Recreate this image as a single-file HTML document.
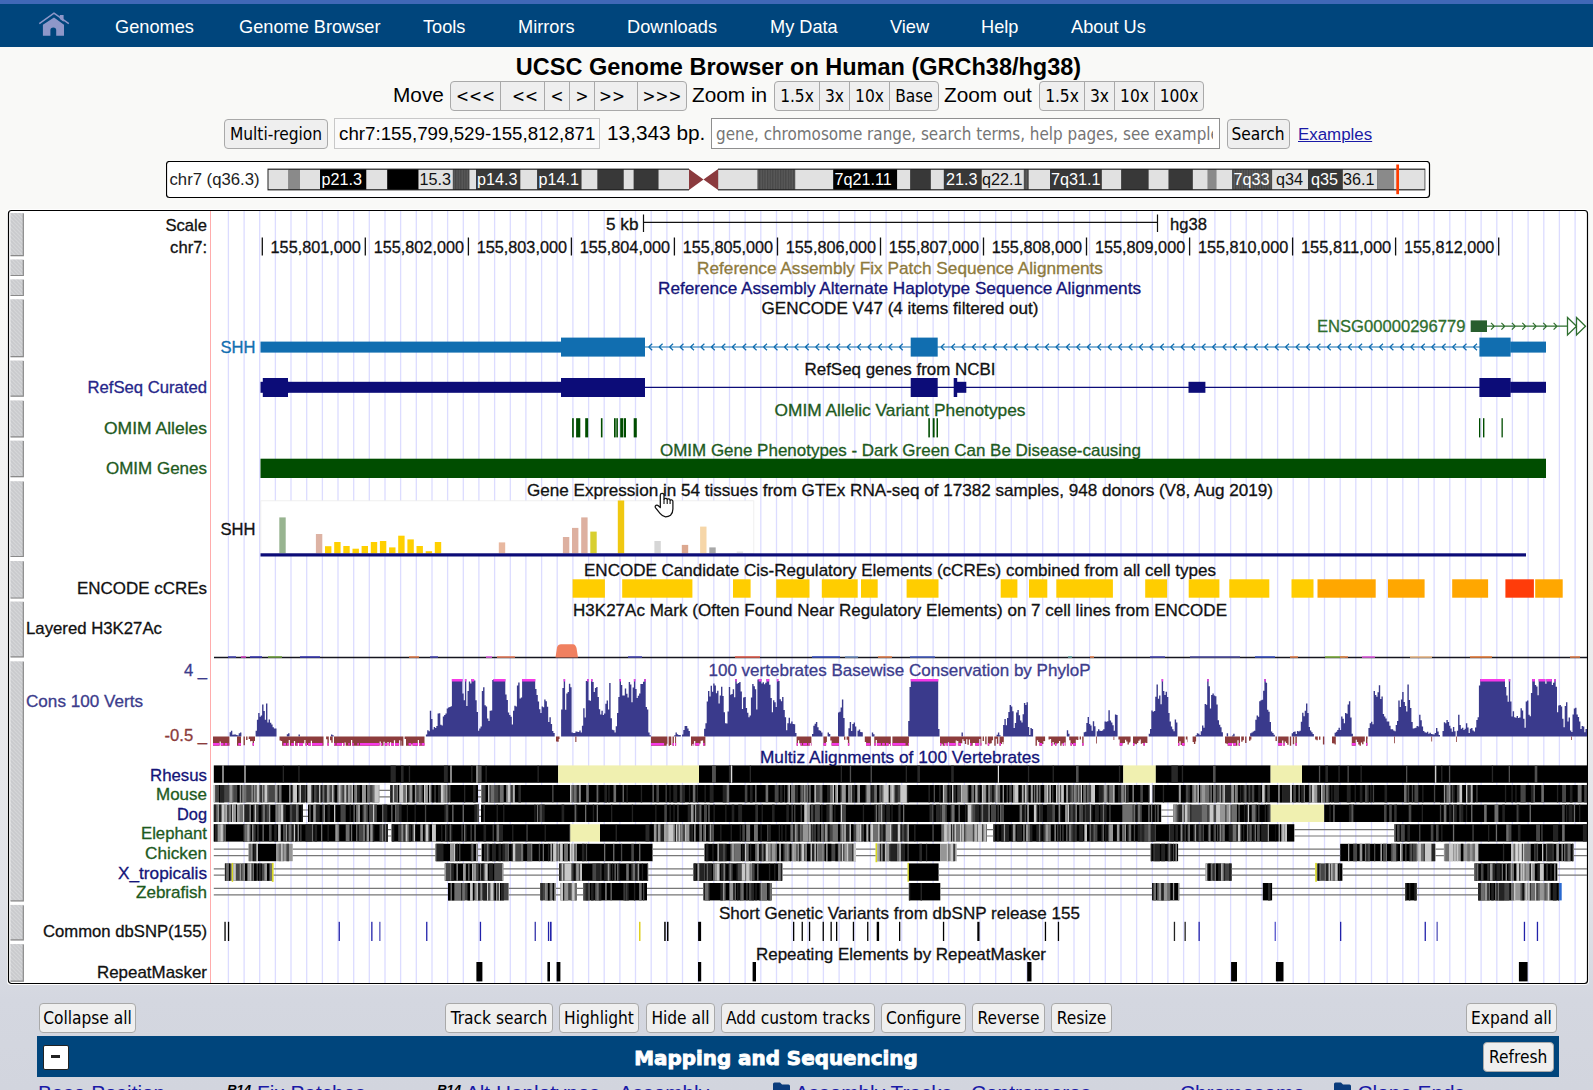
<!DOCTYPE html>
<html lang="en"><head><meta charset="utf-8"><title>Human hg38 chr7:155,799,529-155,812,871 UCSC Genome Browser</title>
<style>
html,body{margin:0;padding:0}
body{width:1593px;height:1090px;overflow:hidden;position:relative;font-family:"Liberation Sans",Arial,sans-serif;color:#000;
background:linear-gradient(to bottom,#f9f9f7 0px,#f9f9f7 300px,#eeeeee 600px,#e0e2e7 900px,#d4d7e0 1000px,#d2d5de 1090px)}
.abs{position:absolute}
#strip{left:0;top:0;width:1593px;height:4px;background:#4068b7}
#nav{left:0;top:4px;width:1593px;height:43px;background:#00457c}
#nav span{position:absolute;top:13px;color:#fff;font-size:18.2px;line-height:20px;white-space:nowrap}
#title{left:2px;width:1593px;top:53px;text-align:center;font-weight:bold;font-size:23.5px;line-height:28px;white-space:nowrap}
.lbl{font-size:20.8px;line-height:24px;white-space:nowrap}
.btn{position:absolute;box-sizing:border-box;border:1px solid #a9a9a9;border-radius:4px;background:#efefef;font-family:"DejaVu Sans Condensed","DejaVu Sans",sans-serif;font-size:17.2px;line-height:28.6px;text-align:center;white-space:nowrap;color:#000;height:30px}
.inp{position:absolute;box-sizing:border-box;border:1px solid #c8c8c8;background:#fafafa;font-size:18.75px;line-height:27px;white-space:nowrap;height:30px;padding-left:4px;overflow:hidden}
</style></head><body>
<div id="strip" class="abs"></div>
<div id="nav" class="abs">
<svg class="abs" style="left:36px;top:-4px" width="36" height="44" viewBox="36 0 36 44"><path d="M39.3 23.7L54 13.1L68.8 23.7" fill="none" stroke="#8e97c9" stroke-width="1.5" stroke-linejoin="miter"/><path d="M59.8 15H63.6V21.8L59.8 19Z" fill="#8e97c9"/><path d="M54 17.4L64 24.8V35.8H56.2V30Q56.2 27.4 53.3 27.4Q50.400000 27.4 50.4 30V35.8H42.9V24.8Z" fill="#8e97c9"/></svg>
<span style="left:115px">Genomes</span>
<span style="left:239px">Genome Browser</span>
<span style="left:423px">Tools</span>
<span style="left:518px">Mirrors</span>
<span style="left:627px">Downloads</span>
<span style="left:770px">My Data</span>
<span style="left:890px">View</span>
<span style="left:981px">Help</span>
<span style="left:1071px">About Us</span>
</div>
<div id="title" class="abs">UCSC Genome Browser on Human (GRCh38/hg38)</div>

<div class="abs lbl" style="left:393px;top:83px">Move</div>
<div class="btn" style="left:450px;top:80.5px;width:51px;border-radius:4px 0 0 4px">&lt;&lt;&lt;</div>
<div class="btn" style="left:500px;top:80.5px;width:45px;border-radius:0;padding-left:5px">&lt;&lt;</div>
<div class="btn" style="left:544px;top:80.5px;width:26px;border-radius:0">&lt;</div>
<div class="btn" style="left:569px;top:80.5px;width:26px;border-radius:0">&gt;</div>
<div class="btn" style="left:594px;top:80.5px;width:44px;border-radius:0;padding-right:8px">&gt;&gt;</div>
<div class="btn" style="left:637px;top:80.5px;width:50px;border-radius:0 4px 4px 0">&gt;&gt;&gt;</div>
<div class="abs lbl" style="left:692px;top:83px">Zoom in</div>
<div class="btn" style="left:774px;top:80.5px;width:46px;border-radius:4px 0 0 4px">1.5x</div>
<div class="btn" style="left:819px;top:80.5px;width:31px;border-radius:0">3x</div>
<div class="btn" style="left:849px;top:80.5px;width:41px;border-radius:0">10x</div>
<div class="btn" style="left:889px;top:80.5px;width:50px;border-radius:0 4px 4px 0">Base</div>
<div class="abs lbl" style="left:944px;top:83px">Zoom out</div>
<div class="btn" style="left:1039px;top:80.5px;width:46px;border-radius:4px 0 0 4px">1.5x</div>
<div class="btn" style="left:1084px;top:80.5px;width:31px;border-radius:0">3x</div>
<div class="btn" style="left:1114px;top:80.5px;width:41px;border-radius:0">10x</div>
<div class="btn" style="left:1154px;top:80.5px;width:50px;border-radius:0 4px 4px 0">100x</div>

<div class="btn" style="left:224px;top:118.5px;width:104px;height:30.5px;line-height:29.6px">Multi-region</div>
<div class="inp" style="left:334px;top:117.5px;width:266px;height:31px;line-height:29px">chr7:155,799,529-155,812,871</div>
<div class="abs lbl" style="left:607px;top:121px">13,343 bp.</div>
<div class="inp" style="left:711px;top:118px;width:509px;height:30.5px;line-height:30.5px;border-color:#8f8f8f;background:#fff;color:#757575;font-family:'DejaVu Sans Condensed',sans-serif;font-size:16.9px"><div style="overflow:hidden;width:497px">gene, chromosome range, search terms, help pages, see examples</div></div>
<div class="btn" style="left:1226.5px;top:118.5px;width:63px;height:30.5px;line-height:29.6px">Search</div>
<div class="abs" style="left:1298px;top:125px;font-size:16.9px;line-height:20px;color:#1a1aa6;text-decoration:underline">Examples</div>

<svg class="abs" style="left:166px;top:161px" width="1265" height="38" viewBox="166 161 1265 38" font-family="Liberation Sans, Arial, sans-serif" font-size="16.2">
<defs><pattern id="gv" width="2.6" height="4" patternUnits="userSpaceOnUse"><rect width="2.6" height="4" fill="#5a5a5a"/><rect width="1.3" height="4" fill="#474747"/></pattern></defs>
<rect x="166.5" y="161.5" width="1263" height="36" rx="3" fill="#fff" stroke="#000" stroke-width="1.2"/>
<text x="169.5" y="185" fill="#222" textLength="90" lengthAdjust="spacingAndGlyphs">chr7 (q36.3)</text>
<rect x="267.5" y="168.6" width="421.5" height="21.8" fill="#222"/>
<rect x="718" y="168.6" width="707.3" height="21.8" fill="#222"/>
<rect x="268.5" y="169.8" width="20.1" height="19.4" fill="#e1e1e1"/>
<rect x="288.6" y="169.8" width="11.4" height="19.4" fill="#8a8a8a"/>
<rect x="300.0" y="169.8" width="20.1" height="19.4" fill="#e1e1e1"/>
<rect x="320.1" y="169.8" width="46.2" height="19.4" fill="#000"/>
<rect x="366.3" y="169.8" width="21.1" height="19.4" fill="#e1e1e1"/>
<rect x="387.4" y="169.8" width="31.1" height="19.4" fill="#000"/>
<rect x="418.5" y="169.8" width="34.4" height="19.4" fill="#e1e1e1"/>
<rect x="452.9" y="169.8" width="16.5" height="19.4" fill="url(#gv)"/>
<rect x="469.4" y="169.8" width="6.6" height="19.4" fill="#e1e1e1"/>
<rect x="476.0" y="169.8" width="44.3" height="19.4" fill="#383838"/>
<rect x="520.3" y="169.8" width="17.0" height="19.4" fill="#e1e1e1"/>
<rect x="537.3" y="169.8" width="44.2" height="19.4" fill="#383838"/>
<rect x="581.5" y="169.8" width="16.1" height="19.4" fill="#e1e1e1"/>
<rect x="597.6" y="169.8" width="26.1" height="19.4" fill="#383838"/>
<rect x="623.7" y="169.8" width="10.1" height="19.4" fill="#e1e1e1"/>
<rect x="633.8" y="169.8" width="24.7" height="19.4" fill="#383838"/>
<rect x="658.5" y="169.8" width="30.5" height="19.4" fill="#e1e1e1"/>
<rect x="718.1" y="169.8" width="39.6" height="19.4" fill="#e1e1e1"/>
<rect x="757.7" y="169.8" width="37.5" height="19.4" fill="url(#gv)"/>
<rect x="795.2" y="169.8" width="38.2" height="19.4" fill="#e1e1e1"/>
<rect x="833.4" y="169.8" width="63.7" height="19.4" fill="#000"/>
<rect x="897.1" y="169.8" width="13.3" height="19.4" fill="#e1e1e1"/>
<rect x="910.4" y="169.8" width="20.4" height="19.4" fill="#383838"/>
<rect x="930.8" y="169.8" width="13.1" height="19.4" fill="#e1e1e1"/>
<rect x="943.9" y="169.8" width="37.8" height="19.4" fill="#383838"/>
<rect x="981.7" y="169.8" width="42.2" height="19.4" fill="#e1e1e1"/>
<rect x="1023.9" y="169.8" width="4.8" height="19.4" fill="url(#gv)"/>
<rect x="1028.7" y="169.8" width="21.4" height="19.4" fill="#e1e1e1"/>
<rect x="1050.1" y="169.8" width="51.7" height="19.4" fill="#383838"/>
<rect x="1101.8" y="169.8" width="19.6" height="19.4" fill="#e1e1e1"/>
<rect x="1121.4" y="169.8" width="27.2" height="19.4" fill="#383838"/>
<rect x="1148.6" y="169.8" width="20.1" height="19.4" fill="#e1e1e1"/>
<rect x="1168.7" y="169.8" width="24.1" height="19.4" fill="#383838"/>
<rect x="1192.8" y="169.8" width="15.0" height="19.4" fill="#e1e1e1"/>
<rect x="1207.8" y="169.8" width="8.5" height="19.4" fill="#8a8a8a"/>
<rect x="1216.3" y="169.8" width="16.0" height="19.4" fill="#e1e1e1"/>
<rect x="1232.3" y="169.8" width="39.8" height="19.4" fill="url(#gv)"/>
<rect x="1272.1" y="169.8" width="36.0" height="19.4" fill="#e1e1e1"/>
<rect x="1308.1" y="169.8" width="34.7" height="19.4" fill="#383838"/>
<rect x="1342.8" y="169.8" width="34.3" height="19.4" fill="#e1e1e1"/>
<rect x="1377.1" y="169.8" width="16.9" height="19.4" fill="#8a8a8a"/>
<rect x="1394.0" y="169.8" width="30.6" height="19.4" fill="#e1e1e1"/>
<path d="M689 169 L703.5 179.5 L689 190 Z M718.1 169 L703.5 179.5 L718.1 190 Z" fill="#8b3a3e"/>
<text x="321.5" y="185.3" fill="#fff">p21.3</text>
<text x="419.5" y="185.3" fill="#111">15.3</text>
<text x="477.0" y="185.3" fill="#fff">p14.3</text>
<text x="538.5" y="185.3" fill="#fff">p14.1</text>
<text x="834.5" y="185.3" fill="#fff">7q21.11</text>
<text x="946.0" y="185.3" fill="#fff">21.3</text>
<text x="982.0" y="185.3" fill="#111">q22.1</text>
<text x="1051.0" y="185.3" fill="#fff">7q31.1</text>
<text x="1233.5" y="185.3" fill="#fff">7q33</text>
<text x="1276.0" y="185.3" fill="#111">q34</text>
<text x="1311.0" y="185.3" fill="#fff">q35</text>
<text x="1343.0" y="185.3" fill="#111">36.1</text>
<rect x="1396.3" y="164.5" width="2.7" height="29.7" fill="#ff3c00"/>
</svg>
<div class="abs" style="left:7px;top:209px;width:1582px;height:776px;background:#fff;border-radius:4px"></div>
<svg class="abs" style="left:7px;top:209px" width="1583" height="777" viewBox="7 209 1583 777" font-family="Liberation Sans, Arial, sans-serif" font-size="16.6">
<defs><clipPath id="cp"><rect x="9" y="211" width="1578" height="772"/></clipPath><pattern id="hatch" width="4" height="4" patternUnits="userSpaceOnUse"><rect width="4" height="4" fill="#c9cacd"/><path d="M0 0L4 4M-1 3L1 5M3 -1L5 1" stroke="#d6d7d9" stroke-width="1.2"/></pattern></defs>
<rect x="8.5" y="210.5" width="1579.0" height="773.0" fill="#fff" stroke="#000" stroke-width="1.2" rx="3"/>
<g clip-path="url(#cp)">
<path d="M228.4 211V983M244.1 211V983M259.7 211V983M275.4 211V983M291.0 211V983M306.7 211V983M322.4 211V983M338.0 211V983M353.7 211V983M369.3 211V983M385.0 211V983M400.6 211V983M416.3 211V983M432.0 211V983M447.6 211V983M463.3 211V983M478.9 211V983M494.6 211V983M510.3 211V983M525.9 211V983M541.6 211V983M557.2 211V983M572.9 211V983M588.6 211V983M604.2 211V983M619.9 211V983M635.5 211V983M651.2 211V983M666.9 211V983M682.5 211V983M698.2 211V983M713.8 211V983M729.5 211V983M745.1 211V983M760.8 211V983M776.5 211V983M792.1 211V983M807.8 211V983M823.4 211V983M839.1 211V983M854.8 211V983M870.4 211V983M886.1 211V983M901.7 211V983M917.4 211V983M933.1 211V983M948.7 211V983M964.4 211V983M980.0 211V983M995.7 211V983M1011.3 211V983M1027.0 211V983M1042.7 211V983M1058.3 211V983M1074.0 211V983M1089.6 211V983M1105.3 211V983M1121.0 211V983M1136.6 211V983M1152.3 211V983M1167.9 211V983M1183.6 211V983M1199.3 211V983M1214.9 211V983M1230.6 211V983M1246.2 211V983M1261.9 211V983M1277.6 211V983M1293.2 211V983M1308.9 211V983M1324.5 211V983M1340.2 211V983M1355.8 211V983M1371.5 211V983M1387.2 211V983M1402.8 211V983M1418.5 211V983M1434.1 211V983M1449.8 211V983M1465.5 211V983M1481.1 211V983M1496.8 211V983M1512.4 211V983M1528.1 211V983M1543.8 211V983M1559.4 211V983M1575.1 211V983" stroke="#dcdcff" stroke-width="1.3" fill="none"/>
<path d="M210.5 211V983" stroke="#ffacac" stroke-width="1" fill="none"/>
<rect x="10.3" y="213.0" width="13.5" height="43.1" fill="url(#hatch)"/>
<path d="M23.3 213.5V255.6H10.6" stroke="#8a8a8a" stroke-width="1.2" fill="none"/>
<rect x="10.3" y="259.4" width="13.5" height="16.6" fill="url(#hatch)"/>
<path d="M23.3 259.9V275.5H10.6" stroke="#8a8a8a" stroke-width="1.2" fill="none"/>
<rect x="10.3" y="279.3" width="13.5" height="16.7" fill="url(#hatch)"/>
<path d="M23.3 279.8V295.5H10.6" stroke="#8a8a8a" stroke-width="1.2" fill="none"/>
<rect x="10.3" y="299.2" width="13.5" height="58.0" fill="url(#hatch)"/>
<path d="M23.3 299.7V356.7H10.6" stroke="#8a8a8a" stroke-width="1.2" fill="none"/>
<rect x="10.3" y="360.5" width="13.5" height="36.2" fill="url(#hatch)"/>
<path d="M23.3 361.0V396.2H10.6" stroke="#8a8a8a" stroke-width="1.2" fill="none"/>
<rect x="10.3" y="400.4" width="13.5" height="36.9" fill="url(#hatch)"/>
<path d="M23.3 400.9V436.8H10.6" stroke="#8a8a8a" stroke-width="1.2" fill="none"/>
<rect x="10.3" y="440.6" width="13.5" height="36.6" fill="url(#hatch)"/>
<path d="M23.3 441.1V476.7H10.6" stroke="#8a8a8a" stroke-width="1.2" fill="none"/>
<rect x="10.3" y="481.2" width="13.5" height="75.8" fill="url(#hatch)"/>
<path d="M23.3 481.7V556.5H10.6" stroke="#8a8a8a" stroke-width="1.2" fill="none"/>
<rect x="10.3" y="561.0" width="13.5" height="37.5" fill="url(#hatch)"/>
<path d="M23.3 561.5V598.0H10.6" stroke="#8a8a8a" stroke-width="1.2" fill="none"/>
<rect x="10.3" y="601.5" width="13.5" height="55.8" fill="url(#hatch)"/>
<path d="M23.3 602.0V656.8H10.6" stroke="#8a8a8a" stroke-width="1.2" fill="none"/>
<rect x="10.3" y="661.3" width="13.5" height="240.0" fill="url(#hatch)"/>
<path d="M23.3 661.8V900.8H10.6" stroke="#8a8a8a" stroke-width="1.2" fill="none"/>
<rect x="10.3" y="904.9" width="13.5" height="35.5" fill="url(#hatch)"/>
<path d="M23.3 905.4V939.9H10.6" stroke="#8a8a8a" stroke-width="1.2" fill="none"/>
<rect x="10.3" y="944.0" width="13.5" height="37.7" fill="url(#hatch)"/>
<path d="M23.3 944.5V981.2H10.6" stroke="#8a8a8a" stroke-width="1.2" fill="none"/>
<text x="207.0" y="231.0" text-anchor="end" fill="#111" stroke="#111" stroke-width="0.3">Scale</text>
<text x="207.0" y="253.0" text-anchor="end" fill="#111" stroke="#111" stroke-width="0.3">chr7:</text>
<text x="638.5" y="229.5" text-anchor="end" fill="#111" stroke="#111" stroke-width="0.3" textLength="32.5" lengthAdjust="spacingAndGlyphs">5 kb</text>
<path d="M643.5 214.5V232M643.5 222.3H1157.5M1157.5 214.5V232" stroke="#111" stroke-width="1.2" fill="none"/>
<text x="1170.0" y="229.5" text-anchor="start" fill="#111" stroke="#111" stroke-width="0.3">hg38</text>
<text x="360.9" y="252.5" text-anchor="end" fill="#111" stroke="#111" stroke-width="0.3" textLength="90.3" lengthAdjust="spacingAndGlyphs">155,801,000</text>
<text x="464.0" y="252.5" text-anchor="end" fill="#111" stroke="#111" stroke-width="0.3" textLength="90.3" lengthAdjust="spacingAndGlyphs">155,802,000</text>
<text x="567.0" y="252.5" text-anchor="end" fill="#111" stroke="#111" stroke-width="0.3" textLength="90.3" lengthAdjust="spacingAndGlyphs">155,803,000</text>
<text x="670.0" y="252.5" text-anchor="end" fill="#111" stroke="#111" stroke-width="0.3" textLength="90.3" lengthAdjust="spacingAndGlyphs">155,804,000</text>
<text x="773.1" y="252.5" text-anchor="end" fill="#111" stroke="#111" stroke-width="0.3" textLength="90.3" lengthAdjust="spacingAndGlyphs">155,805,000</text>
<text x="876.1" y="252.5" text-anchor="end" fill="#111" stroke="#111" stroke-width="0.3" textLength="90.3" lengthAdjust="spacingAndGlyphs">155,806,000</text>
<text x="979.1" y="252.5" text-anchor="end" fill="#111" stroke="#111" stroke-width="0.3" textLength="90.3" lengthAdjust="spacingAndGlyphs">155,807,000</text>
<text x="1082.1" y="252.5" text-anchor="end" fill="#111" stroke="#111" stroke-width="0.3" textLength="90.3" lengthAdjust="spacingAndGlyphs">155,808,000</text>
<text x="1185.2" y="252.5" text-anchor="end" fill="#111" stroke="#111" stroke-width="0.3" textLength="90.3" lengthAdjust="spacingAndGlyphs">155,809,000</text>
<text x="1288.2" y="252.5" text-anchor="end" fill="#111" stroke="#111" stroke-width="0.3" textLength="90.3" lengthAdjust="spacingAndGlyphs">155,810,000</text>
<text x="1391.2" y="252.5" text-anchor="end" fill="#111" stroke="#111" stroke-width="0.3" textLength="90.3" lengthAdjust="spacingAndGlyphs">155,811,000</text>
<text x="1494.3" y="252.5" text-anchor="end" fill="#111" stroke="#111" stroke-width="0.3" textLength="90.3" lengthAdjust="spacingAndGlyphs">155,812,000</text>
<path d="M262.3 237.5V255.5M365.3 237.5V255.5M468.4 237.5V255.5M571.4 237.5V255.5M674.4 237.5V255.5M777.5 237.5V255.5M880.5 237.5V255.5M983.5 237.5V255.5M1086.5 237.5V255.5M1189.6 237.5V255.5M1292.6 237.5V255.5M1395.6 237.5V255.5M1498.7 237.5V255.5" stroke="#111" stroke-width="1.3" fill="none"/>
<text x="900.0" y="274.0" text-anchor="middle" fill="#8e7a3c" stroke="#8e7a3c" stroke-width="0.3" textLength="406.0" lengthAdjust="spacingAndGlyphs">Reference Assembly Fix Patch Sequence Alignments</text>
<text x="899.5" y="294.0" text-anchor="middle" fill="#141478" stroke="#141478" stroke-width="0.3" textLength="483.0" lengthAdjust="spacingAndGlyphs">Reference Assembly Alternate Haplotype Sequence Alignments</text>
<text x="900.0" y="313.5" text-anchor="middle" fill="#111" stroke="#111" stroke-width="0.3" textLength="277.0" lengthAdjust="spacingAndGlyphs">GENCODE V47 (4 items filtered out)</text>
<text x="1465.5" y="332.0" text-anchor="end" fill="#2e6e2e" stroke="#2e6e2e" stroke-width="0.3" textLength="148.5" lengthAdjust="spacingAndGlyphs">ENSG00000296779</text>
<rect x="1470.7" y="320.4" width="16.3" height="11.6" fill="#285e2e"/>
<path d="M1487 326.2H1568M1491.0 322.8L1494.4 326.2L1491.0 329.6M1501.4 322.8L1504.8 326.2L1501.4 329.6M1511.9 322.8L1515.3 326.2L1511.9 329.6M1522.3 322.8L1525.7 326.2L1522.3 329.6M1532.8 322.8L1536.2 326.2L1532.8 329.6M1543.2 322.8L1546.6 326.2L1543.2 329.6M1553.6 322.8L1557.0 326.2L1553.6 329.6" stroke="#2e6e2e" stroke-width="1.2" fill="none"/>
<path d="M1567.5 317.5L1576.5 326.2L1567.5 335ZM1576.5 317.5L1585.5 326.2L1576.5 335Z" stroke="#2e6e2e" stroke-width="1.3" fill="#fff"/>
<text x="255.5" y="353.0" text-anchor="end" fill="#116eb0" stroke="#116eb0" stroke-width="0.3">SHH</text>
<path d="M645 347H1480M652.2 343.8L648.6 347L652.2 350.2M662.6 343.8L659.0 347L662.6 350.2M673.1 343.8L669.5 347L673.1 350.2M683.5 343.8L679.9 347L683.5 350.2M694.0 343.8L690.4 347L694.0 350.2M704.4 343.8L700.8 347L704.4 350.2M714.8 343.8L711.2 347L714.8 350.2M725.3 343.8L721.7 347L725.3 350.2M735.7 343.8L732.1 347L735.7 350.2M746.2 343.8L742.6 347L746.2 350.2M756.6 343.8L753.0 347L756.6 350.2M767.0 343.8L763.4 347L767.0 350.2M777.5 343.8L773.9 347L777.5 350.2M787.9 343.8L784.3 347L787.9 350.2M798.4 343.8L794.8 347L798.4 350.2M808.8 343.8L805.2 347L808.8 350.2M819.2 343.8L815.6 347L819.2 350.2M829.7 343.8L826.1 347L829.7 350.2M840.1 343.8L836.5 347L840.1 350.2M850.6 343.8L847.0 347L850.6 350.2M861.0 343.8L857.4 347L861.0 350.2M871.4 343.8L867.8 347L871.4 350.2M881.9 343.8L878.3 347L881.9 350.2M892.3 343.8L888.7 347L892.3 350.2M902.8 343.8L899.2 347L902.8 350.2M944.5 343.8L940.9 347L944.5 350.2M955.0 343.8L951.4 347L955.0 350.2M965.4 343.8L961.8 347L965.4 350.2M975.8 343.8L972.2 347L975.8 350.2M986.3 343.8L982.7 347L986.3 350.2M996.7 343.8L993.1 347L996.7 350.2M1007.2 343.8L1003.6 347L1007.2 350.2M1017.6 343.8L1014.0 347L1017.6 350.2M1028.0 343.8L1024.4 347L1028.0 350.2M1038.5 343.8L1034.9 347L1038.5 350.2M1048.9 343.8L1045.3 347L1048.9 350.2M1059.4 343.8L1055.8 347L1059.4 350.2M1069.8 343.8L1066.2 347L1069.8 350.2M1080.2 343.8L1076.6 347L1080.2 350.2M1090.7 343.8L1087.1 347L1090.7 350.2M1101.1 343.8L1097.5 347L1101.1 350.2M1111.6 343.8L1108.0 347L1111.6 350.2M1122.0 343.8L1118.4 347L1122.0 350.2M1132.4 343.8L1128.8 347L1132.4 350.2M1142.9 343.8L1139.3 347L1142.9 350.2M1153.3 343.8L1149.7 347L1153.3 350.2M1163.8 343.8L1160.2 347L1163.8 350.2M1174.2 343.8L1170.6 347L1174.2 350.2M1184.6 343.8L1181.0 347L1184.6 350.2M1195.1 343.8L1191.5 347L1195.1 350.2M1205.5 343.8L1201.9 347L1205.5 350.2M1216.0 343.8L1212.4 347L1216.0 350.2M1226.4 343.8L1222.8 347L1226.4 350.2M1236.8 343.8L1233.2 347L1236.8 350.2M1247.3 343.8L1243.7 347L1247.3 350.2M1257.7 343.8L1254.1 347L1257.7 350.2M1268.2 343.8L1264.6 347L1268.2 350.2M1278.6 343.8L1275.0 347L1278.6 350.2M1289.0 343.8L1285.4 347L1289.0 350.2M1299.5 343.8L1295.9 347L1299.5 350.2M1309.9 343.8L1306.3 347L1309.9 350.2M1320.4 343.8L1316.8 347L1320.4 350.2M1330.8 343.8L1327.2 347L1330.8 350.2M1341.2 343.8L1337.6 347L1341.2 350.2M1351.7 343.8L1348.1 347L1351.7 350.2M1362.1 343.8L1358.5 347L1362.1 350.2M1372.6 343.8L1369.0 347L1372.6 350.2M1383.0 343.8L1379.4 347L1383.0 350.2M1393.4 343.8L1389.8 347L1393.4 350.2M1403.9 343.8L1400.3 347L1403.9 350.2M1414.3 343.8L1410.7 347L1414.3 350.2M1424.8 343.8L1421.2 347L1424.8 350.2M1435.2 343.8L1431.6 347L1435.2 350.2M1445.6 343.8L1442.0 347L1445.6 350.2M1456.1 343.8L1452.5 347L1456.1 350.2M1466.5 343.8L1462.9 347L1466.5 350.2M1477.0 343.8L1473.4 347L1477.0 350.2" stroke="#116eb0" stroke-width="1.2" fill="none"/>
<rect x="260.5" y="341.6" width="301.0" height="11.0" fill="#116eb0"/>
<rect x="561.0" y="337.6" width="84.0" height="19.0" fill="#116eb0"/>
<rect x="910.7" y="337.6" width="27.0" height="19.0" fill="#116eb0"/>
<rect x="1479.4" y="337.6" width="31.2" height="19.0" fill="#116eb0"/>
<rect x="1510.2" y="341.6" width="35.8" height="11.0" fill="#116eb0"/>
<text x="900.0" y="375.0" text-anchor="middle" fill="#111" stroke="#111" stroke-width="0.3" textLength="191.0" lengthAdjust="spacingAndGlyphs">RefSeq genes from NCBI</text>
<text x="207.0" y="393.0" text-anchor="end" fill="#26268a" stroke="#26268a" stroke-width="0.3" textLength="119.5" lengthAdjust="spacingAndGlyphs">RefSeq Curated</text>
<path d="M645 387.3H1480" stroke="#0c0c78" stroke-width="1.2" fill="none"/>
<rect x="260.5" y="381.8" width="28.0" height="11.0" fill="#0c0c78"/>
<rect x="262.8" y="378.0" width="25.2" height="19.0" fill="#0c0c78"/>
<rect x="287.5" y="381.8" width="274.0" height="11.0" fill="#0c0c78"/>
<rect x="561.0" y="378.0" width="84.0" height="19.0" fill="#0c0c78"/>
<rect x="910.7" y="378.0" width="27.0" height="19.0" fill="#0c0c78"/>
<rect x="953.7" y="378.0" width="3.5" height="19.0" fill="#0c0c78"/>
<rect x="957.0" y="381.8" width="9.3" height="11.0" fill="#0c0c78"/>
<rect x="1188.5" y="381.8" width="16.9" height="11.0" fill="#0c0c78"/>
<rect x="1479.4" y="378.0" width="31.2" height="19.0" fill="#0c0c78"/>
<rect x="1510.2" y="381.8" width="35.8" height="11.0" fill="#0c0c78"/>
<text x="900.0" y="415.5" text-anchor="middle" fill="#1e5a1e" stroke="#1e5a1e" stroke-width="0.3" textLength="251.0" lengthAdjust="spacingAndGlyphs">OMIM Allelic Variant Phenotypes</text>
<text x="207.0" y="433.5" text-anchor="end" fill="#1e5a1e" stroke="#1e5a1e" stroke-width="0.3" textLength="103.0" lengthAdjust="spacingAndGlyphs">OMIM Alleles</text>
<rect x="572.1" y="418.2" width="1.7" height="19.2" fill="#004d00"/>
<rect x="576.1" y="418.2" width="4.2" height="19.2" fill="#004d00"/>
<rect x="585.2" y="418.2" width="3.0" height="19.2" fill="#004d00"/>
<rect x="600.9" y="418.2" width="1.6" height="19.2" fill="#004d00"/>
<rect x="614.0" y="418.2" width="1.7" height="19.2" fill="#004d00"/>
<rect x="616.3" y="418.2" width="1.6" height="19.2" fill="#004d00"/>
<rect x="620.2" y="418.2" width="3.0" height="19.2" fill="#004d00"/>
<rect x="623.8" y="418.2" width="2.2" height="19.2" fill="#004d00"/>
<rect x="633.7" y="418.2" width="3.1" height="19.2" fill="#004d00"/>
<rect x="928.3" y="418.2" width="1.6" height="19.2" fill="#004d00"/>
<rect x="932.7" y="418.2" width="1.9" height="19.2" fill="#004d00"/>
<rect x="936.5" y="418.2" width="1.5" height="19.2" fill="#004d00"/>
<rect x="1479.0" y="418.2" width="1.3" height="19.2" fill="#004d00"/>
<rect x="1483.0" y="418.2" width="1.4" height="19.2" fill="#004d00"/>
<rect x="1501.5" y="418.2" width="1.3" height="19.2" fill="#004d00"/>
<text x="900.5" y="456.0" text-anchor="middle" fill="#1e5a1e" stroke="#1e5a1e" stroke-width="0.3" textLength="481.0" lengthAdjust="spacingAndGlyphs">OMIM Gene Phenotypes - Dark Green Can Be Disease-causing</text>
<text x="207.0" y="474.0" text-anchor="end" fill="#1e5a1e" stroke="#1e5a1e" stroke-width="0.3" textLength="101.0" lengthAdjust="spacingAndGlyphs">OMIM Genes</text>
<rect x="260.5" y="458.7" width="1285.5" height="19.3" fill="#004d00"/>
<text x="900.0" y="496.0" text-anchor="middle" fill="#111" stroke="#111" stroke-width="0.3" textLength="746.0" lengthAdjust="spacingAndGlyphs">Gene Expression in 54 tissues from GTEx RNA-seq of 17382 samples, 948 donors (V8, Aug 2019)</text>
<rect x="260.8" y="500.8" width="493.0" height="52.6" fill="#fff" stroke="#ececec" stroke-width="0.8"/>
<text x="255.5" y="535.0" text-anchor="end" fill="#111" stroke="#111" stroke-width="0.3">SHH</text>
<rect x="279.3" y="517.4" width="6.4" height="36.0" fill="#98b490"/>
<rect x="315.9" y="534.0" width="6.4" height="19.4" fill="#ddb3a4"/>
<rect x="325.0" y="546.2" width="6.4" height="7.2" fill="#ffd000"/>
<rect x="334.2" y="542.0" width="6.4" height="11.4" fill="#ffd000"/>
<rect x="343.3" y="546.0" width="6.4" height="7.4" fill="#ffd000"/>
<rect x="352.5" y="548.7" width="6.4" height="4.7" fill="#ffd000"/>
<rect x="361.6" y="546.0" width="6.4" height="7.4" fill="#ffd000"/>
<rect x="370.8" y="542.0" width="6.4" height="11.4" fill="#ffd000"/>
<rect x="379.9" y="541.0" width="6.4" height="12.4" fill="#ffd000"/>
<rect x="389.1" y="547.4" width="6.4" height="6.0" fill="#ffd000"/>
<rect x="398.2" y="535.7" width="6.4" height="17.7" fill="#ffd000"/>
<rect x="407.4" y="539.4" width="6.4" height="14.0" fill="#ffd000"/>
<rect x="416.5" y="546.0" width="6.4" height="7.4" fill="#ffd000"/>
<rect x="425.7" y="551.2" width="6.4" height="2.2" fill="#ffd000"/>
<rect x="434.8" y="542.0" width="6.4" height="11.4" fill="#ffd000"/>
<rect x="498.8" y="542.4" width="6.4" height="11.0" fill="#e8b8a0"/>
<rect x="562.9" y="537.0" width="6.4" height="16.4" fill="#ddb0a0"/>
<rect x="572.0" y="527.9" width="6.4" height="25.5" fill="#ddb0a0"/>
<rect x="581.2" y="517.4" width="6.4" height="36.0" fill="#ddb0a0"/>
<rect x="590.3" y="531.6" width="6.4" height="21.8" fill="#d8cf30"/>
<rect x="617.8" y="500.5" width="6.4" height="52.9" fill="#f0c810"/>
<rect x="654.4" y="541.0" width="6.4" height="12.4" fill="#d6d6d6"/>
<rect x="681.8" y="544.9" width="6.4" height="8.5" fill="#dca890"/>
<rect x="700.1" y="526.6" width="6.4" height="26.8" fill="#f6d6a8"/>
<rect x="709.3" y="547.4" width="6.4" height="6.0" fill="#a8a8a8"/>
<rect x="736.7" y="551.5" width="6.4" height="1.9" fill="#e4e4e4"/>
<rect x="260.5" y="553.3" width="1265.5" height="3.2" fill="#0c0c78"/>
<text x="900.0" y="576.0" text-anchor="middle" fill="#111" stroke="#111" stroke-width="0.3" textLength="632.0" lengthAdjust="spacingAndGlyphs">ENCODE Candidate Cis-Regulatory Elements (cCREs) combined from all cell types</text>
<text x="207.0" y="594.0" text-anchor="end" fill="#111" stroke="#111" stroke-width="0.3" textLength="130.0" lengthAdjust="spacingAndGlyphs">ENCODE cCREs</text>
<rect x="572.6" y="579.3" width="32.3" height="18.4" fill="#ffcd00"/>
<rect x="622.2" y="579.3" width="70.2" height="18.4" fill="#ffcd00"/>
<rect x="733.0" y="579.3" width="17.6" height="18.4" fill="#ffcd00"/>
<rect x="776.2" y="579.3" width="33.3" height="18.4" fill="#ffcd00"/>
<rect x="821.8" y="579.3" width="35.9" height="18.4" fill="#ffcd00"/>
<rect x="861.0" y="579.3" width="16.7" height="18.4" fill="#ffcd00"/>
<rect x="906.6" y="579.3" width="31.9" height="18.4" fill="#ffcd00"/>
<rect x="1000.7" y="579.3" width="16.7" height="18.4" fill="#ffcd00"/>
<rect x="1029.0" y="579.3" width="18.3" height="18.4" fill="#ffcd00"/>
<rect x="1056.3" y="579.3" width="56.6" height="18.4" fill="#ffcd00"/>
<rect x="1145.2" y="579.3" width="21.9" height="18.4" fill="#ffcd00"/>
<rect x="1188.7" y="579.3" width="30.7" height="18.4" fill="#ffcd00"/>
<rect x="1229.3" y="579.3" width="40.0" height="18.4" fill="#ffcd00"/>
<rect x="1291.5" y="579.3" width="22.0" height="18.4" fill="#ffcd00"/>
<rect x="1317.5" y="579.3" width="58.2" height="18.4" fill="#ffa700"/>
<rect x="1388.0" y="579.3" width="36.6" height="18.4" fill="#ffa700"/>
<rect x="1452.2" y="579.3" width="35.9" height="18.4" fill="#ffa700"/>
<rect x="1505.4" y="579.3" width="28.5" height="18.4" fill="#ff3c0a"/>
<rect x="1535.2" y="579.3" width="27.5" height="18.4" fill="#ffa700"/>
<text x="900.0" y="616.0" text-anchor="middle" fill="#111" stroke="#111" stroke-width="0.3" textLength="654.0" lengthAdjust="spacingAndGlyphs">H3K27Ac Mark (Often Found Near Regulatory Elements) on 7 cell lines from ENCODE</text>
<text x="26.0" y="634.0" text-anchor="start" fill="#111" stroke="#111" stroke-width="0.3" textLength="136.0" lengthAdjust="spacingAndGlyphs">Layered H3K27Ac</text>
<path d="M214 657.4H1587" stroke="#15151f" stroke-width="1.5" fill="none"/>
<path d="M555.5 657.5L557 647.5Q558 644.2 561 644.2L573 644.2Q575.5 644.2 576.5 648L578 657.5Z" fill="#f08060"/>
<rect x="228.0" y="656.2" width="8.0" height="1.6" fill="#4a4ab0"/>
<rect x="241.0" y="656.2" width="5.0" height="1.6" fill="#d040c0"/>
<rect x="250.0" y="656.2" width="12.0" height="1.6" fill="#3a3ab0"/>
<rect x="268.0" y="656.2" width="14.0" height="1.6" fill="#70a040"/>
<rect x="300.0" y="656.2" width="20.0" height="1.6" fill="#3a3ab0"/>
<rect x="409.0" y="656.2" width="10.0" height="1.6" fill="#e08050"/>
<rect x="430.0" y="656.2" width="8.0" height="1.6" fill="#4a4ab0"/>
<rect x="486.0" y="656.2" width="6.0" height="1.6" fill="#e060e0"/>
<rect x="497.0" y="656.2" width="18.0" height="1.6" fill="#e88060"/>
<rect x="628.0" y="656.2" width="14.0" height="1.6" fill="#4a4ab0"/>
<rect x="735.0" y="656.2" width="25.0" height="1.6" fill="#e06050"/>
<rect x="812.0" y="656.2" width="28.0" height="1.6" fill="#3a50c0"/>
<rect x="845.0" y="656.2" width="13.0" height="1.6" fill="#7090c0"/>
<rect x="878.0" y="656.2" width="14.0" height="1.6" fill="#e08050"/>
<rect x="910.0" y="656.2" width="25.0" height="1.6" fill="#4a60c0"/>
<rect x="1068.0" y="656.2" width="4.0" height="1.6" fill="#60a0a0"/>
<rect x="1090.0" y="656.2" width="4.0" height="1.6" fill="#e08050"/>
<rect x="1150.0" y="656.2" width="15.0" height="1.6" fill="#4a4ab0"/>
<rect x="1190.0" y="656.2" width="50.0" height="1.6" fill="#5050a0"/>
<rect x="1255.0" y="656.2" width="20.0" height="1.6" fill="#3a50c0"/>
<rect x="1290.0" y="656.2" width="8.0" height="1.6" fill="#e08050"/>
<rect x="1325.0" y="656.2" width="20.0" height="1.6" fill="#80b040"/>
<rect x="1340.0" y="656.2" width="8.0" height="1.6" fill="#e08050"/>
<rect x="1362.0" y="656.2" width="13.0" height="1.6" fill="#e060e0"/>
<rect x="1410.0" y="656.2" width="22.0" height="1.6" fill="#f0c090"/>
<rect x="1470.0" y="656.2" width="22.0" height="1.6" fill="#e88040"/>
<rect x="1570.0" y="656.2" width="10.0" height="1.6" fill="#e08050"/>
<text x="899.5" y="676.0" text-anchor="middle" fill="#3c3c8c" stroke="#3c3c8c" stroke-width="0.3" textLength="382.0" lengthAdjust="spacingAndGlyphs">100 vertebrates Basewise Conservation by PhyloP</text>
<text x="26.0" y="707.0" text-anchor="start" fill="#3c3c8c" stroke="#3c3c8c" stroke-width="0.3" textLength="117.0" lengthAdjust="spacingAndGlyphs">Cons 100 Verts</text>
<text x="207.0" y="675.5" text-anchor="end" fill="#3c3c8c" stroke="#3c3c8c" stroke-width="0.3">4 _</text>
<text x="207.0" y="740.5" text-anchor="end" fill="#8c3c3c" stroke="#8c3c3c" stroke-width="0.3">-0.5 _</text>
<path d="M229.6 736.5V732.3h1.4V736.5zM230.9 736.5V730.7h1.4V736.5zM232.2 736.5V734.8h1.4V736.5zM233.5 736.5V734.6h1.4V736.5zM234.8 736.5V734.5h1.4V736.5zM236.1 736.5V734.9h1.4V736.5zM237.4 736.5V735.5h1.4V736.5zM238.7 736.5V733.2h1.4V736.5zM240.0 736.5V732.4h1.4V736.5zM255.6 736.5V730.8h1.4V736.5zM256.9 736.5V719.8h1.4V736.5zM258.2 736.5V713.0h1.4V736.5zM259.5 736.5V716.8h1.4V736.5zM260.8 736.5V715.4h1.4V736.5zM262.1 736.5V704.6h1.4V736.5zM263.4 736.5V711.0h1.4V736.5zM264.7 736.5V719.8h1.4V736.5zM266.0 736.5V703.6h1.4V736.5zM267.3 736.5V722.4h1.4V736.5zM268.6 736.5V719.5h1.4V736.5zM269.9 736.5V722.8h1.4V736.5zM271.2 736.5V724.6h1.4V736.5zM272.5 736.5V727.3h1.4V736.5zM273.8 736.5V728.5h1.4V736.5zM275.1 736.5V728.4h1.4V736.5zM286.8 736.5V734.2h1.4V736.5zM288.1 736.5V733.3h1.4V736.5zM298.5 736.5V734.5h1.4V736.5zM331.0 736.5V734.5h1.4V736.5zM332.3 736.5V735.3h1.4V736.5zM425.9 736.5V734.5h1.4V736.5zM427.2 736.5V730.3h1.4V736.5zM428.5 736.5V731.3h1.4V736.5zM429.8 736.5V710.8h1.4V736.5zM431.1 736.5V719.0h1.4V736.5zM432.4 736.5V729.5h1.4V736.5zM433.7 736.5V726.9h1.4V736.5zM435.0 736.5V728.1h1.4V736.5zM436.3 736.5V726.1h1.4V736.5zM437.6 736.5V713.4h1.4V736.5zM438.9 736.5V713.2h1.4V736.5zM440.2 736.5V724.8h1.4V736.5zM441.5 736.5V725.5h1.4V736.5zM442.8 736.5V716.5h1.4V736.5zM444.1 736.5V714.9h1.4V736.5zM445.4 736.5V713.6h1.4V736.5zM446.7 736.5V708.5h1.4V736.5zM448.0 736.5V707.6h1.4V736.5zM449.3 736.5V707.0h1.4V736.5zM450.6 736.5V706.3h1.4V736.5zM451.9 736.5V679.0h1.4V736.5zM453.2 736.5V679.0h1.4V736.5zM454.5 736.5V679.0h1.4V736.5zM455.8 736.5V679.0h1.4V736.5zM457.1 736.5V679.0h1.4V736.5zM458.4 736.5V679.0h1.4V736.5zM459.7 736.5V679.0h1.4V736.5zM461.0 736.5V679.0h1.4V736.5zM462.3 736.5V693.6h1.4V736.5zM463.6 736.5V700.3h1.4V736.5zM464.9 736.5V679.0h1.4V736.5zM466.2 736.5V706.1h1.4V736.5zM467.5 736.5V691.0h1.4V736.5zM468.8 736.5V681.6h1.4V736.5zM470.1 736.5V683.6h1.4V736.5zM471.4 736.5V679.0h1.4V736.5zM472.7 736.5V679.0h1.4V736.5zM474.0 736.5V680.4h1.4V736.5zM475.3 736.5V700.2h1.4V736.5zM476.6 736.5V712.1h1.4V736.5zM477.9 736.5V730.7h1.4V736.5zM479.2 736.5V728.6h1.4V736.5zM480.5 736.5V726.4h1.4V736.5zM481.8 736.5V690.9h1.4V736.5zM483.1 736.5V687.2h1.4V736.5zM484.4 736.5V705.2h1.4V736.5zM485.7 736.5V706.5h1.4V736.5zM487.0 736.5V718.4h1.4V736.5zM488.3 736.5V721.1h1.4V736.5zM489.6 736.5V710.7h1.4V736.5zM490.9 736.5V710.4h1.4V736.5zM492.2 736.5V680.1h1.4V736.5zM493.5 736.5V679.0h1.4V736.5zM494.8 736.5V679.0h1.4V736.5zM496.1 736.5V679.0h1.4V736.5zM497.4 736.5V679.0h1.4V736.5zM498.7 736.5V679.0h1.4V736.5zM500.0 736.5V679.0h1.4V736.5zM501.3 736.5V679.0h1.4V736.5zM502.6 736.5V679.0h1.4V736.5zM503.9 736.5V679.0h1.4V736.5zM505.2 736.5V694.5h1.4V736.5zM506.5 736.5V700.1h1.4V736.5zM507.8 736.5V712.6h1.4V736.5zM509.1 736.5V715.1h1.4V736.5zM510.4 736.5V716.8h1.4V736.5zM511.7 736.5V724.5h1.4V736.5zM513.0 736.5V710.7h1.4V736.5zM514.3 736.5V705.7h1.4V736.5zM515.6 736.5V706.5h1.4V736.5zM516.9 736.5V685.6h1.4V736.5zM518.2 736.5V682.5h1.4V736.5zM519.5 736.5V698.6h1.4V736.5zM520.8 736.5V697.5h1.4V736.5zM522.1 736.5V679.0h1.4V736.5zM523.4 736.5V679.0h1.4V736.5zM524.7 736.5V679.0h1.4V736.5zM526.0 736.5V679.0h1.4V736.5zM527.3 736.5V679.0h1.4V736.5zM528.6 736.5V679.0h1.4V736.5zM529.9 736.5V679.0h1.4V736.5zM531.2 736.5V679.0h1.4V736.5zM532.5 736.5V679.0h1.4V736.5zM533.8 736.5V679.0h1.4V736.5zM535.1 736.5V688.9h1.4V736.5zM536.4 736.5V695.1h1.4V736.5zM537.7 736.5V701.5h1.4V736.5zM539.0 736.5V709.3h1.4V736.5zM540.3 736.5V713.1h1.4V736.5zM541.6 736.5V706.5h1.4V736.5zM542.9 736.5V707.2h1.4V736.5zM544.2 736.5V699.4h1.4V736.5zM545.5 736.5V701.3h1.4V736.5zM546.8 736.5V706.8h1.4V736.5zM548.1 736.5V722.1h1.4V736.5zM549.4 736.5V717.2h1.4V736.5zM550.7 736.5V723.9h1.4V736.5zM552.0 736.5V731.0h1.4V736.5zM553.3 736.5V732.9h1.4V736.5zM561.1 736.5V709.5h1.4V736.5zM562.4 736.5V688.1h1.4V736.5zM563.7 736.5V679.0h1.4V736.5zM565.0 736.5V709.8h1.4V736.5zM566.3 736.5V693.4h1.4V736.5zM567.6 736.5V692.1h1.4V736.5zM568.9 736.5V683.8h1.4V736.5zM570.2 736.5V687.3h1.4V736.5zM571.5 736.5V732.4h1.4V736.5zM572.8 736.5V733.0h1.4V736.5zM574.1 736.5V733.0h1.4V736.5zM575.4 736.5V731.5h1.4V736.5zM576.7 736.5V731.7h1.4V736.5zM578.0 736.5V732.1h1.4V736.5zM579.3 736.5V730.5h1.4V736.5zM580.6 736.5V732.4h1.4V736.5zM581.9 736.5V725.7h1.4V736.5zM583.2 736.5V708.2h1.4V736.5zM584.5 736.5V717.6h1.4V736.5zM585.8 736.5V681.0h1.4V736.5zM587.1 736.5V679.0h1.4V736.5zM588.4 736.5V700.2h1.4V736.5zM589.7 736.5V700.8h1.4V736.5zM591.0 736.5V679.0h1.4V736.5zM592.3 736.5V681.9h1.4V736.5zM593.6 736.5V692.1h1.4V736.5zM594.9 736.5V688.0h1.4V736.5zM596.2 736.5V687.1h1.4V736.5zM597.5 736.5V697.0h1.4V736.5zM598.8 736.5V709.3h1.4V736.5zM600.1 736.5V714.4h1.4V736.5zM601.4 736.5V710.8h1.4V736.5zM602.7 736.5V714.9h1.4V736.5zM604.0 736.5V713.4h1.4V736.5zM605.3 736.5V703.7h1.4V736.5zM606.6 736.5V700.5h1.4V736.5zM607.9 736.5V709.4h1.4V736.5zM609.2 736.5V683.1h1.4V736.5zM610.5 736.5V718.2h1.4V736.5zM611.8 736.5V729.8h1.4V736.5zM613.1 736.5V730.3h1.4V736.5zM614.4 736.5V732.5h1.4V736.5zM615.7 736.5V726.3h1.4V736.5zM617.0 736.5V713.0h1.4V736.5zM618.3 736.5V697.1h1.4V736.5zM619.6 736.5V679.0h1.4V736.5zM620.9 736.5V685.0h1.4V736.5zM622.2 736.5V695.6h1.4V736.5zM623.5 736.5V695.4h1.4V736.5zM624.8 736.5V688.6h1.4V736.5zM626.1 736.5V693.7h1.4V736.5zM627.4 736.5V697.4h1.4V736.5zM628.7 736.5V682.0h1.4V736.5zM630.0 736.5V684.4h1.4V736.5zM631.3 736.5V702.2h1.4V736.5zM632.6 736.5V687.5h1.4V736.5zM633.9 736.5V679.0h1.4V736.5zM635.2 736.5V689.1h1.4V736.5zM636.5 736.5V697.9h1.4V736.5zM637.8 736.5V695.7h1.4V736.5zM639.1 736.5V693.4h1.4V736.5zM640.4 736.5V684.0h1.4V736.5zM641.7 736.5V684.1h1.4V736.5zM643.0 736.5V681.8h1.4V736.5zM644.3 736.5V679.0h1.4V736.5zM645.6 736.5V707.0h1.4V736.5zM646.9 736.5V709.6h1.4V736.5zM648.2 736.5V732.4h1.4V736.5zM649.5 736.5V735.3h1.4V736.5zM674.2 736.5V735.3h1.4V736.5zM675.5 736.5V732.4h1.4V736.5zM676.8 736.5V734.3h1.4V736.5zM678.1 736.5V735.0h1.4V736.5zM679.4 736.5V735.1h1.4V736.5zM682.0 736.5V734.6h1.4V736.5zM683.3 736.5V730.0h1.4V736.5zM684.6 736.5V726.0h1.4V736.5zM685.9 736.5V725.9h1.4V736.5zM687.2 736.5V728.5h1.4V736.5zM688.5 736.5V731.1h1.4V736.5zM704.1 736.5V728.8h1.4V736.5zM705.4 736.5V723.3h1.4V736.5zM706.7 736.5V701.5h1.4V736.5zM708.0 736.5V691.0h1.4V736.5zM709.3 736.5V696.4h1.4V736.5zM710.6 736.5V685.8h1.4V736.5zM711.9 736.5V691.8h1.4V736.5zM713.2 736.5V683.6h1.4V736.5zM714.5 736.5V685.4h1.4V736.5zM715.8 736.5V693.3h1.4V736.5zM717.1 736.5V690.8h1.4V736.5zM718.4 736.5V703.6h1.4V736.5zM719.7 736.5V695.4h1.4V736.5zM721.0 736.5V686.7h1.4V736.5zM722.3 736.5V696.0h1.4V736.5zM723.6 736.5V712.3h1.4V736.5zM724.9 736.5V723.3h1.4V736.5zM726.2 736.5V723.6h1.4V736.5zM727.5 736.5V711.5h1.4V736.5zM728.8 736.5V687.0h1.4V736.5zM730.1 736.5V694.7h1.4V736.5zM731.4 736.5V694.1h1.4V736.5zM732.7 736.5V689.2h1.4V736.5zM734.0 736.5V697.2h1.4V736.5zM735.3 736.5V679.0h1.4V736.5zM736.6 736.5V683.7h1.4V736.5zM737.9 736.5V683.1h1.4V736.5zM739.2 736.5V682.1h1.4V736.5zM740.5 736.5V691.6h1.4V736.5zM741.8 736.5V708.9h1.4V736.5zM743.1 736.5V697.4h1.4V736.5zM744.4 736.5V697.1h1.4V736.5zM745.7 736.5V708.0h1.4V736.5zM747.0 736.5V712.8h1.4V736.5zM748.3 736.5V717.2h1.4V736.5zM749.6 736.5V715.6h1.4V736.5zM750.9 736.5V697.5h1.4V736.5zM752.2 736.5V684.1h1.4V736.5zM753.5 736.5V686.2h1.4V736.5zM754.8 736.5V689.2h1.4V736.5zM756.1 736.5V709.4h1.4V736.5zM757.4 736.5V679.5h1.4V736.5zM758.7 736.5V679.0h1.4V736.5zM760.0 736.5V679.0h1.4V736.5zM761.3 736.5V683.6h1.4V736.5zM762.6 736.5V682.3h1.4V736.5zM763.9 736.5V684.3h1.4V736.5zM765.2 736.5V682.8h1.4V736.5zM766.5 736.5V679.0h1.4V736.5zM767.8 736.5V679.0h1.4V736.5zM769.1 736.5V684.7h1.4V736.5zM770.4 736.5V697.9h1.4V736.5zM771.7 736.5V712.2h1.4V736.5zM773.0 736.5V700.2h1.4V736.5zM774.3 736.5V702.2h1.4V736.5zM775.6 736.5V707.1h1.4V736.5zM776.9 736.5V679.0h1.4V736.5zM778.2 736.5V681.1h1.4V736.5zM779.5 736.5V699.2h1.4V736.5zM780.8 736.5V701.2h1.4V736.5zM782.1 736.5V696.9h1.4V736.5zM783.4 736.5V710.0h1.4V736.5zM784.7 736.5V717.2h1.4V736.5zM786.0 736.5V730.2h1.4V736.5zM787.3 736.5V723.2h1.4V736.5zM788.6 736.5V717.7h1.4V736.5zM789.9 736.5V723.5h1.4V736.5zM791.2 736.5V721.4h1.4V736.5zM792.5 736.5V724.1h1.4V736.5zM793.8 736.5V724.2h1.4V736.5zM795.1 736.5V733.0h1.4V736.5zM812.0 736.5V734.1h1.4V736.5zM813.3 736.5V725.7h1.4V736.5zM814.6 736.5V723.7h1.4V736.5zM815.9 736.5V722.0h1.4V736.5zM817.2 736.5V727.2h1.4V736.5zM818.5 736.5V730.3h1.4V736.5zM819.8 736.5V730.7h1.4V736.5zM821.1 736.5V732.6h1.4V736.5zM827.6 736.5V732.4h1.4V736.5zM828.9 736.5V734.0h1.4V736.5zM838.0 736.5V712.4h1.4V736.5zM839.3 736.5V711.8h1.4V736.5zM840.6 736.5V707.4h1.4V736.5zM841.9 736.5V699.4h1.4V736.5zM843.2 736.5V717.9h1.4V736.5zM848.4 736.5V728.3h1.4V736.5zM849.7 736.5V722.0h1.4V736.5zM851.0 736.5V731.1h1.4V736.5zM852.3 736.5V723.9h1.4V736.5zM853.6 736.5V722.6h1.4V736.5zM854.9 736.5V726.6h1.4V736.5zM857.5 736.5V730.7h1.4V736.5zM858.8 736.5V729.5h1.4V736.5zM860.1 736.5V732.0h1.4V736.5zM861.4 736.5V732.3h1.4V736.5zM871.8 736.5V732.4h1.4V736.5zM873.1 736.5V734.3h1.4V736.5zM908.2 736.5V721.0h1.4V736.5zM909.5 736.5V687.0h1.4V736.5zM910.8 736.5V679.0h1.4V736.5zM912.1 736.5V679.0h1.4V736.5zM913.4 736.5V679.0h1.4V736.5zM914.7 736.5V679.0h1.4V736.5zM916.0 736.5V679.0h1.4V736.5zM917.3 736.5V679.0h1.4V736.5zM918.6 736.5V679.0h1.4V736.5zM919.9 736.5V679.0h1.4V736.5zM921.2 736.5V679.0h1.4V736.5zM922.5 736.5V679.0h1.4V736.5zM923.8 736.5V679.0h1.4V736.5zM925.1 736.5V679.0h1.4V736.5zM926.4 736.5V679.0h1.4V736.5zM927.7 736.5V679.0h1.4V736.5zM929.0 736.5V679.0h1.4V736.5zM930.3 736.5V679.0h1.4V736.5zM931.6 736.5V679.0h1.4V736.5zM932.9 736.5V679.0h1.4V736.5zM934.2 736.5V679.0h1.4V736.5zM935.5 736.5V679.0h1.4V736.5zM936.8 736.5V679.0h1.4V736.5zM938.1 736.5V728.9h1.4V736.5zM961.5 736.5V732.4h1.4V736.5zM996.6 736.5V734.7h1.4V736.5zM997.9 736.5V732.4h1.4V736.5zM999.2 736.5V735.2h1.4V736.5zM1003.1 736.5V725.1h1.4V736.5zM1004.4 736.5V718.9h1.4V736.5zM1005.7 736.5V725.3h1.4V736.5zM1007.0 736.5V717.9h1.4V736.5zM1008.3 736.5V711.9h1.4V736.5zM1009.6 736.5V705.0h1.4V736.5zM1010.9 736.5V706.6h1.4V736.5zM1012.2 736.5V711.3h1.4V736.5zM1013.5 736.5V728.0h1.4V736.5zM1014.8 736.5V723.0h1.4V736.5zM1016.1 736.5V712.6h1.4V736.5zM1017.4 736.5V710.1h1.4V736.5zM1018.7 736.5V715.3h1.4V736.5zM1020.0 736.5V720.5h1.4V736.5zM1021.3 736.5V722.6h1.4V736.5zM1022.6 736.5V714.2h1.4V736.5zM1023.9 736.5V703.1h1.4V736.5zM1025.2 736.5V705.1h1.4V736.5zM1026.5 736.5V702.2h1.4V736.5zM1027.8 736.5V726.9h1.4V736.5zM1029.1 736.5V735.1h1.4V736.5zM1030.4 736.5V727.9h1.4V736.5zM1031.7 736.5V728.9h1.4V736.5zM1066.8 736.5V730.3h1.4V736.5zM1068.1 736.5V733.8h1.4V736.5zM1083.7 736.5V732.3h1.4V736.5zM1085.0 736.5V731.7h1.4V736.5zM1086.3 736.5V723.1h1.4V736.5zM1087.6 736.5V716.9h1.4V736.5zM1088.9 736.5V724.1h1.4V736.5zM1090.2 736.5V725.5h1.4V736.5zM1091.5 736.5V730.7h1.4V736.5zM1092.8 736.5V721.2h1.4V736.5zM1094.1 736.5V726.3h1.4V736.5zM1096.7 736.5V731.3h1.4V736.5zM1098.0 736.5V729.2h1.4V736.5zM1099.3 736.5V730.7h1.4V736.5zM1100.6 736.5V731.0h1.4V736.5zM1101.9 736.5V730.4h1.4V736.5zM1103.2 736.5V729.3h1.4V736.5zM1104.5 736.5V721.6h1.4V736.5zM1105.8 736.5V721.8h1.4V736.5zM1107.1 736.5V721.2h1.4V736.5zM1108.4 736.5V710.3h1.4V736.5zM1109.7 736.5V720.5h1.4V736.5zM1111.0 736.5V722.5h1.4V736.5zM1112.3 736.5V725.3h1.4V736.5zM1113.6 736.5V730.7h1.4V736.5zM1114.9 736.5V714.4h1.4V736.5zM1116.2 736.5V715.0h1.4V736.5zM1148.7 736.5V733.7h1.4V736.5zM1150.0 736.5V728.9h1.4V736.5zM1151.3 736.5V710.6h1.4V736.5zM1152.6 736.5V711.7h1.4V736.5zM1153.9 736.5V711.0h1.4V736.5zM1155.2 736.5V696.7h1.4V736.5zM1156.5 736.5V684.4h1.4V736.5zM1157.8 736.5V698.7h1.4V736.5zM1159.1 736.5V695.6h1.4V736.5zM1160.4 736.5V704.2h1.4V736.5zM1161.7 736.5V679.0h1.4V736.5zM1163.0 736.5V690.9h1.4V736.5zM1164.3 736.5V695.1h1.4V736.5zM1165.6 736.5V691.8h1.4V736.5zM1166.9 736.5V697.0h1.4V736.5zM1168.2 736.5V712.9h1.4V736.5zM1169.5 736.5V721.5h1.4V736.5zM1170.8 736.5V726.4h1.4V736.5zM1172.1 736.5V729.2h1.4V736.5zM1173.4 736.5V731.3h1.4V736.5zM1174.7 736.5V719.5h1.4V736.5zM1176.0 736.5V722.5h1.4V736.5zM1195.5 736.5V735.2h1.4V736.5zM1196.8 736.5V733.3h1.4V736.5zM1198.1 736.5V733.7h1.4V736.5zM1199.4 736.5V735.0h1.4V736.5zM1200.7 736.5V731.2h1.4V736.5zM1202.0 736.5V725.5h1.4V736.5zM1203.3 736.5V727.8h1.4V736.5zM1204.6 736.5V703.9h1.4V736.5zM1205.9 736.5V704.7h1.4V736.5zM1207.2 736.5V679.0h1.4V736.5zM1208.5 736.5V686.3h1.4V736.5zM1209.8 736.5V708.4h1.4V736.5zM1211.1 736.5V695.1h1.4V736.5zM1212.4 736.5V693.6h1.4V736.5zM1213.7 736.5V695.4h1.4V736.5zM1215.0 736.5V696.2h1.4V736.5zM1216.3 736.5V704.4h1.4V736.5zM1217.6 736.5V720.3h1.4V736.5zM1218.9 736.5V724.7h1.4V736.5zM1220.2 736.5V727.2h1.4V736.5zM1221.5 736.5V732.2h1.4V736.5zM1226.7 736.5V733.3h1.4V736.5zM1231.9 736.5V735.5h1.4V736.5zM1233.2 736.5V733.8h1.4V736.5zM1250.1 736.5V733.3h1.4V736.5zM1251.4 736.5V732.6h1.4V736.5zM1252.7 736.5V731.6h1.4V736.5zM1254.0 736.5V730.8h1.4V736.5zM1255.3 736.5V719.8h1.4V736.5zM1256.6 736.5V715.5h1.4V736.5zM1257.9 736.5V716.7h1.4V736.5zM1259.2 736.5V701.2h1.4V736.5zM1260.5 736.5V700.2h1.4V736.5zM1261.8 736.5V699.8h1.4V736.5zM1263.1 736.5V690.8h1.4V736.5zM1264.4 736.5V679.0h1.4V736.5zM1265.7 736.5V682.7h1.4V736.5zM1267.0 736.5V709.8h1.4V736.5zM1268.3 736.5V711.7h1.4V736.5zM1269.6 736.5V722.1h1.4V736.5zM1270.9 736.5V731.6h1.4V736.5zM1272.2 736.5V732.9h1.4V736.5zM1273.5 736.5V734.8h1.4V736.5zM1291.7 736.5V733.2h1.4V736.5zM1293.0 736.5V731.9h1.4V736.5zM1294.3 736.5V731.5h1.4V736.5zM1295.6 736.5V734.0h1.4V736.5zM1296.9 736.5V730.9h1.4V736.5zM1298.2 736.5V731.6h1.4V736.5zM1299.5 736.5V730.7h1.4V736.5zM1300.8 736.5V721.7h1.4V736.5zM1302.1 736.5V712.8h1.4V736.5zM1303.4 736.5V716.3h1.4V736.5zM1304.7 736.5V710.8h1.4V736.5zM1306.0 736.5V703.4h1.4V736.5zM1307.3 736.5V713.0h1.4V736.5zM1308.6 736.5V727.1h1.4V736.5zM1309.9 736.5V730.5h1.4V736.5zM1311.2 736.5V732.3h1.4V736.5zM1312.5 736.5V733.9h1.4V736.5zM1334.6 736.5V732.7h1.4V736.5zM1335.9 736.5V731.7h1.4V736.5zM1337.2 736.5V729.9h1.4V736.5zM1338.5 736.5V727.8h1.4V736.5zM1339.8 736.5V730.1h1.4V736.5zM1341.1 736.5V716.4h1.4V736.5zM1342.4 736.5V718.8h1.4V736.5zM1343.7 736.5V723.3h1.4V736.5zM1345.0 736.5V713.0h1.4V736.5zM1346.3 736.5V713.7h1.4V736.5zM1347.6 736.5V704.5h1.4V736.5zM1348.9 736.5V701.3h1.4V736.5zM1350.2 736.5V717.4h1.4V736.5zM1351.5 736.5V733.7h1.4V736.5zM1368.4 736.5V728.1h1.4V736.5zM1369.7 736.5V723.3h1.4V736.5zM1371.0 736.5V721.7h1.4V736.5zM1372.3 736.5V724.2h1.4V736.5zM1373.6 736.5V690.9h1.4V736.5zM1374.9 736.5V695.1h1.4V736.5zM1376.2 736.5V696.7h1.4V736.5zM1377.5 736.5V692.2h1.4V736.5zM1378.8 736.5V685.2h1.4V736.5zM1380.1 736.5V699.1h1.4V736.5zM1381.4 736.5V696.5h1.4V736.5zM1382.7 736.5V714.0h1.4V736.5zM1384.0 736.5V716.6h1.4V736.5zM1385.3 736.5V718.6h1.4V736.5zM1386.6 736.5V721.6h1.4V736.5zM1387.9 736.5V721.6h1.4V736.5zM1389.2 736.5V725.8h1.4V736.5zM1390.5 736.5V729.3h1.4V736.5zM1391.8 736.5V729.3h1.4V736.5zM1393.1 736.5V730.5h1.4V736.5zM1394.4 736.5V731.2h1.4V736.5zM1395.7 736.5V725.1h1.4V736.5zM1397.0 736.5V721.1h1.4V736.5zM1398.3 736.5V700.4h1.4V736.5zM1399.6 736.5V707.0h1.4V736.5zM1400.9 736.5V699.5h1.4V736.5zM1402.2 736.5V691.9h1.4V736.5zM1403.5 736.5V702.0h1.4V736.5zM1404.8 736.5V706.0h1.4V736.5zM1406.1 736.5V711.6h1.4V736.5zM1407.4 736.5V684.4h1.4V736.5zM1408.7 736.5V700.1h1.4V736.5zM1410.0 736.5V707.9h1.4V736.5zM1411.3 736.5V721.9h1.4V736.5zM1412.6 736.5V728.6h1.4V736.5zM1413.9 736.5V728.3h1.4V736.5zM1415.2 736.5V727.7h1.4V736.5zM1416.5 736.5V726.1h1.4V736.5zM1417.8 736.5V726.4h1.4V736.5zM1419.1 736.5V714.7h1.4V736.5zM1420.4 736.5V720.2h1.4V736.5zM1421.7 736.5V726.5h1.4V736.5zM1423.0 736.5V730.9h1.4V736.5zM1424.3 736.5V732.2h1.4V736.5zM1425.6 736.5V732.7h1.4V736.5zM1426.9 736.5V731.8h1.4V736.5zM1428.2 736.5V733.7h1.4V736.5zM1429.5 736.5V732.8h1.4V736.5zM1430.8 736.5V733.9h1.4V736.5zM1432.1 736.5V734.3h1.4V736.5zM1433.4 736.5V734.4h1.4V736.5zM1434.7 736.5V733.0h1.4V736.5zM1436.0 736.5V728.0h1.4V736.5zM1437.3 736.5V731.6h1.4V736.5zM1438.6 736.5V735.0h1.4V736.5zM1442.5 736.5V730.9h1.4V736.5zM1443.8 736.5V722.3h1.4V736.5zM1445.1 736.5V723.2h1.4V736.5zM1446.4 736.5V720.0h1.4V736.5zM1447.7 736.5V722.1h1.4V736.5zM1449.0 736.5V725.8h1.4V736.5zM1450.3 736.5V728.4h1.4V736.5zM1451.6 736.5V731.8h1.4V736.5zM1452.9 736.5V727.1h1.4V736.5zM1454.2 736.5V731.2h1.4V736.5zM1456.8 736.5V730.7h1.4V736.5zM1458.1 736.5V714.7h1.4V736.5zM1459.4 736.5V725.0h1.4V736.5zM1460.7 736.5V728.8h1.4V736.5zM1462.0 736.5V727.7h1.4V736.5zM1463.3 736.5V730.0h1.4V736.5zM1464.6 736.5V728.8h1.4V736.5zM1465.9 736.5V723.3h1.4V736.5zM1467.2 736.5V727.6h1.4V736.5zM1468.5 736.5V732.9h1.4V736.5zM1469.8 736.5V728.7h1.4V736.5zM1471.1 736.5V728.0h1.4V736.5zM1472.4 736.5V730.6h1.4V736.5zM1473.7 736.5V731.4h1.4V736.5zM1475.0 736.5V727.5h1.4V736.5zM1476.3 736.5V719.9h1.4V736.5zM1477.6 736.5V717.3h1.4V736.5zM1478.9 736.5V685.4h1.4V736.5zM1480.2 736.5V679.0h1.4V736.5zM1481.5 736.5V679.0h1.4V736.5zM1482.8 736.5V679.0h1.4V736.5zM1484.1 736.5V679.0h1.4V736.5zM1485.4 736.5V679.0h1.4V736.5zM1486.7 736.5V679.0h1.4V736.5zM1488.0 736.5V679.0h1.4V736.5zM1489.3 736.5V679.0h1.4V736.5zM1490.6 736.5V679.0h1.4V736.5zM1491.9 736.5V679.0h1.4V736.5zM1493.2 736.5V679.0h1.4V736.5zM1494.5 736.5V679.0h1.4V736.5zM1495.8 736.5V679.0h1.4V736.5zM1497.1 736.5V679.0h1.4V736.5zM1498.4 736.5V679.0h1.4V736.5zM1499.7 736.5V679.0h1.4V736.5zM1501.0 736.5V679.0h1.4V736.5zM1502.3 736.5V679.0h1.4V736.5zM1503.6 736.5V679.0h1.4V736.5zM1504.9 736.5V687.1h1.4V736.5zM1506.2 736.5V695.4h1.4V736.5zM1507.5 736.5V701.8h1.4V736.5zM1508.8 736.5V679.0h1.4V736.5zM1510.1 736.5V701.4h1.4V736.5zM1511.4 736.5V716.6h1.4V736.5zM1512.7 736.5V711.2h1.4V736.5zM1514.0 736.5V717.2h1.4V736.5zM1515.3 736.5V717.7h1.4V736.5zM1516.6 736.5V716.0h1.4V736.5zM1517.9 736.5V717.9h1.4V736.5zM1519.2 736.5V717.6h1.4V736.5zM1520.5 736.5V708.2h1.4V736.5zM1521.8 736.5V710.6h1.4V736.5zM1523.1 736.5V718.8h1.4V736.5zM1524.4 736.5V727.7h1.4V736.5zM1525.7 736.5V701.6h1.4V736.5zM1527.0 736.5V700.4h1.4V736.5zM1528.3 736.5V714.7h1.4V736.5zM1529.6 736.5V716.3h1.4V736.5zM1530.9 736.5V692.9h1.4V736.5zM1532.2 736.5V679.0h1.4V736.5zM1533.5 736.5V679.0h1.4V736.5zM1534.8 736.5V684.9h1.4V736.5zM1536.1 736.5V686.6h1.4V736.5zM1537.4 736.5V695.3h1.4V736.5zM1538.7 736.5V679.0h1.4V736.5zM1540.0 736.5V679.0h1.4V736.5zM1541.3 736.5V679.0h1.4V736.5zM1542.6 736.5V679.0h1.4V736.5zM1543.9 736.5V679.0h1.4V736.5zM1545.2 736.5V683.7h1.4V736.5zM1546.5 736.5V679.0h1.4V736.5zM1547.8 736.5V679.0h1.4V736.5zM1549.1 736.5V679.0h1.4V736.5zM1550.4 736.5V679.0h1.4V736.5zM1551.7 736.5V685.0h1.4V736.5zM1553.0 736.5V682.8h1.4V736.5zM1554.3 736.5V679.0h1.4V736.5zM1555.6 736.5V686.8h1.4V736.5zM1556.9 736.5V712.2h1.4V736.5zM1558.2 736.5V705.4h1.4V736.5zM1559.5 736.5V705.1h1.4V736.5zM1560.8 736.5V706.4h1.4V736.5zM1562.1 736.5V718.7h1.4V736.5zM1563.4 736.5V727.2h1.4V736.5zM1564.7 736.5V705.9h1.4V736.5zM1566.0 736.5V702.3h1.4V736.5zM1567.3 736.5V721.4h1.4V736.5zM1568.6 736.5V717.6h1.4V736.5zM1569.9 736.5V730.4h1.4V736.5zM1571.2 736.5V731.9h1.4V736.5zM1572.5 736.5V714.5h1.4V736.5zM1573.8 736.5V708.6h1.4V736.5zM1575.1 736.5V707.7h1.4V736.5zM1576.4 736.5V714.6h1.4V736.5zM1577.7 736.5V716.9h1.4V736.5zM1579.0 736.5V721.4h1.4V736.5zM1580.3 736.5V729.0h1.4V736.5zM1581.6 736.5V725.9h1.4V736.5zM1582.9 736.5V726.4h1.4V736.5zM1584.2 736.5V732.2h1.4V736.5zM1585.5 736.5V729.0h1.4V736.5zM1586.8 736.5V729.0h1.4V736.5z" fill="#3a3a8c"/>
<path d="M213.0 736.5v9.2h1.4v-9.2zM214.3 736.5v9.2h1.4v-9.2zM215.6 736.5v9.2h1.4v-9.2zM216.9 736.5v9.2h1.4v-9.2zM218.2 736.5v9.2h1.4v-9.2zM219.5 736.5v4.9h1.4v-4.9zM220.8 736.5v9.2h1.4v-9.2zM222.1 736.5v9.2h1.4v-9.2zM223.4 736.5v9.2h1.4v-9.2zM224.7 736.5v9.2h1.4v-9.2zM226.0 736.5v9.2h1.4v-9.2zM227.3 736.5v9.2h1.4v-9.2zM228.6 736.5v9.2h0.8v-9.2zM237.0 736.5v9.2h1.4v-9.2zM238.3 736.5v9.2h1.4v-9.2zM239.6 736.5v9.2h1.4v-9.2zM243.5 736.5v8.7h1.4v-8.7zM246.1 736.5v3.5h1.4v-3.5zM248.7 736.5v2.5h1.4v-2.5zM250.0 736.5v4.7h1.4v-4.7zM251.3 736.5v4.4h1.4v-4.4zM252.6 736.5v9.2h1.4v-9.2zM253.9 736.5v4.6h1.1v-4.6zM279.5 736.5v3.9h1.4v-3.9zM280.8 736.5v4.4h1.4v-4.4zM282.1 736.5v9.2h1.4v-9.2zM283.4 736.5v9.2h1.4v-9.2zM284.7 736.5v9.2h1.4v-9.2zM286.0 736.5v9.2h1.4v-9.2zM287.3 736.5v9.2h1.4v-9.2zM288.6 736.5v3.4h1.4v-3.4zM289.9 736.5v9.2h1.4v-9.2zM291.2 736.5v9.2h1.4v-9.2zM292.5 736.5v9.2h1.4v-9.2zM293.8 736.5v4.6h1.4v-4.6zM295.1 736.5v9.2h1.4v-9.2zM296.4 736.5v9.2h1.4v-9.2zM297.7 736.5v6.6h1.4v-6.6zM299.0 736.5v9.2h1.4v-9.2zM300.3 736.5v9.2h1.4v-9.2zM301.6 736.5v9.2h1.4v-9.2zM302.9 736.5v6.7h1.4v-6.7zM304.2 736.5v3.4h1.4v-3.4zM305.5 736.5v9.2h1.4v-9.2zM306.8 736.5v8.5h1.4v-8.5zM308.1 736.5v9.2h1.4v-9.2zM309.4 736.5v9.2h1.4v-9.2zM310.7 736.5v4.2h1.4v-4.2zM312.0 736.5v9.2h1.4v-9.2zM313.3 736.5v9.2h1.4v-9.2zM314.6 736.5v9.2h1.4v-9.2zM315.9 736.5v9.2h1.4v-9.2zM317.2 736.5v9.2h1.4v-9.2zM318.5 736.5v9.2h1.4v-9.2zM319.8 736.5v9.2h1.4v-9.2zM321.1 736.5v9.2h1.4v-9.2zM322.4 736.5v9.2h1.1v-9.2zM326.1 736.5v2.8h1.4v-2.8zM327.4 736.5v9.2h1.4v-9.2zM330.0 736.5v3.8h1.4v-3.8zM331.3 736.5v6.3h1.4v-6.3zM334.0 736.5v9.2h1.4v-9.2zM335.3 736.5v9.2h1.4v-9.2zM336.6 736.5v9.2h1.4v-9.2zM337.9 736.5v9.2h1.4v-9.2zM339.2 736.5v9.2h1.4v-9.2zM340.5 736.5v9.2h1.4v-9.2zM341.8 736.5v6.4h1.4v-6.4zM343.1 736.5v9.2h1.4v-9.2zM344.4 736.5v6.0h1.4v-6.0zM345.7 736.5v9.2h1.4v-9.2zM347.0 736.5v9.2h1.4v-9.2zM348.3 736.5v9.2h1.4v-9.2zM349.6 736.5v9.2h1.4v-9.2zM350.9 736.5v3.4h1.4v-3.4zM352.2 736.5v9.2h1.4v-9.2zM353.5 736.5v9.2h1.4v-9.2zM354.8 736.5v9.2h1.4v-9.2zM356.1 736.5v9.2h1.4v-9.2zM357.4 736.5v9.2h1.4v-9.2zM358.7 736.5v9.2h1.4v-9.2zM360.0 736.5v9.2h1.4v-9.2zM361.3 736.5v9.2h1.4v-9.2zM362.6 736.5v9.2h1.4v-9.2zM363.9 736.5v9.2h1.4v-9.2zM365.2 736.5v9.2h1.4v-9.2zM366.5 736.5v9.2h1.4v-9.2zM367.8 736.5v9.2h1.4v-9.2zM369.1 736.5v9.2h1.4v-9.2zM370.4 736.5v9.2h1.4v-9.2zM371.7 736.5v9.2h1.4v-9.2zM373.0 736.5v9.2h1.4v-9.2zM374.3 736.5v9.2h1.4v-9.2zM375.6 736.5v9.2h1.4v-9.2zM376.9 736.5v9.2h1.4v-9.2zM378.2 736.5v9.2h1.4v-9.2zM379.5 736.5v4.9h1.4v-4.9zM380.8 736.5v9.2h1.4v-9.2zM382.1 736.5v9.2h1.4v-9.2zM383.4 736.5v5.2h1.4v-5.2zM384.7 736.5v9.2h1.4v-9.2zM386.0 736.5v9.2h1.4v-9.2zM387.3 736.5v5.6h1.4v-5.6zM388.6 736.5v9.2h1.4v-9.2zM389.9 736.5v5.8h1.4v-5.8zM391.2 736.5v9.2h1.4v-9.2zM392.5 736.5v9.2h1.4v-9.2zM393.8 736.5v3.7h1.4v-3.7zM395.1 736.5v9.2h1.4v-9.2zM396.4 736.5v9.2h1.4v-9.2zM397.7 736.5v9.2h1.4v-9.2zM399.0 736.5v3.8h1.4v-3.8zM400.3 736.5v9.2h1.4v-9.2zM401.6 736.5v4.3h0.4v-4.3zM402.0 736.5v9.2h1.4v-9.2zM404.6 736.5v2.6h1.4v-2.6zM406.0 736.5v9.2h1.4v-9.2zM407.3 736.5v9.2h1.4v-9.2zM408.6 736.5v9.2h1.4v-9.2zM409.9 736.5v9.2h1.4v-9.2zM411.2 736.5v7.8h1.4v-7.8zM412.5 736.5v9.2h1.4v-9.2zM413.8 736.5v9.2h1.4v-9.2zM415.1 736.5v9.2h1.4v-9.2zM416.4 736.5v9.2h1.4v-9.2zM417.7 736.5v3.4h1.4v-3.4zM419.0 736.5v9.2h1.4v-9.2zM420.3 736.5v9.2h1.4v-9.2zM421.6 736.5v9.2h1.4v-9.2zM422.9 736.5v9.2h1.4v-9.2zM424.2 736.5v9.2h0.3v-9.2zM556.0 736.5v5.0h1.4v-5.0zM557.3 736.5v5.2h1.4v-5.2zM558.6 736.5v2.5h0.9v-2.5zM575.3 736.5v5.5h1.1v-5.5zM651.0 736.5v9.2h1.4v-9.2zM652.3 736.5v9.2h1.4v-9.2zM653.6 736.5v9.2h1.4v-9.2zM654.9 736.5v9.2h1.4v-9.2zM656.2 736.5v9.2h1.4v-9.2zM657.5 736.5v9.2h1.4v-9.2zM658.8 736.5v9.2h1.4v-9.2zM660.1 736.5v9.2h1.4v-9.2zM661.4 736.5v9.2h1.4v-9.2zM662.7 736.5v9.2h1.4v-9.2zM664.0 736.5v9.2h1.4v-9.2zM665.3 736.5v9.2h1.4v-9.2zM666.6 736.5v7.3h0.8v-7.3zM668.6 736.5v9.2h1.4v-9.2zM669.9 736.5v8.5h1.4v-8.5zM672.5 736.5v9.2h1.4v-9.2zM675.1 736.5v9.2h1.0v-9.2zM691.0 736.5v9.2h1.4v-9.2zM692.3 736.5v7.6h1.4v-7.6zM693.6 736.5v9.2h0.5v-9.2zM694.0 736.5v4.4h1.4v-4.4zM695.3 736.5v9.2h1.4v-9.2zM696.6 736.5v9.2h1.4v-9.2zM697.9 736.5v9.2h1.4v-9.2zM699.2 736.5v7.0h1.4v-7.0zM700.5 736.5v4.2h1.4v-4.2zM701.8 736.5v3.9h1.4v-3.9zM703.1 736.5v9.2h1.4v-9.2zM704.4 736.5v9.2h1.0v-9.2zM796.6 736.5v9.2h1.4v-9.2zM797.9 736.5v3.8h1.4v-3.8zM799.2 736.5v6.7h1.4v-6.7zM800.5 736.5v9.2h1.4v-9.2zM801.8 736.5v9.2h1.4v-9.2zM803.1 736.5v9.2h1.4v-9.2zM804.4 736.5v9.2h1.4v-9.2zM805.7 736.5v9.2h1.4v-9.2zM807.0 736.5v9.2h1.4v-9.2zM808.3 736.5v9.2h1.4v-9.2zM809.6 736.5v6.5h1.4v-6.5zM810.9 736.5v9.2h0.5v-9.2zM823.4 736.5v9.2h1.4v-9.2zM824.7 736.5v9.2h1.4v-9.2zM826.0 736.5v5.6h0.9v-5.6zM830.3 736.5v3.9h1.4v-3.9zM831.6 736.5v9.2h1.4v-9.2zM832.9 736.5v9.2h1.4v-9.2zM834.2 736.5v9.2h1.4v-9.2zM835.5 736.5v9.2h1.4v-9.2zM836.8 736.5v9.2h1.4v-9.2zM838.1 736.5v9.2h0.9v-9.2zM844.0 736.5v3.2h1.4v-3.2zM846.6 736.5v3.3h1.4v-3.3zM847.9 736.5v9.2h1.4v-9.2zM864.8 736.5v5.4h1.4v-5.4zM866.1 736.5v9.2h1.4v-9.2zM867.4 736.5v9.2h1.4v-9.2zM868.7 736.5v9.2h1.4v-9.2zM870.0 736.5v9.2h0.9v-9.2zM874.3 736.5v9.2h1.4v-9.2zM875.6 736.5v3.5h1.4v-3.5zM876.9 736.5v9.2h1.4v-9.2zM878.2 736.5v9.2h1.4v-9.2zM879.5 736.5v9.2h1.4v-9.2zM880.8 736.5v9.2h1.4v-9.2zM882.1 736.5v9.2h1.4v-9.2zM883.4 736.5v9.2h1.4v-9.2zM884.7 736.5v9.2h1.4v-9.2zM886.0 736.5v9.2h1.4v-9.2zM887.3 736.5v9.2h1.4v-9.2zM888.6 736.5v7.5h1.4v-7.5zM889.9 736.5v9.2h0.9v-9.2zM892.4 736.5v9.2h1.4v-9.2zM893.7 736.5v9.2h1.4v-9.2zM895.0 736.5v9.2h1.4v-9.2zM896.3 736.5v9.2h1.4v-9.2zM897.6 736.5v9.2h1.4v-9.2zM898.9 736.5v9.2h1.4v-9.2zM900.2 736.5v9.2h1.4v-9.2zM901.5 736.5v9.2h1.4v-9.2zM902.8 736.5v9.2h1.4v-9.2zM904.1 736.5v9.2h1.4v-9.2zM905.4 736.5v9.2h1.4v-9.2zM906.7 736.5v9.2h1.4v-9.2zM908.0 736.5v9.2h0.9v-9.2zM940.0 736.5v9.2h1.4v-9.2zM941.3 736.5v7.3h1.4v-7.3zM942.6 736.5v9.2h1.4v-9.2zM943.9 736.5v9.2h1.4v-9.2zM945.2 736.5v6.7h1.4v-6.7zM946.5 736.5v9.2h1.4v-9.2zM947.8 736.5v5.8h1.4v-5.8zM949.1 736.5v9.2h1.4v-9.2zM950.4 736.5v9.2h1.4v-9.2zM951.7 736.5v9.2h1.4v-9.2zM953.0 736.5v9.2h1.4v-9.2zM954.3 736.5v9.2h1.4v-9.2zM955.6 736.5v4.0h1.4v-4.0zM956.9 736.5v9.2h0.2v-9.2zM957.0 736.5v4.5h1.4v-4.5zM958.3 736.5v9.2h1.4v-9.2zM959.6 736.5v9.2h1.4v-9.2zM960.9 736.5v6.8h1.4v-6.8zM962.2 736.5v2.7h1.4v-2.7zM963.5 736.5v4.6h1.4v-4.6zM964.8 736.5v7.6h1.4v-7.6zM966.1 736.5v2.7h1.4v-2.7zM967.4 736.5v8.2h1.4v-8.2zM968.7 736.5v3.0h1.4v-3.0zM970.0 736.5v9.2h1.4v-9.2zM971.3 736.5v9.2h1.4v-9.2zM972.6 736.5v6.4h1.4v-6.4zM973.9 736.5v6.4h1.4v-6.4zM975.2 736.5v9.2h1.4v-9.2zM976.5 736.5v9.2h1.4v-9.2zM977.8 736.5v9.2h1.4v-9.2zM979.1 736.5v2.4h1.4v-2.4zM980.4 736.5v9.2h1.0v-9.2zM982.6 736.5v4.4h1.4v-4.4zM985.2 736.5v7.8h1.4v-7.8zM987.8 736.5v9.2h1.4v-9.2zM989.1 736.5v7.3h1.4v-7.3zM990.4 736.5v6.8h1.4v-6.8zM991.7 736.5v3.7h1.4v-3.7zM994.3 736.5v9.2h1.4v-9.2zM995.6 736.5v2.3h1.4v-2.3zM996.9 736.5v7.2h1.4v-7.2zM999.5 736.5v9.2h1.4v-9.2zM1000.8 736.5v7.4h1.4v-7.4zM1002.1 736.5v5.5h1.4v-5.5zM1003.4 736.5v7.7h0.4v-7.7zM1035.5 736.5v9.2h1.4v-9.2zM1036.8 736.5v3.7h1.4v-3.7zM1038.1 736.5v5.5h1.4v-5.5zM1039.4 736.5v9.2h1.4v-9.2zM1040.7 736.5v9.2h1.4v-9.2zM1042.0 736.5v7.4h1.4v-7.4zM1043.3 736.5v4.6h1.4v-4.6zM1044.6 736.5v4.8h0.5v-4.8zM1048.5 736.5v2.9h1.4v-2.9zM1049.8 736.5v2.5h1.4v-2.5zM1051.1 736.5v9.2h1.4v-9.2zM1052.4 736.5v5.5h1.4v-5.5zM1053.7 736.5v8.0h1.4v-8.0zM1055.0 736.5v9.2h1.4v-9.2zM1056.3 736.5v7.2h1.4v-7.2zM1057.6 736.5v6.5h1.4v-6.5zM1058.9 736.5v4.4h1.4v-4.4zM1060.2 736.5v9.2h1.4v-9.2zM1061.5 736.5v7.1h1.4v-7.1zM1062.8 736.5v9.2h1.4v-9.2zM1064.1 736.5v6.0h1.4v-6.0zM1065.4 736.5v9.2h0.4v-9.2zM1069.2 736.5v3.8h1.4v-3.8zM1070.5 736.5v9.2h1.4v-9.2zM1071.8 736.5v7.7h1.4v-7.7zM1073.1 736.5v9.2h1.4v-9.2zM1074.4 736.5v9.2h1.4v-9.2zM1075.7 736.5v3.3h1.4v-3.3zM1077.0 736.5v3.5h1.4v-3.5zM1079.6 736.5v3.0h1.4v-3.0zM1082.2 736.5v9.2h1.4v-9.2zM1096.0 736.5v7.0h0.8v-7.0zM1113.5 736.5v3.6h0.8v-3.6zM1118.4 736.5v3.0h1.4v-3.0zM1119.7 736.5v9.2h1.4v-9.2zM1121.0 736.5v9.2h1.4v-9.2zM1122.3 736.5v6.8h1.4v-6.8zM1123.6 736.5v6.4h1.4v-6.4zM1124.9 736.5v3.2h1.4v-3.2zM1126.2 736.5v4.9h1.4v-4.9zM1127.5 736.5v8.1h1.4v-8.1zM1128.8 736.5v6.0h1.4v-6.0zM1130.1 736.5v5.0h0.5v-5.0zM1133.0 736.5v9.2h1.4v-9.2zM1134.3 736.5v7.3h1.4v-7.3zM1135.6 736.5v7.8h1.4v-7.8zM1136.9 736.5v6.4h1.4v-6.4zM1138.2 736.5v4.3h1.4v-4.3zM1139.5 736.5v2.9h1.4v-2.9zM1140.8 736.5v7.3h1.4v-7.3zM1142.1 736.5v6.4h1.4v-6.4zM1143.4 736.5v9.2h1.4v-9.2zM1144.7 736.5v6.3h1.4v-6.3zM1146.0 736.5v6.6h1.4v-6.6zM1178.0 736.5v9.2h1.4v-9.2zM1179.3 736.5v4.8h1.4v-4.8zM1180.6 736.5v8.6h1.4v-8.6zM1181.9 736.5v9.2h1.4v-9.2zM1183.2 736.5v9.2h1.4v-9.2zM1185.8 736.5v3.0h1.4v-3.0zM1187.1 736.5v5.8h0.4v-5.8zM1192.6 736.5v5.6h1.4v-5.6zM1193.9 736.5v7.6h1.4v-7.6zM1195.2 736.5v4.9h0.9v-4.9zM1225.0 736.5v6.7h1.4v-6.7zM1226.3 736.5v7.2h1.4v-7.2zM1227.6 736.5v9.2h0.5v-9.2zM1228.0 736.5v9.2h1.4v-9.2zM1229.3 736.5v9.2h1.4v-9.2zM1230.6 736.5v9.2h1.4v-9.2zM1231.9 736.5v6.8h1.4v-6.8zM1233.2 736.5v9.2h1.4v-9.2zM1234.5 736.5v9.2h1.4v-9.2zM1235.8 736.5v5.7h0.3v-5.7zM1236.0 736.5v9.2h1.4v-9.2zM1237.3 736.5v3.7h1.4v-3.7zM1238.6 736.5v9.2h1.4v-9.2zM1241.2 736.5v5.3h1.4v-5.3zM1242.5 736.5v3.8h1.4v-3.8zM1245.1 736.5v6.4h1.4v-6.4zM1249.0 736.5v4.2h1.4v-4.2zM1250.3 736.5v3.1h1.1v-3.1zM1275.5 736.5v4.6h1.4v-4.6zM1278.1 736.5v9.2h1.4v-9.2zM1279.4 736.5v9.2h1.4v-9.2zM1280.7 736.5v9.2h1.4v-9.2zM1282.0 736.5v4.1h1.4v-4.1zM1283.3 736.5v9.2h1.4v-9.2zM1284.6 736.5v5.1h1.4v-5.1zM1285.9 736.5v6.5h1.4v-6.5zM1287.2 736.5v8.3h1.4v-8.3zM1289.8 736.5v9.2h1.4v-9.2zM1292.8 736.5v7.7h1.4v-7.7zM1295.4 736.5v9.2h1.4v-9.2zM1315.1 736.5v3.0h1.4v-3.0zM1316.4 736.5v3.8h1.4v-3.8zM1319.0 736.5v3.3h1.4v-3.3zM1322.9 736.5v8.0h1.4v-8.0zM1332.0 736.5v6.8h1.4v-6.8zM1333.3 736.5v7.1h1.4v-7.1zM1334.6 736.5v8.0h1.2v-8.0zM1351.8 736.5v9.2h1.4v-9.2zM1353.1 736.5v9.2h1.4v-9.2zM1354.4 736.5v9.2h1.3v-9.2zM1355.6 736.5v3.2h1.4v-3.2zM1356.9 736.5v5.5h1.4v-5.5zM1358.2 736.5v7.9h1.4v-7.9zM1359.5 736.5v9.2h1.4v-9.2zM1360.8 736.5v5.9h1.4v-5.9zM1362.1 736.5v7.7h1.4v-7.7zM1363.4 736.5v5.0h1.4v-5.0zM1366.0 736.5v9.2h1.4v-9.2zM1367.3 736.5v2.5h0.3v-2.5zM1394.0 736.5v6.7h0.8v-6.7zM1431.3 736.5v5.0h0.8v-5.0zM1456.0 736.5v5.4h0.8v-5.4zM1571.2 736.5v3.4h0.8v-3.4z" fill="#8c3c3c"/>
<path d="M451.9 679.0v2.6h1.4v-2.6zM453.2 679.0v2.6h1.4v-2.6zM454.5 679.0v2.6h1.4v-2.6zM455.8 679.0v2.6h1.4v-2.6zM457.1 679.0v2.6h1.4v-2.6zM458.4 679.0v2.6h1.4v-2.6zM459.7 679.0v2.6h1.4v-2.6zM461.0 679.0v2.6h1.4v-2.6zM464.9 679.0v2.6h1.4v-2.6zM471.4 679.0v2.6h1.4v-2.6zM472.7 679.0v2.6h1.4v-2.6zM493.5 679.0v2.6h1.4v-2.6zM494.8 679.0v2.6h1.4v-2.6zM496.1 679.0v2.6h1.4v-2.6zM497.4 679.0v2.6h1.4v-2.6zM498.7 679.0v2.6h1.4v-2.6zM500.0 679.0v2.6h1.4v-2.6zM501.3 679.0v2.6h1.4v-2.6zM502.6 679.0v2.6h1.4v-2.6zM503.9 679.0v2.6h1.4v-2.6zM522.1 679.0v2.6h1.4v-2.6zM523.4 679.0v2.6h1.4v-2.6zM524.7 679.0v2.6h1.4v-2.6zM526.0 679.0v2.6h1.4v-2.6zM527.3 679.0v2.6h1.4v-2.6zM528.6 679.0v2.6h1.4v-2.6zM529.9 679.0v2.6h1.4v-2.6zM531.2 679.0v2.6h1.4v-2.6zM532.5 679.0v2.6h1.4v-2.6zM533.8 679.0v2.6h1.4v-2.6zM563.7 679.0v2.6h1.4v-2.6zM587.1 679.0v2.6h1.4v-2.6zM591.0 679.0v2.6h1.4v-2.6zM619.6 679.0v2.6h1.4v-2.6zM633.9 679.0v2.6h1.4v-2.6zM644.3 679.0v2.6h1.4v-2.6zM735.3 679.0v2.6h1.4v-2.6zM758.7 679.0v2.6h1.4v-2.6zM760.0 679.0v2.6h1.4v-2.6zM766.5 679.0v2.6h1.4v-2.6zM767.8 679.0v2.6h1.4v-2.6zM776.9 679.0v2.6h1.4v-2.6zM910.8 679.0v2.6h1.4v-2.6zM912.1 679.0v2.6h1.4v-2.6zM913.4 679.0v2.6h1.4v-2.6zM914.7 679.0v2.6h1.4v-2.6zM916.0 679.0v2.6h1.4v-2.6zM917.3 679.0v2.6h1.4v-2.6zM918.6 679.0v2.6h1.4v-2.6zM919.9 679.0v2.6h1.4v-2.6zM921.2 679.0v2.6h1.4v-2.6zM922.5 679.0v2.6h1.4v-2.6zM923.8 679.0v2.6h1.4v-2.6zM925.1 679.0v2.6h1.4v-2.6zM926.4 679.0v2.6h1.4v-2.6zM927.7 679.0v2.6h1.4v-2.6zM929.0 679.0v2.6h1.4v-2.6zM930.3 679.0v2.6h1.4v-2.6zM931.6 679.0v2.6h1.4v-2.6zM932.9 679.0v2.6h1.4v-2.6zM934.2 679.0v2.6h1.4v-2.6zM935.5 679.0v2.6h1.4v-2.6zM936.8 679.0v2.6h1.4v-2.6zM1161.7 679.0v2.6h1.4v-2.6zM1207.2 679.0v2.6h1.4v-2.6zM1264.4 679.0v2.6h1.4v-2.6zM1480.2 679.0v2.6h1.4v-2.6zM1481.5 679.0v2.6h1.4v-2.6zM1482.8 679.0v2.6h1.4v-2.6zM1484.1 679.0v2.6h1.4v-2.6zM1485.4 679.0v2.6h1.4v-2.6zM1486.7 679.0v2.6h1.4v-2.6zM1488.0 679.0v2.6h1.4v-2.6zM1489.3 679.0v2.6h1.4v-2.6zM1490.6 679.0v2.6h1.4v-2.6zM1491.9 679.0v2.6h1.4v-2.6zM1493.2 679.0v2.6h1.4v-2.6zM1494.5 679.0v2.6h1.4v-2.6zM1495.8 679.0v2.6h1.4v-2.6zM1497.1 679.0v2.6h1.4v-2.6zM1498.4 679.0v2.6h1.4v-2.6zM1499.7 679.0v2.6h1.4v-2.6zM1501.0 679.0v2.6h1.4v-2.6zM1502.3 679.0v2.6h1.4v-2.6zM1503.6 679.0v2.6h1.4v-2.6zM1508.8 679.0v2.6h1.4v-2.6zM1532.2 679.0v2.6h1.4v-2.6zM1533.5 679.0v2.6h1.4v-2.6zM1538.7 679.0v2.6h1.4v-2.6zM1540.0 679.0v2.6h1.4v-2.6zM1541.3 679.0v2.6h1.4v-2.6zM1542.6 679.0v2.6h1.4v-2.6zM1543.9 679.0v2.6h1.4v-2.6zM1546.5 679.0v2.6h1.4v-2.6zM1547.8 679.0v2.6h1.4v-2.6zM1549.1 679.0v2.6h1.4v-2.6zM1550.4 679.0v2.6h1.4v-2.6zM1554.3 679.0v2.6h1.4v-2.6zM213.0 743.0v2.6h1.4v-2.6zM214.3 743.0v2.6h1.4v-2.6zM215.6 743.0v2.6h1.4v-2.6zM216.9 743.0v2.6h1.4v-2.6zM218.2 743.0v2.6h1.4v-2.6zM220.8 743.0v2.6h1.4v-2.6zM222.1 743.0v2.6h1.4v-2.6zM224.7 743.0v2.6h1.4v-2.6zM226.0 743.0v2.6h1.4v-2.6zM228.6 743.0v2.6h0.8v-2.6zM238.3 743.0v2.6h1.4v-2.6zM239.6 743.0v2.6h1.4v-2.6zM252.6 743.0v2.6h1.4v-2.6zM283.4 743.0v2.6h1.4v-2.6zM284.7 743.0v2.6h1.4v-2.6zM287.3 743.0v2.6h1.4v-2.6zM291.2 743.0v2.6h1.4v-2.6zM292.5 743.0v2.6h1.4v-2.6zM296.4 743.0v2.6h1.4v-2.6zM299.0 743.0v2.6h1.4v-2.6zM300.3 743.0v2.6h1.4v-2.6zM301.6 743.0v2.6h1.4v-2.6zM305.5 743.0v2.6h1.4v-2.6zM308.1 743.0v2.6h1.4v-2.6zM309.4 743.0v2.6h1.4v-2.6zM312.0 743.0v2.6h1.4v-2.6zM313.3 743.0v2.6h1.4v-2.6zM314.6 743.0v2.6h1.4v-2.6zM315.9 743.0v2.6h1.4v-2.6zM317.2 743.0v2.6h1.4v-2.6zM318.5 743.0v2.6h1.4v-2.6zM319.8 743.0v2.6h1.4v-2.6zM321.1 743.0v2.6h1.4v-2.6zM327.4 743.0v2.6h1.4v-2.6zM334.0 743.0v2.6h1.4v-2.6zM336.6 743.0v2.6h1.4v-2.6zM337.9 743.0v2.6h1.4v-2.6zM339.2 743.0v2.6h1.4v-2.6zM340.5 743.0v2.6h1.4v-2.6zM343.1 743.0v2.6h1.4v-2.6zM348.3 743.0v2.6h1.4v-2.6zM352.2 743.0v2.6h1.4v-2.6zM357.4 743.0v2.6h1.4v-2.6zM360.0 743.0v2.6h1.4v-2.6zM361.3 743.0v2.6h1.4v-2.6zM362.6 743.0v2.6h1.4v-2.6zM363.9 743.0v2.6h1.4v-2.6zM365.2 743.0v2.6h1.4v-2.6zM366.5 743.0v2.6h1.4v-2.6zM367.8 743.0v2.6h1.4v-2.6zM369.1 743.0v2.6h1.4v-2.6zM370.4 743.0v2.6h1.4v-2.6zM371.7 743.0v2.6h1.4v-2.6zM373.0 743.0v2.6h1.4v-2.6zM374.3 743.0v2.6h1.4v-2.6zM375.6 743.0v2.6h1.4v-2.6zM376.9 743.0v2.6h1.4v-2.6zM378.2 743.0v2.6h1.4v-2.6zM380.8 743.0v2.6h1.4v-2.6zM384.7 743.0v2.6h1.4v-2.6zM386.0 743.0v2.6h1.4v-2.6zM388.6 743.0v2.6h1.4v-2.6zM391.2 743.0v2.6h1.4v-2.6zM392.5 743.0v2.6h1.4v-2.6zM395.1 743.0v2.6h1.4v-2.6zM396.4 743.0v2.6h1.4v-2.6zM397.7 743.0v2.6h1.4v-2.6zM408.6 743.0v2.6h1.4v-2.6zM409.9 743.0v2.6h1.4v-2.6zM412.5 743.0v2.6h1.4v-2.6zM413.8 743.0v2.6h1.4v-2.6zM415.1 743.0v2.6h1.4v-2.6zM416.4 743.0v2.6h1.4v-2.6zM419.0 743.0v2.6h1.4v-2.6zM421.6 743.0v2.6h1.4v-2.6zM422.9 743.0v2.6h1.4v-2.6zM424.2 743.0v2.6h0.3v-2.6zM651.0 743.0v2.6h1.4v-2.6zM652.3 743.0v2.6h1.4v-2.6zM653.6 743.0v2.6h1.4v-2.6zM654.9 743.0v2.6h1.4v-2.6zM656.2 743.0v2.6h1.4v-2.6zM657.5 743.0v2.6h1.4v-2.6zM658.8 743.0v2.6h1.4v-2.6zM660.1 743.0v2.6h1.4v-2.6zM661.4 743.0v2.6h1.4v-2.6zM662.7 743.0v2.6h1.4v-2.6zM672.5 743.0v2.6h1.4v-2.6zM675.1 743.0v2.6h1.0v-2.6zM693.6 743.0v2.6h0.5v-2.6zM695.3 743.0v2.6h1.4v-2.6zM696.6 743.0v2.6h1.4v-2.6zM697.9 743.0v2.6h1.4v-2.6zM703.1 743.0v2.6h1.4v-2.6zM796.6 743.0v2.6h1.4v-2.6zM800.5 743.0v2.6h1.4v-2.6zM803.1 743.0v2.6h1.4v-2.6zM804.4 743.0v2.6h1.4v-2.6zM805.7 743.0v2.6h1.4v-2.6zM808.3 743.0v2.6h1.4v-2.6zM810.9 743.0v2.6h0.5v-2.6zM823.4 743.0v2.6h1.4v-2.6zM824.7 743.0v2.6h1.4v-2.6zM831.6 743.0v2.6h1.4v-2.6zM832.9 743.0v2.6h1.4v-2.6zM834.2 743.0v2.6h1.4v-2.6zM835.5 743.0v2.6h1.4v-2.6zM836.8 743.0v2.6h1.4v-2.6zM838.1 743.0v2.6h0.9v-2.6zM847.9 743.0v2.6h1.4v-2.6zM866.1 743.0v2.6h1.4v-2.6zM867.4 743.0v2.6h1.4v-2.6zM868.7 743.0v2.6h1.4v-2.6zM874.3 743.0v2.6h1.4v-2.6zM876.9 743.0v2.6h1.4v-2.6zM878.2 743.0v2.6h1.4v-2.6zM879.5 743.0v2.6h1.4v-2.6zM882.1 743.0v2.6h1.4v-2.6zM883.4 743.0v2.6h1.4v-2.6zM886.0 743.0v2.6h1.4v-2.6zM887.3 743.0v2.6h1.4v-2.6zM889.9 743.0v2.6h0.9v-2.6zM892.4 743.0v2.6h1.4v-2.6zM893.7 743.0v2.6h1.4v-2.6zM895.0 743.0v2.6h1.4v-2.6zM896.3 743.0v2.6h1.4v-2.6zM897.6 743.0v2.6h1.4v-2.6zM898.9 743.0v2.6h1.4v-2.6zM900.2 743.0v2.6h1.4v-2.6zM901.5 743.0v2.6h1.4v-2.6zM902.8 743.0v2.6h1.4v-2.6zM904.1 743.0v2.6h1.4v-2.6zM908.0 743.0v2.6h0.9v-2.6zM940.0 743.0v2.6h1.4v-2.6zM943.9 743.0v2.6h1.4v-2.6zM946.5 743.0v2.6h1.4v-2.6zM949.1 743.0v2.6h1.4v-2.6zM950.4 743.0v2.6h1.4v-2.6zM951.7 743.0v2.6h1.4v-2.6zM953.0 743.0v2.6h1.4v-2.6zM954.3 743.0v2.6h1.4v-2.6zM956.9 743.0v2.6h0.2v-2.6zM958.3 743.0v2.6h1.4v-2.6zM959.6 743.0v2.6h1.4v-2.6zM970.0 743.0v2.6h1.4v-2.6zM975.2 743.0v2.6h1.4v-2.6zM976.5 743.0v2.6h1.4v-2.6zM977.8 743.0v2.6h1.4v-2.6zM980.4 743.0v2.6h1.0v-2.6zM987.8 743.0v2.6h1.4v-2.6zM999.5 743.0v2.6h1.4v-2.6zM1039.4 743.0v2.6h1.4v-2.6zM1040.7 743.0v2.6h1.4v-2.6zM1051.1 743.0v2.6h1.4v-2.6zM1055.0 743.0v2.6h1.4v-2.6zM1062.8 743.0v2.6h1.4v-2.6zM1065.4 743.0v2.6h0.4v-2.6zM1070.5 743.0v2.6h1.4v-2.6zM1073.1 743.0v2.6h1.4v-2.6zM1074.4 743.0v2.6h1.4v-2.6zM1082.2 743.0v2.6h1.4v-2.6zM1119.7 743.0v2.6h1.4v-2.6zM1121.0 743.0v2.6h1.4v-2.6zM1133.0 743.0v2.6h1.4v-2.6zM1143.4 743.0v2.6h1.4v-2.6zM1178.0 743.0v2.6h1.4v-2.6zM1181.9 743.0v2.6h1.4v-2.6zM1183.2 743.0v2.6h1.4v-2.6zM1228.0 743.0v2.6h1.4v-2.6zM1229.3 743.0v2.6h1.4v-2.6zM1230.6 743.0v2.6h1.4v-2.6zM1233.2 743.0v2.6h1.4v-2.6zM1234.5 743.0v2.6h1.4v-2.6zM1238.6 743.0v2.6h1.4v-2.6zM1278.1 743.0v2.6h1.4v-2.6zM1279.4 743.0v2.6h1.4v-2.6zM1280.7 743.0v2.6h1.4v-2.6zM1283.3 743.0v2.6h1.4v-2.6zM1295.4 743.0v2.6h1.4v-2.6zM1351.8 743.0v2.6h1.4v-2.6zM1353.1 743.0v2.6h1.4v-2.6zM1354.4 743.0v2.6h1.3v-2.6zM1366.0 743.0v2.6h1.4v-2.6z" fill="#f738e8"/>
<text x="900.0" y="762.5" text-anchor="middle" fill="#141478" stroke="#141478" stroke-width="0.3" textLength="280.0" lengthAdjust="spacingAndGlyphs">Multiz Alignments of 100 Vertebrates</text>
<text x="207.0" y="780.6" text-anchor="end" fill="#141478" stroke="#141478" stroke-width="0.3" textLength="57.0" lengthAdjust="spacingAndGlyphs">Rhesus</text>
<text x="207.0" y="800.2" text-anchor="end" fill="#1e5a1e" stroke="#1e5a1e" stroke-width="0.3" textLength="51.0" lengthAdjust="spacingAndGlyphs">Mouse</text>
<text x="207.0" y="819.8" text-anchor="end" fill="#141478" stroke="#141478" stroke-width="0.3" textLength="30.0" lengthAdjust="spacingAndGlyphs">Dog</text>
<text x="207.0" y="839.4" text-anchor="end" fill="#1e5a1e" stroke="#1e5a1e" stroke-width="0.3" textLength="66.0" lengthAdjust="spacingAndGlyphs">Elephant</text>
<text x="207.0" y="859.0" text-anchor="end" fill="#1e5a1e" stroke="#1e5a1e" stroke-width="0.3" textLength="62.0" lengthAdjust="spacingAndGlyphs">Chicken</text>
<text x="207.0" y="878.6" text-anchor="end" fill="#141478" stroke="#141478" stroke-width="0.3" textLength="89.0" lengthAdjust="spacingAndGlyphs">X_tropicalis</text>
<text x="207.0" y="898.2" text-anchor="end" fill="#1e5a1e" stroke="#1e5a1e" stroke-width="0.3" textLength="71.0" lengthAdjust="spacingAndGlyphs">Zebrafish</text>
<rect x="213.8" y="765.4" width="344.4" height="17.4" fill="#000000"/>
<rect x="558.2" y="765.4" width="140.8" height="17.4" fill="#f0f0b0"/>
<rect x="699.0" y="765.4" width="424.3" height="17.4" fill="#000000"/>
<rect x="1123.3" y="765.4" width="32.5" height="17.4" fill="#f0f0b0"/>
<rect x="1155.8" y="765.4" width="114.8" height="17.4" fill="#000000"/>
<rect x="1270.6" y="765.4" width="31.4" height="17.4" fill="#f0f0b0"/>
<rect x="1302.0" y="765.4" width="285.4" height="17.4" fill="#000000"/>
<rect x="213.8" y="785.0" width="165.5" height="17.4" fill="#464646"/>
<rect x="390.2" y="785.0" width="60.8" height="17.4" fill="#464646"/>
<rect x="451.0" y="785.0" width="27.0" height="17.4" fill="#000000"/>
<rect x="481.6" y="785.0" width="30.4" height="17.4" fill="#000000"/>
<rect x="512.0" y="785.0" width="2.5" height="17.4" fill="#969696"/>
<rect x="514.5" y="785.0" width="55.5" height="17.4" fill="#000000"/>
<rect x="570.0" y="785.0" width="11.0" height="17.4" fill="#464646"/>
<rect x="581.0" y="785.0" width="203.6" height="17.4" fill="#000000"/>
<rect x="784.6" y="785.0" width="124.4" height="17.4" fill="#464646"/>
<rect x="909.0" y="785.0" width="30.0" height="17.4" fill="#000000"/>
<rect x="939.0" y="785.0" width="187.0" height="17.4" fill="#464646"/>
<rect x="1126.0" y="785.0" width="23.4" height="17.4" fill="#000000"/>
<rect x="1152.6" y="785.0" width="2.4" height="17.4" fill="#464646"/>
<rect x="1155.0" y="785.0" width="23.0" height="17.4" fill="#000000"/>
<rect x="1178.0" y="785.0" width="62.0" height="17.4" fill="#464646"/>
<rect x="1240.0" y="785.0" width="37.0" height="17.4" fill="#000000"/>
<rect x="1277.0" y="785.0" width="15.0" height="17.4" fill="#464646"/>
<rect x="1292.0" y="785.0" width="20.0" height="17.4" fill="#000000"/>
<rect x="1312.0" y="785.0" width="14.0" height="17.4" fill="#464646"/>
<rect x="1326.0" y="785.0" width="114.0" height="17.4" fill="#000000"/>
<rect x="1440.0" y="785.0" width="35.0" height="17.4" fill="#464646"/>
<rect x="1475.0" y="785.0" width="112.4" height="17.4" fill="#000000"/>
<rect x="213.8" y="804.6" width="23.2" height="17.4" fill="#464646"/>
<rect x="237.0" y="804.6" width="6.0" height="17.4" fill="#969696"/>
<rect x="243.0" y="804.6" width="60.0" height="17.4" fill="#000000"/>
<rect x="308.0" y="804.6" width="100.0" height="17.4" fill="#000000"/>
<rect x="408.0" y="804.6" width="71.0" height="17.4" fill="#000000"/>
<rect x="481.0" y="804.6" width="210.0" height="17.4" fill="#000000"/>
<rect x="691.0" y="804.6" width="16.0" height="17.4" fill="#000000"/>
<rect x="707.0" y="804.6" width="97.0" height="17.4" fill="#000000"/>
<rect x="804.0" y="804.6" width="5.5" height="17.4" fill="#d7d7d7"/>
<rect x="809.5" y="804.6" width="94.0" height="17.4" fill="#000000"/>
<rect x="903.5" y="804.6" width="36.8" height="17.4" fill="#000000"/>
<rect x="940.3" y="804.6" width="220.9" height="17.4" fill="#000000"/>
<rect x="1173.2" y="804.6" width="66.8" height="17.4" fill="#464646"/>
<rect x="1240.0" y="804.6" width="30.6" height="17.4" fill="#000000"/>
<rect x="1270.6" y="804.6" width="53.6" height="17.4" fill="#f0f0b0"/>
<rect x="1324.2" y="804.6" width="263.2" height="17.4" fill="#000000"/>
<rect x="213.8" y="824.2" width="12.2" height="17.4" fill="#464646"/>
<rect x="226.0" y="824.2" width="17.0" height="17.4" fill="#000000"/>
<rect x="243.0" y="824.2" width="145.0" height="17.4" fill="#000000"/>
<rect x="391.7" y="824.2" width="59.3" height="17.4" fill="#000000"/>
<rect x="451.0" y="824.2" width="119.2" height="17.4" fill="#000000"/>
<rect x="570.2" y="824.2" width="29.8" height="17.4" fill="#f0f0b0"/>
<rect x="600.0" y="824.2" width="50.0" height="17.4" fill="#000000"/>
<rect x="650.0" y="824.2" width="52.0" height="17.4" fill="#464646"/>
<rect x="702.0" y="824.2" width="93.0" height="17.4" fill="#000000"/>
<rect x="795.0" y="824.2" width="114.0" height="17.4" fill="#464646"/>
<rect x="909.0" y="824.2" width="30.0" height="17.4" fill="#000000"/>
<rect x="939.0" y="824.2" width="47.9" height="17.4" fill="#969696"/>
<rect x="993.4" y="824.2" width="282.6" height="17.4" fill="#000000"/>
<rect x="1276.0" y="824.2" width="11.0" height="17.4" fill="#969696"/>
<rect x="1287.0" y="824.2" width="7.3" height="17.4" fill="#000000"/>
<rect x="1394.4" y="824.2" width="193.0" height="17.4" fill="#000000"/>
<rect x="248.7" y="843.8" width="9.3" height="17.4" fill="#969696"/>
<rect x="258.0" y="843.8" width="18.0" height="17.4" fill="#000000"/>
<rect x="276.0" y="843.8" width="16.7" height="17.4" fill="#969696"/>
<rect x="435.7" y="843.8" width="42.0" height="17.4" fill="#000000"/>
<rect x="481.6" y="843.8" width="73.4" height="17.4" fill="#000000"/>
<rect x="555.0" y="843.8" width="6.5" height="17.4" fill="#969696"/>
<rect x="561.5" y="843.8" width="8.5" height="17.4" fill="#000000"/>
<rect x="570.0" y="843.8" width="6.7" height="17.4" fill="#d7d7d7"/>
<rect x="576.7" y="843.8" width="75.8" height="17.4" fill="#000000"/>
<rect x="704.5" y="843.8" width="67.1" height="17.4" fill="#000000"/>
<rect x="771.6" y="843.8" width="84.4" height="17.4" fill="#464646"/>
<rect x="875.5" y="843.3" width="1.8" height="18.9" fill="#d8d820"/>
<rect x="877.3" y="843.8" width="31.7" height="17.4" fill="#464646"/>
<rect x="909.0" y="843.8" width="31.3" height="17.4" fill="#000000"/>
<rect x="940.3" y="843.8" width="16.3" height="17.4" fill="#969696"/>
<rect x="1150.8" y="843.8" width="27.3" height="17.4" fill="#000000"/>
<rect x="1340.2" y="843.8" width="76.8" height="17.4" fill="#000000"/>
<rect x="1417.0" y="843.8" width="18.4" height="17.4" fill="#969696"/>
<rect x="1443.9" y="843.8" width="34.3" height="17.4" fill="#969696"/>
<rect x="1478.2" y="843.8" width="33.2" height="17.4" fill="#000000"/>
<rect x="1511.4" y="843.8" width="18.9" height="17.4" fill="#d7d7d7"/>
<rect x="1530.3" y="843.8" width="43.2" height="17.4" fill="#000000"/>
<rect x="224.9" y="863.4" width="6.8" height="17.4" fill="#464646"/>
<rect x="231.7" y="862.9" width="1.5" height="18.9" fill="#d8d820"/>
<rect x="233.2" y="863.4" width="38.6" height="17.4" fill="#464646"/>
<rect x="271.8" y="862.9" width="1.8" height="18.9" fill="#d8d820"/>
<rect x="444.8" y="863.4" width="58.4" height="17.4" fill="#000000"/>
<rect x="559.3" y="863.4" width="22.7" height="17.4" fill="#464646"/>
<rect x="582.0" y="863.4" width="66.1" height="17.4" fill="#000000"/>
<rect x="693.6" y="863.4" width="51.4" height="17.4" fill="#000000"/>
<rect x="745.0" y="863.4" width="7.0" height="17.4" fill="#969696"/>
<rect x="752.0" y="863.4" width="30.4" height="17.4" fill="#000000"/>
<rect x="907.5" y="862.9" width="1.4" height="18.9" fill="#d8d820"/>
<rect x="908.9" y="863.4" width="29.7" height="17.4" fill="#000000"/>
<rect x="1205.6" y="863.4" width="26.0" height="17.4" fill="#464646"/>
<rect x="1315.2" y="862.9" width="1.7" height="18.9" fill="#d8d820"/>
<rect x="1316.9" y="863.4" width="20.6" height="17.4" fill="#464646"/>
<rect x="1337.5" y="863.4" width="4.9" height="17.4" fill="#000000"/>
<rect x="1474.4" y="863.4" width="37.0" height="17.4" fill="#000000"/>
<rect x="1511.4" y="863.4" width="23.3" height="17.4" fill="#969696"/>
<rect x="1534.7" y="863.4" width="22.6" height="17.4" fill="#000000"/>
<rect x="448.0" y="883.0" width="60.6" height="17.4" fill="#464646"/>
<rect x="540.0" y="883.0" width="16.0" height="17.4" fill="#464646"/>
<rect x="560.4" y="883.0" width="16.3" height="17.4" fill="#464646"/>
<rect x="583.2" y="883.0" width="63.8" height="17.4" fill="#000000"/>
<rect x="703.4" y="883.0" width="68.2" height="17.4" fill="#000000"/>
<rect x="908.9" y="883.0" width="31.4" height="17.4" fill="#000000"/>
<rect x="1152.1" y="883.0" width="27.1" height="17.4" fill="#000000"/>
<rect x="1262.8" y="883.0" width="9.3" height="17.4" fill="#000000"/>
<rect x="1405.1" y="883.0" width="11.5" height="17.4" fill="#000000"/>
<rect x="1478.2" y="883.0" width="33.2" height="17.4" fill="#000000"/>
<rect x="1511.4" y="883.0" width="38.8" height="17.4" fill="#969696"/>
<rect x="1550.2" y="883.0" width="8.9" height="17.4" fill="#000000"/>
<rect x="1559.1" y="883.0" width="2.6" height="17.4" fill="#2a6ad0"/>
<path d="M219.0 785.0h1.3v17.4h-1.3zM237.2 785.0h1.3v17.4h-1.3zM238.5 785.0h1.3v17.4h-1.3zM277.5 785.0h1.3v17.4h-1.3zM281.4 785.0h1.3v17.4h-1.3zM282.7 785.0h2.6v17.4h-2.6zM285.3 785.0h2.6v17.4h-2.6zM287.9 785.0h1.3v17.4h-1.3zM290.5 785.0h1.3v17.4h-1.3zM297.0 785.0h1.3v17.4h-1.3zM306.1 785.0h1.3v17.4h-1.3zM312.6 785.0h1.3v17.4h-1.3zM320.4 785.0h1.3v17.4h-1.3zM334.7 785.0h2.6v17.4h-2.6zM346.4 785.0h1.3v17.4h-1.3zM352.9 785.0h1.3v17.4h-1.3zM359.4 785.0h2.6v17.4h-2.6zM365.9 785.0h1.3v17.4h-1.3zM398.0 785.0h1.3v17.4h-1.3zM407.1 785.0h1.3v17.4h-1.3zM412.3 785.0h1.3v17.4h-1.3zM413.6 785.0h1.3v17.4h-1.3zM422.7 785.0h1.3v17.4h-1.3zM427.9 785.0h1.3v17.4h-1.3zM431.8 785.0h1.3v17.4h-1.3zM433.1 785.0h1.3v17.4h-1.3zM435.7 785.0h1.3v17.4h-1.3zM437.0 785.0h1.3v17.4h-1.3zM784.6 785.0h2.6v17.4h-2.6zM789.8 785.0h1.3v17.4h-1.3zM797.6 785.0h1.3v17.4h-1.3zM798.9 785.0h1.3v17.4h-1.3zM810.6 785.0h2.6v17.4h-2.6zM813.2 785.0h1.3v17.4h-1.3zM822.3 785.0h3.9v17.4h-3.9zM826.2 785.0h1.3v17.4h-1.3zM834.0 785.0h1.3v17.4h-1.3zM837.9 785.0h2.6v17.4h-2.6zM845.7 785.0h2.6v17.4h-2.6zM852.2 785.0h1.3v17.4h-1.3zM854.8 785.0h2.6v17.4h-2.6zM860.0 785.0h1.3v17.4h-1.3zM861.3 785.0h1.3v17.4h-1.3zM862.6 785.0h2.6v17.4h-2.6zM870.4 785.0h1.3v17.4h-1.3zM876.9 785.0h1.3v17.4h-1.3zM878.2 785.0h1.3v17.4h-1.3zM888.6 785.0h1.3v17.4h-1.3zM908.1 785.0h0.9v17.4h-0.9zM940.3 785.0h1.3v17.4h-1.3zM941.6 785.0h1.3v17.4h-1.3zM948.1 785.0h1.3v17.4h-1.3zM950.7 785.0h1.3v17.4h-1.3zM955.9 785.0h1.3v17.4h-1.3zM968.9 785.0h2.6v17.4h-2.6zM974.1 785.0h1.3v17.4h-1.3zM979.3 785.0h2.6v17.4h-2.6zM987.1 785.0h1.3v17.4h-1.3zM992.3 785.0h1.3v17.4h-1.3zM1000.1 785.0h1.3v17.4h-1.3zM1001.4 785.0h1.3v17.4h-1.3zM1004.0 785.0h1.3v17.4h-1.3zM1005.3 785.0h1.3v17.4h-1.3zM1007.9 785.0h1.3v17.4h-1.3zM1011.8 785.0h1.3v17.4h-1.3zM1018.3 785.0h2.6v17.4h-2.6zM1023.5 785.0h1.3v17.4h-1.3zM1028.7 785.0h1.3v17.4h-1.3zM1032.6 785.0h1.3v17.4h-1.3zM1035.2 785.0h1.3v17.4h-1.3zM1040.4 785.0h3.9v17.4h-3.9zM1050.8 785.0h1.3v17.4h-1.3zM1053.4 785.0h2.6v17.4h-2.6zM1063.8 785.0h2.6v17.4h-2.6zM1082.0 785.0h1.3v17.4h-1.3zM1095.0 785.0h2.6v17.4h-2.6zM1097.6 785.0h1.3v17.4h-1.3zM1114.5 785.0h2.6v17.4h-2.6zM1117.1 785.0h1.3v17.4h-1.3zM1180.6 785.0h3.9v17.4h-3.9zM1184.5 785.0h1.3v17.4h-1.3zM1189.7 785.0h1.3v17.4h-1.3zM1191.0 785.0h1.3v17.4h-1.3zM1198.8 785.0h1.3v17.4h-1.3zM1211.8 785.0h1.3v17.4h-1.3zM1237.8 785.0h1.3v17.4h-1.3zM1239.1 785.0h0.9v17.4h-0.9zM1277.0 785.0h1.3v17.4h-1.3zM1279.6 785.0h2.6v17.4h-2.6zM1319.8 785.0h1.3v17.4h-1.3zM1440.0 785.0h2.6v17.4h-2.6zM1442.6 785.0h1.3v17.4h-1.3zM1445.2 785.0h1.3v17.4h-1.3zM1450.4 785.0h1.3v17.4h-1.3zM1454.3 785.0h1.3v17.4h-1.3zM1455.6 785.0h1.3v17.4h-1.3zM1462.1 785.0h1.3v17.4h-1.3zM1463.4 785.0h1.3v17.4h-1.3zM1464.7 785.0h1.3v17.4h-1.3zM1472.5 785.0h2.5v17.4h-2.5zM235.9 804.6h1.1v17.4h-1.1zM1236.9 804.6h1.3v17.4h-1.3zM213.8 824.2h1.3v17.4h-1.3zM650.0 824.2h3.9v17.4h-3.9zM656.5 824.2h1.3v17.4h-1.3zM690.3 824.2h1.3v17.4h-1.3zM692.9 824.2h1.3v17.4h-1.3zM695.5 824.2h3.9v17.4h-3.9zM815.8 824.2h1.3v17.4h-1.3zM819.7 824.2h1.3v17.4h-1.3zM827.5 824.2h1.3v17.4h-1.3zM837.9 824.2h2.6v17.4h-2.6zM850.9 824.2h2.6v17.4h-2.6zM863.9 824.2h2.6v17.4h-2.6zM869.1 824.2h1.3v17.4h-1.3zM883.4 824.2h1.3v17.4h-1.3zM896.4 824.2h1.3v17.4h-1.3zM900.3 824.2h1.3v17.4h-1.3zM939.0 824.2h2.6v17.4h-2.6zM1276.0 824.2h2.6v17.4h-2.6zM1279.9 824.2h1.3v17.4h-1.3zM252.6 843.8h1.3v17.4h-1.3zM776.8 843.8h1.3v17.4h-1.3zM778.1 843.8h1.3v17.4h-1.3zM780.7 843.8h1.3v17.4h-1.3zM782.0 843.8h1.3v17.4h-1.3zM789.8 843.8h1.3v17.4h-1.3zM806.7 843.8h2.6v17.4h-2.6zM809.3 843.8h1.3v17.4h-1.3zM824.9 843.8h1.3v17.4h-1.3zM827.5 843.8h1.3v17.4h-1.3zM828.8 843.8h2.6v17.4h-2.6zM835.3 843.8h1.3v17.4h-1.3zM836.6 843.8h1.3v17.4h-1.3zM882.5 843.8h1.3v17.4h-1.3zM895.5 843.8h1.3v17.4h-1.3zM904.6 843.8h2.6v17.4h-2.6zM953.3 843.8h1.3v17.4h-1.3zM1423.5 843.8h1.3v17.4h-1.3zM1460.8 843.8h2.6v17.4h-2.6zM228.8 863.4h1.3v17.4h-1.3zM244.9 863.4h2.6v17.4h-2.6zM254.0 863.4h1.3v17.4h-1.3zM255.3 863.4h1.3v17.4h-1.3zM257.9 863.4h1.3v17.4h-1.3zM260.5 863.4h1.3v17.4h-1.3zM267.0 863.4h2.6v17.4h-2.6zM559.3 863.4h1.3v17.4h-1.3zM573.6 863.4h1.3v17.4h-1.3zM1208.2 863.4h2.6v17.4h-2.6zM1216.0 863.4h2.6v17.4h-2.6zM1318.2 863.4h1.3v17.4h-1.3zM1514.0 863.4h2.6v17.4h-2.6zM1519.2 863.4h1.3v17.4h-1.3zM1529.6 863.4h1.3v17.4h-1.3zM448.0 883.0h2.6v17.4h-2.6zM451.9 883.0h1.3v17.4h-1.3zM453.2 883.0h1.3v17.4h-1.3zM467.5 883.0h2.6v17.4h-2.6zM472.7 883.0h1.3v17.4h-1.3zM488.3 883.0h1.3v17.4h-1.3zM494.8 883.0h1.3v17.4h-1.3zM497.4 883.0h1.3v17.4h-1.3zM500.0 883.0h1.3v17.4h-1.3zM547.8 883.0h1.3v17.4h-1.3zM553.0 883.0h1.3v17.4h-1.3zM1523.1 883.0h1.3v17.4h-1.3z" fill="#000000"/>
<path d="M220.3 785.0h1.3v17.4h-1.3zM221.6 785.0h2.6v17.4h-2.6zM241.1 785.0h1.3v17.4h-1.3zM260.6 785.0h1.3v17.4h-1.3zM300.9 785.0h1.3v17.4h-1.3zM302.2 785.0h2.6v17.4h-2.6zM311.3 785.0h1.3v17.4h-1.3zM316.5 785.0h2.6v17.4h-2.6zM324.3 785.0h2.6v17.4h-2.6zM342.5 785.0h1.3v17.4h-1.3zM356.8 785.0h1.3v17.4h-1.3zM358.1 785.0h1.3v17.4h-1.3zM390.2 785.0h2.6v17.4h-2.6zM438.3 785.0h2.6v17.4h-2.6zM447.4 785.0h1.3v17.4h-1.3zM450.0 785.0h1.0v17.4h-1.0zM498.5 785.0h1.3v17.4h-1.3zM576.5 785.0h2.6v17.4h-2.6zM597.9 785.0h1.3v17.4h-1.3zM604.4 785.0h2.6v17.4h-2.6zM608.3 785.0h1.3v17.4h-1.3zM626.5 785.0h1.3v17.4h-1.3zM640.8 785.0h1.3v17.4h-1.3zM669.4 785.0h1.3v17.4h-1.3zM673.3 785.0h3.9v17.4h-3.9zM682.4 785.0h1.3v17.4h-1.3zM683.7 785.0h1.3v17.4h-1.3zM688.9 785.0h1.3v17.4h-1.3zM696.7 785.0h1.3v17.4h-1.3zM704.5 785.0h1.3v17.4h-1.3zM709.7 785.0h1.3v17.4h-1.3zM711.0 785.0h2.6v17.4h-2.6zM722.7 785.0h3.9v17.4h-3.9zM750.0 785.0h2.6v17.4h-2.6zM779.9 785.0h2.6v17.4h-2.6zM795.0 785.0h2.6v17.4h-2.6zM808.0 785.0h1.3v17.4h-1.3zM827.5 785.0h2.6v17.4h-2.6zM853.5 785.0h1.3v17.4h-1.3zM865.2 785.0h1.3v17.4h-1.3zM871.7 785.0h2.6v17.4h-2.6zM895.1 785.0h1.3v17.4h-1.3zM896.4 785.0h1.3v17.4h-1.3zM906.8 785.0h1.3v17.4h-1.3zM939.0 785.0h1.3v17.4h-1.3zM946.8 785.0h1.3v17.4h-1.3zM949.4 785.0h1.3v17.4h-1.3zM953.3 785.0h2.6v17.4h-2.6zM967.6 785.0h1.3v17.4h-1.3zM978.0 785.0h1.3v17.4h-1.3zM985.8 785.0h1.3v17.4h-1.3zM1020.9 785.0h1.3v17.4h-1.3zM1030.0 785.0h1.3v17.4h-1.3zM1037.8 785.0h1.3v17.4h-1.3zM1048.2 785.0h1.3v17.4h-1.3zM1067.7 785.0h2.6v17.4h-2.6zM1079.4 785.0h1.3v17.4h-1.3zM1085.9 785.0h1.3v17.4h-1.3zM1098.9 785.0h3.9v17.4h-3.9zM1108.0 785.0h1.3v17.4h-1.3zM1118.4 785.0h1.3v17.4h-1.3zM1119.7 785.0h1.3v17.4h-1.3zM1126.0 785.0h1.3v17.4h-1.3zM1148.1 785.0h1.3v17.4h-1.3zM1152.6 785.0h1.3v17.4h-1.3zM1178.0 785.0h1.3v17.4h-1.3zM1188.4 785.0h1.3v17.4h-1.3zM1209.2 785.0h1.3v17.4h-1.3zM1215.7 785.0h1.3v17.4h-1.3zM1220.9 785.0h1.3v17.4h-1.3zM1224.8 785.0h1.3v17.4h-1.3zM1226.1 785.0h1.3v17.4h-1.3zM1227.4 785.0h3.9v17.4h-3.9zM1233.9 785.0h1.3v17.4h-1.3zM1240.0 785.0h1.3v17.4h-1.3zM1242.6 785.0h1.3v17.4h-1.3zM1247.8 785.0h1.3v17.4h-1.3zM1258.2 785.0h1.3v17.4h-1.3zM1259.5 785.0h1.3v17.4h-1.3zM1264.7 785.0h1.3v17.4h-1.3zM1282.2 785.0h1.3v17.4h-1.3zM1283.5 785.0h2.6v17.4h-2.6zM1286.1 785.0h3.9v17.4h-3.9zM1301.1 785.0h2.6v17.4h-2.6zM1317.2 785.0h1.3v17.4h-1.3zM1318.5 785.0h1.3v17.4h-1.3zM1325.0 785.0h1.0v17.4h-1.0zM1328.6 785.0h1.3v17.4h-1.3zM1331.2 785.0h1.3v17.4h-1.3zM1333.8 785.0h1.3v17.4h-1.3zM1335.1 785.0h3.9v17.4h-3.9zM1346.8 785.0h3.9v17.4h-3.9zM1354.6 785.0h1.3v17.4h-1.3zM1359.8 785.0h2.6v17.4h-2.6zM1367.6 785.0h1.3v17.4h-1.3zM1370.2 785.0h1.3v17.4h-1.3zM1384.5 785.0h2.6v17.4h-2.6zM1406.6 785.0h1.3v17.4h-1.3zM1422.2 785.0h1.3v17.4h-1.3zM1453.0 785.0h1.3v17.4h-1.3zM1467.3 785.0h1.3v17.4h-1.3zM1468.6 785.0h1.3v17.4h-1.3zM1504.9 785.0h1.3v17.4h-1.3zM1511.4 785.0h1.3v17.4h-1.3zM1515.3 785.0h1.3v17.4h-1.3zM1530.9 785.0h2.6v17.4h-2.6zM1556.9 785.0h1.3v17.4h-1.3zM1569.9 785.0h2.6v17.4h-2.6zM1586.8 785.0h0.6v17.4h-0.6zM213.8 804.6h2.6v17.4h-2.6zM219.0 804.6h2.6v17.4h-2.6zM230.7 804.6h1.3v17.4h-1.3zM244.3 804.6h2.6v17.4h-2.6zM246.9 804.6h2.6v17.4h-2.6zM261.2 804.6h1.3v17.4h-1.3zM265.1 804.6h1.3v17.4h-1.3zM283.3 804.6h2.6v17.4h-2.6zM292.4 804.6h3.9v17.4h-3.9zM301.5 804.6h1.3v17.4h-1.3zM315.8 804.6h2.6v17.4h-2.6zM318.4 804.6h1.3v17.4h-1.3zM327.5 804.6h2.6v17.4h-2.6zM349.6 804.6h1.3v17.4h-1.3zM383.4 804.6h1.3v17.4h-1.3zM384.7 804.6h1.3v17.4h-1.3zM386.0 804.6h1.3v17.4h-1.3zM399.0 804.6h2.6v17.4h-2.6zM406.8 804.6h1.2v17.4h-1.2zM414.5 804.6h1.3v17.4h-1.3zM444.4 804.6h1.3v17.4h-1.3zM474.3 804.6h2.6v17.4h-2.6zM496.6 804.6h1.3v17.4h-1.3zM503.1 804.6h1.3v17.4h-1.3zM534.3 804.6h1.3v17.4h-1.3zM542.1 804.6h2.6v17.4h-2.6zM561.6 804.6h2.6v17.4h-2.6zM575.9 804.6h1.3v17.4h-1.3zM592.8 804.6h1.3v17.4h-1.3zM611.0 804.6h1.3v17.4h-1.3zM631.8 804.6h1.3v17.4h-1.3zM655.2 804.6h1.3v17.4h-1.3zM669.5 804.6h1.3v17.4h-1.3zM673.4 804.6h1.3v17.4h-1.3zM687.7 804.6h2.6v17.4h-2.6zM690.3 804.6h0.7v17.4h-0.7zM696.2 804.6h2.6v17.4h-2.6zM713.5 804.6h1.3v17.4h-1.3zM725.2 804.6h1.3v17.4h-1.3zM731.7 804.6h1.3v17.4h-1.3zM733.0 804.6h1.3v17.4h-1.3zM738.2 804.6h2.6v17.4h-2.6zM740.8 804.6h1.3v17.4h-1.3zM755.1 804.6h1.3v17.4h-1.3zM761.6 804.6h1.3v17.4h-1.3zM772.0 804.6h2.6v17.4h-2.6zM786.3 804.6h2.6v17.4h-2.6zM821.2 804.6h1.3v17.4h-1.3zM826.4 804.6h2.6v17.4h-2.6zM834.2 804.6h1.3v17.4h-1.3zM862.8 804.6h1.3v17.4h-1.3zM874.5 804.6h1.3v17.4h-1.3zM882.3 804.6h2.6v17.4h-2.6zM886.2 804.6h2.6v17.4h-2.6zM888.8 804.6h1.3v17.4h-1.3zM891.4 804.6h1.3v17.4h-1.3zM897.9 804.6h1.3v17.4h-1.3zM965.0 804.6h1.3v17.4h-1.3zM975.4 804.6h2.6v17.4h-2.6zM978.0 804.6h1.3v17.4h-1.3zM983.2 804.6h3.9v17.4h-3.9zM987.1 804.6h1.3v17.4h-1.3zM1023.5 804.6h1.3v17.4h-1.3zM1036.5 804.6h1.3v17.4h-1.3zM1040.4 804.6h1.3v17.4h-1.3zM1041.7 804.6h1.3v17.4h-1.3zM1046.9 804.6h1.3v17.4h-1.3zM1048.2 804.6h3.9v17.4h-3.9zM1059.9 804.6h1.3v17.4h-1.3zM1069.0 804.6h1.3v17.4h-1.3zM1072.9 804.6h1.3v17.4h-1.3zM1074.2 804.6h1.3v17.4h-1.3zM1085.9 804.6h1.3v17.4h-1.3zM1087.2 804.6h2.6v17.4h-2.6zM1091.1 804.6h1.3v17.4h-1.3zM1095.0 804.6h3.9v17.4h-3.9zM1100.2 804.6h2.6v17.4h-2.6zM1104.1 804.6h2.6v17.4h-2.6zM1136.6 804.6h1.3v17.4h-1.3zM1178.4 804.6h2.6v17.4h-2.6zM1181.0 804.6h1.3v17.4h-1.3zM1190.1 804.6h1.3v17.4h-1.3zM1243.9 804.6h1.3v17.4h-1.3zM1246.5 804.6h1.3v17.4h-1.3zM1255.6 804.6h1.3v17.4h-1.3zM1264.7 804.6h1.3v17.4h-1.3zM1267.3 804.6h1.3v17.4h-1.3zM1329.4 804.6h1.3v17.4h-1.3zM1348.9 804.6h2.6v17.4h-2.6zM1352.8 804.6h1.3v17.4h-1.3zM1395.7 804.6h1.3v17.4h-1.3zM1421.7 804.6h1.3v17.4h-1.3zM1449.0 804.6h2.6v17.4h-2.6zM1454.2 804.6h2.6v17.4h-2.6zM1460.7 804.6h1.3v17.4h-1.3zM1462.0 804.6h1.3v17.4h-1.3zM1465.9 804.6h1.3v17.4h-1.3zM1502.3 804.6h1.3v17.4h-1.3zM1503.6 804.6h1.3v17.4h-1.3zM1517.9 804.6h1.3v17.4h-1.3zM1566.0 804.6h1.3v17.4h-1.3zM1568.6 804.6h3.9v17.4h-3.9zM1579.0 804.6h1.3v17.4h-1.3zM215.1 824.2h1.3v17.4h-1.3zM216.4 824.2h1.3v17.4h-1.3zM243.0 824.2h1.3v17.4h-1.3zM254.7 824.2h1.3v17.4h-1.3zM274.2 824.2h2.6v17.4h-2.6zM295.0 824.2h1.3v17.4h-1.3zM305.4 824.2h1.3v17.4h-1.3zM306.7 824.2h3.9v17.4h-3.9zM310.6 824.2h1.3v17.4h-1.3zM314.5 824.2h2.6v17.4h-2.6zM327.5 824.2h1.3v17.4h-1.3zM373.0 824.2h1.3v17.4h-1.3zM386.0 824.2h2.0v17.4h-2.0zM391.7 824.2h2.6v17.4h-2.6zM403.4 824.2h1.3v17.4h-1.3zM408.6 824.2h2.6v17.4h-2.6zM424.2 824.2h1.3v17.4h-1.3zM441.1 824.2h1.3v17.4h-1.3zM446.3 824.2h1.3v17.4h-1.3zM448.9 824.2h1.3v17.4h-1.3zM451.0 824.2h1.3v17.4h-1.3zM465.3 824.2h1.3v17.4h-1.3zM483.5 824.2h1.3v17.4h-1.3zM484.8 824.2h1.3v17.4h-1.3zM499.1 824.2h3.9v17.4h-3.9zM512.1 824.2h1.3v17.4h-1.3zM544.6 824.2h1.3v17.4h-1.3zM660.4 824.2h2.6v17.4h-2.6zM663.0 824.2h1.3v17.4h-1.3zM674.7 824.2h1.3v17.4h-1.3zM691.6 824.2h1.3v17.4h-1.3zM708.5 824.2h1.3v17.4h-1.3zM720.2 824.2h1.3v17.4h-1.3zM730.6 824.2h1.3v17.4h-1.3zM739.7 824.2h1.3v17.4h-1.3zM760.5 824.2h1.3v17.4h-1.3zM768.3 824.2h2.6v17.4h-2.6zM778.7 824.2h1.3v17.4h-1.3zM781.3 824.2h1.3v17.4h-1.3zM785.2 824.2h1.3v17.4h-1.3zM793.0 824.2h1.3v17.4h-1.3zM797.6 824.2h2.6v17.4h-2.6zM810.6 824.2h1.3v17.4h-1.3zM813.2 824.2h1.3v17.4h-1.3zM817.1 824.2h1.3v17.4h-1.3zM823.6 824.2h1.3v17.4h-1.3zM828.8 824.2h1.3v17.4h-1.3zM845.7 824.2h2.6v17.4h-2.6zM848.3 824.2h1.3v17.4h-1.3zM861.3 824.2h1.3v17.4h-1.3zM879.5 824.2h1.3v17.4h-1.3zM892.5 824.2h3.9v17.4h-3.9zM904.2 824.2h2.6v17.4h-2.6zM950.7 824.2h1.3v17.4h-1.3zM953.3 824.2h1.3v17.4h-1.3zM997.3 824.2h1.3v17.4h-1.3zM1001.2 824.2h2.6v17.4h-2.6zM1005.1 824.2h1.3v17.4h-1.3zM1006.4 824.2h2.6v17.4h-2.6zM1011.6 824.2h1.3v17.4h-1.3zM1016.8 824.2h1.3v17.4h-1.3zM1018.1 824.2h1.3v17.4h-1.3zM1019.4 824.2h2.6v17.4h-2.6zM1029.8 824.2h2.6v17.4h-2.6zM1036.3 824.2h2.6v17.4h-2.6zM1040.2 824.2h1.3v17.4h-1.3zM1042.8 824.2h1.3v17.4h-1.3zM1072.7 824.2h1.3v17.4h-1.3zM1074.0 824.2h1.3v17.4h-1.3zM1079.2 824.2h1.3v17.4h-1.3zM1080.5 824.2h1.3v17.4h-1.3zM1081.8 824.2h1.3v17.4h-1.3zM1090.9 824.2h2.6v17.4h-2.6zM1101.3 824.2h1.3v17.4h-1.3zM1105.2 824.2h1.3v17.4h-1.3zM1127.3 824.2h1.3v17.4h-1.3zM1137.7 824.2h2.6v17.4h-2.6zM1141.6 824.2h2.6v17.4h-2.6zM1150.7 824.2h3.9v17.4h-3.9zM1170.2 824.2h2.6v17.4h-2.6zM1172.8 824.2h1.3v17.4h-1.3zM1175.4 824.2h2.6v17.4h-2.6zM1187.1 824.2h1.3v17.4h-1.3zM1197.5 824.2h1.3v17.4h-1.3zM1201.4 824.2h1.3v17.4h-1.3zM1213.1 824.2h1.3v17.4h-1.3zM1228.7 824.2h3.9v17.4h-3.9zM1240.4 824.2h1.3v17.4h-1.3zM1243.0 824.2h1.3v17.4h-1.3zM1248.2 824.2h1.3v17.4h-1.3zM1253.4 824.2h1.3v17.4h-1.3zM1261.2 824.2h1.3v17.4h-1.3zM1262.5 824.2h2.6v17.4h-2.6zM1265.1 824.2h1.3v17.4h-1.3zM1266.4 824.2h1.3v17.4h-1.3zM1275.5 824.2h0.5v17.4h-0.5zM1407.4 824.2h2.6v17.4h-2.6zM1441.2 824.2h1.3v17.4h-1.3zM1488.0 824.2h1.3v17.4h-1.3zM1517.9 824.2h1.3v17.4h-1.3zM1519.2 824.2h1.3v17.4h-1.3zM1553.0 824.2h2.6v17.4h-2.6zM1555.6 824.2h1.3v17.4h-1.3zM1556.9 824.2h1.3v17.4h-1.3zM1582.9 824.2h3.9v17.4h-3.9zM253.9 843.8h2.6v17.4h-2.6zM437.0 843.8h1.3v17.4h-1.3zM438.3 843.8h1.3v17.4h-1.3zM439.6 843.8h1.3v17.4h-1.3zM440.9 843.8h2.6v17.4h-2.6zM456.5 843.8h1.3v17.4h-1.3zM485.5 843.8h1.3v17.4h-1.3zM492.0 843.8h1.3v17.4h-1.3zM493.3 843.8h2.6v17.4h-2.6zM498.5 843.8h2.6v17.4h-2.6zM502.4 843.8h1.3v17.4h-1.3zM503.7 843.8h1.3v17.4h-1.3zM511.5 843.8h1.3v17.4h-1.3zM547.9 843.8h1.3v17.4h-1.3zM551.8 843.8h1.3v17.4h-1.3zM581.9 843.8h2.6v17.4h-2.6zM705.8 843.8h2.6v17.4h-2.6zM712.3 843.8h1.3v17.4h-1.3zM718.8 843.8h3.9v17.4h-3.9zM725.3 843.8h1.3v17.4h-1.3zM742.2 843.8h1.3v17.4h-1.3zM750.0 843.8h1.3v17.4h-1.3zM760.4 843.8h1.3v17.4h-1.3zM770.8 843.8h0.8v17.4h-0.8zM783.3 843.8h1.3v17.4h-1.3zM798.9 843.8h1.3v17.4h-1.3zM811.9 843.8h2.6v17.4h-2.6zM815.8 843.8h1.3v17.4h-1.3zM840.5 843.8h1.3v17.4h-1.3zM852.2 843.8h1.3v17.4h-1.3zM879.9 843.8h1.3v17.4h-1.3zM883.8 843.8h1.3v17.4h-1.3zM890.3 843.8h3.9v17.4h-3.9zM894.2 843.8h1.3v17.4h-1.3zM900.7 843.8h3.9v17.4h-3.9zM907.2 843.8h1.3v17.4h-1.3zM1150.8 843.8h1.3v17.4h-1.3zM1154.7 843.8h1.3v17.4h-1.3zM1156.0 843.8h1.3v17.4h-1.3zM1157.3 843.8h2.6v17.4h-2.6zM1161.2 843.8h3.9v17.4h-3.9zM1170.3 843.8h1.3v17.4h-1.3zM1366.2 843.8h1.3v17.4h-1.3zM1396.1 843.8h1.3v17.4h-1.3zM1409.1 843.8h1.3v17.4h-1.3zM1411.7 843.8h1.3v17.4h-1.3zM1431.3 843.8h3.9v17.4h-3.9zM1535.5 843.8h1.3v17.4h-1.3zM1547.2 843.8h1.3v17.4h-1.3zM1548.5 843.8h2.6v17.4h-2.6zM1551.1 843.8h1.3v17.4h-1.3zM1565.4 843.8h1.3v17.4h-1.3zM1571.9 843.8h1.3v17.4h-1.3zM224.9 863.4h1.3v17.4h-1.3zM251.4 863.4h1.3v17.4h-1.3zM259.2 863.4h1.3v17.4h-1.3zM451.3 863.4h2.6v17.4h-2.6zM482.5 863.4h1.3v17.4h-1.3zM489.0 863.4h3.9v17.4h-3.9zM572.3 863.4h1.3v17.4h-1.3zM574.9 863.4h1.3v17.4h-1.3zM596.3 863.4h3.9v17.4h-3.9zM604.1 863.4h1.3v17.4h-1.3zM605.4 863.4h1.3v17.4h-1.3zM611.9 863.4h1.3v17.4h-1.3zM618.4 863.4h1.3v17.4h-1.3zM641.8 863.4h1.3v17.4h-1.3zM693.6 863.4h2.6v17.4h-2.6zM700.1 863.4h2.6v17.4h-2.6zM702.7 863.4h1.3v17.4h-1.3zM707.9 863.4h3.9v17.4h-3.9zM720.9 863.4h2.6v17.4h-2.6zM724.8 863.4h1.3v17.4h-1.3zM736.5 863.4h1.3v17.4h-1.3zM768.9 863.4h1.3v17.4h-1.3zM774.1 863.4h1.3v17.4h-1.3zM780.6 863.4h1.3v17.4h-1.3zM1213.4 863.4h1.3v17.4h-1.3zM1218.6 863.4h1.3v17.4h-1.3zM1219.9 863.4h1.3v17.4h-1.3zM1223.8 863.4h1.3v17.4h-1.3zM1229.0 863.4h2.6v17.4h-2.6zM1326.0 863.4h2.6v17.4h-2.6zM1488.7 863.4h1.3v17.4h-1.3zM1492.6 863.4h2.6v17.4h-2.6zM1496.5 863.4h1.3v17.4h-1.3zM1497.8 863.4h2.6v17.4h-2.6zM1508.2 863.4h1.3v17.4h-1.3zM1537.3 863.4h2.6v17.4h-2.6zM1550.3 863.4h1.3v17.4h-1.3zM461.0 883.0h1.3v17.4h-1.3zM477.9 883.0h2.6v17.4h-2.6zM483.1 883.0h3.9v17.4h-3.9zM493.5 883.0h1.3v17.4h-1.3zM501.3 883.0h2.6v17.4h-2.6zM541.3 883.0h1.3v17.4h-1.3zM549.1 883.0h1.3v17.4h-1.3zM563.0 883.0h1.3v17.4h-1.3zM585.8 883.0h2.6v17.4h-2.6zM591.0 883.0h2.6v17.4h-2.6zM598.8 883.0h1.3v17.4h-1.3zM600.1 883.0h1.3v17.4h-1.3zM624.8 883.0h1.3v17.4h-1.3zM627.4 883.0h1.3v17.4h-1.3zM633.9 883.0h1.3v17.4h-1.3zM708.6 883.0h1.3v17.4h-1.3zM720.3 883.0h2.6v17.4h-2.6zM737.2 883.0h1.3v17.4h-1.3zM751.5 883.0h1.3v17.4h-1.3zM752.8 883.0h1.3v17.4h-1.3zM755.4 883.0h1.3v17.4h-1.3zM759.3 883.0h1.3v17.4h-1.3zM768.4 883.0h1.3v17.4h-1.3zM1161.2 883.0h2.6v17.4h-2.6zM1409.0 883.0h1.3v17.4h-1.3zM1414.2 883.0h1.3v17.4h-1.3zM1415.5 883.0h1.1v17.4h-1.1zM1478.2 883.0h1.3v17.4h-1.3zM1479.5 883.0h1.3v17.4h-1.3zM1487.3 883.0h1.3v17.4h-1.3zM1491.2 883.0h2.6v17.4h-2.6zM1496.4 883.0h1.3v17.4h-1.3zM1499.0 883.0h3.9v17.4h-3.9zM1502.9 883.0h1.3v17.4h-1.3zM1510.7 883.0h0.7v17.4h-0.7zM1521.8 883.0h1.3v17.4h-1.3zM1529.6 883.0h1.3v17.4h-1.3zM1552.8 883.0h1.3v17.4h-1.3zM1554.1 883.0h2.6v17.4h-2.6zM1558.0 883.0h1.1v17.4h-1.1z" fill="#232323"/>
<path d="M282.7 765.4h1.3v17.4h-1.3zM298.3 765.4h1.3v17.4h-1.3zM390.6 765.4h3.9v17.4h-3.9zM394.5 765.4h1.3v17.4h-1.3zM401.0 765.4h2.6v17.4h-2.6zM408.8 765.4h1.3v17.4h-1.3zM443.9 765.4h3.9v17.4h-3.9zM471.2 765.4h1.3v17.4h-1.3zM485.5 765.4h1.3v17.4h-1.3zM537.5 765.4h1.3v17.4h-1.3zM728.9 765.4h3.9v17.4h-3.9zM749.7 765.4h1.3v17.4h-1.3zM840.7 765.4h1.3v17.4h-1.3zM905.7 765.4h1.3v17.4h-1.3zM917.4 765.4h1.3v17.4h-1.3zM918.7 765.4h1.3v17.4h-1.3zM951.2 765.4h1.3v17.4h-1.3zM952.5 765.4h1.3v17.4h-1.3zM1027.9 765.4h1.3v17.4h-1.3zM1052.6 765.4h1.3v17.4h-1.3zM1118.9 765.4h1.3v17.4h-1.3zM1171.4 765.4h3.9v17.4h-3.9zM1175.3 765.4h2.6v17.4h-2.6zM1181.8 765.4h1.3v17.4h-1.3zM1325.4 765.4h2.6v17.4h-2.6zM1338.4 765.4h1.3v17.4h-1.3zM1360.5 765.4h1.3v17.4h-1.3zM1441.1 765.4h1.3v17.4h-1.3zM1491.8 765.4h1.3v17.4h-1.3zM464.0 785.0h1.3v17.4h-1.3zM473.1 785.0h2.6v17.4h-2.6zM518.4 785.0h2.6v17.4h-2.6zM928.5 785.0h1.3v17.4h-1.3zM1162.8 785.0h1.3v17.4h-1.3zM903.5 804.6h1.3v17.4h-1.3zM929.5 804.6h2.6v17.4h-2.6zM936.0 804.6h3.9v17.4h-3.9zM615.6 824.2h1.3v17.4h-1.3zM645.5 824.2h3.9v17.4h-3.9zM914.2 824.2h1.3v17.4h-1.3zM919.4 843.8h2.6v17.4h-2.6zM925.9 843.8h1.3v17.4h-1.3zM1502.9 843.8h1.3v17.4h-1.3zM1338.8 863.4h1.3v17.4h-1.3zM908.9 883.0h1.3v17.4h-1.3zM920.6 883.0h1.3v17.4h-1.3zM1268.0 883.0h1.3v17.4h-1.3zM1269.3 883.0h1.3v17.4h-1.3z" fill="#282828"/>
<path d="M481.6 785.0h1.3v17.4h-1.3zM482.9 785.0h2.6v17.4h-2.6zM489.4 785.0h1.3v17.4h-1.3zM494.6 785.0h3.9v17.4h-3.9zM512.0 785.0h1.3v17.4h-1.3zM656.4 785.0h2.6v17.4h-2.6zM665.5 785.0h1.3v17.4h-1.3zM679.8 785.0h2.6v17.4h-2.6zM744.8 785.0h2.6v17.4h-2.6zM774.7 785.0h1.3v17.4h-1.3zM776.0 785.0h2.6v17.4h-2.6zM1127.3 785.0h1.3v17.4h-1.3zM1140.3 785.0h2.6v17.4h-2.6zM1243.9 785.0h1.3v17.4h-1.3zM1249.1 785.0h1.3v17.4h-1.3zM1251.7 785.0h2.6v17.4h-2.6zM1267.3 785.0h2.6v17.4h-2.6zM1293.3 785.0h2.6v17.4h-2.6zM1365.0 785.0h2.6v17.4h-2.6zM1372.8 785.0h1.3v17.4h-1.3zM1407.9 785.0h1.3v17.4h-1.3zM1411.8 785.0h1.3v17.4h-1.3zM1414.4 785.0h3.9v17.4h-3.9zM1433.9 785.0h1.3v17.4h-1.3zM1476.3 785.0h1.3v17.4h-1.3zM1520.5 785.0h2.6v17.4h-2.6zM1523.1 785.0h1.3v17.4h-1.3zM1524.4 785.0h1.3v17.4h-1.3zM1562.1 785.0h3.9v17.4h-3.9zM1584.2 785.0h2.6v17.4h-2.6zM253.4 804.6h1.3v17.4h-1.3zM256.0 804.6h1.3v17.4h-1.3zM257.3 804.6h1.3v17.4h-1.3zM266.4 804.6h2.6v17.4h-2.6zM289.8 804.6h2.6v17.4h-2.6zM297.6 804.6h1.3v17.4h-1.3zM322.3 804.6h1.3v17.4h-1.3zM340.5 804.6h3.9v17.4h-3.9zM344.4 804.6h1.3v17.4h-1.3zM362.6 804.6h1.3v17.4h-1.3zM366.5 804.6h1.3v17.4h-1.3zM369.1 804.6h3.9v17.4h-3.9zM374.3 804.6h1.3v17.4h-1.3zM375.6 804.6h1.3v17.4h-1.3zM396.4 804.6h2.6v17.4h-2.6zM424.9 804.6h1.3v17.4h-1.3zM445.7 804.6h2.6v17.4h-2.6zM476.9 804.6h2.1v17.4h-2.1zM483.6 804.6h1.3v17.4h-1.3zM539.5 804.6h2.6v17.4h-2.6zM664.3 804.6h2.6v17.4h-2.6zM677.3 804.6h1.3v17.4h-1.3zM698.8 804.6h1.3v17.4h-1.3zM704.0 804.6h2.6v17.4h-2.6zM706.6 804.6h0.4v17.4h-0.4zM756.4 804.6h1.3v17.4h-1.3zM791.5 804.6h1.3v17.4h-1.3zM794.1 804.6h1.3v17.4h-1.3zM800.6 804.6h1.3v17.4h-1.3zM810.8 804.6h2.6v17.4h-2.6zM814.7 804.6h2.6v17.4h-2.6zM817.3 804.6h1.3v17.4h-1.3zM818.6 804.6h1.3v17.4h-1.3zM829.0 804.6h1.3v17.4h-1.3zM831.6 804.6h1.3v17.4h-1.3zM842.0 804.6h2.6v17.4h-2.6zM844.6 804.6h1.3v17.4h-1.3zM879.7 804.6h1.3v17.4h-1.3zM899.2 804.6h1.3v17.4h-1.3zM945.5 804.6h1.3v17.4h-1.3zM950.7 804.6h1.3v17.4h-1.3zM972.8 804.6h2.6v17.4h-2.6zM980.6 804.6h1.3v17.4h-1.3zM991.0 804.6h2.6v17.4h-2.6zM993.6 804.6h2.6v17.4h-2.6zM997.5 804.6h1.3v17.4h-1.3zM1001.4 804.6h2.6v17.4h-2.6zM1024.8 804.6h1.3v17.4h-1.3zM1039.1 804.6h1.3v17.4h-1.3zM1052.1 804.6h1.3v17.4h-1.3zM1070.3 804.6h2.6v17.4h-2.6zM1080.7 804.6h2.6v17.4h-2.6zM1084.6 804.6h1.3v17.4h-1.3zM1109.3 804.6h1.3v17.4h-1.3zM1132.7 804.6h1.3v17.4h-1.3zM1140.5 804.6h1.3v17.4h-1.3zM1154.8 804.6h1.3v17.4h-1.3zM1258.2 804.6h1.3v17.4h-1.3zM1268.6 804.6h1.3v17.4h-1.3zM1384.0 804.6h2.6v17.4h-2.6zM1389.2 804.6h2.6v17.4h-2.6zM1394.4 804.6h1.3v17.4h-1.3zM1408.7 804.6h2.6v17.4h-2.6zM1439.9 804.6h1.3v17.4h-1.3zM1459.4 804.6h1.3v17.4h-1.3zM1516.6 804.6h1.3v17.4h-1.3zM1562.1 804.6h2.6v17.4h-2.6zM249.5 824.2h1.3v17.4h-1.3zM253.4 824.2h1.3v17.4h-1.3zM257.3 824.2h1.3v17.4h-1.3zM269.0 824.2h2.6v17.4h-2.6zM284.6 824.2h1.3v17.4h-1.3zM291.1 824.2h1.3v17.4h-1.3zM300.2 824.2h1.3v17.4h-1.3zM358.7 824.2h2.6v17.4h-2.6zM361.3 824.2h1.3v17.4h-1.3zM379.5 824.2h2.6v17.4h-2.6zM398.2 824.2h1.3v17.4h-1.3zM399.5 824.2h1.3v17.4h-1.3zM445.0 824.2h1.3v17.4h-1.3zM461.4 824.2h1.3v17.4h-1.3zM470.5 824.2h1.3v17.4h-1.3zM492.6 824.2h1.3v17.4h-1.3zM526.4 824.2h1.3v17.4h-1.3zM569.3 824.2h0.9v17.4h-0.9zM711.1 824.2h1.3v17.4h-1.3zM742.3 824.2h1.3v17.4h-1.3zM743.6 824.2h1.3v17.4h-1.3zM767.0 824.2h1.3v17.4h-1.3zM794.3 824.2h0.7v17.4h-0.7zM958.5 824.2h1.3v17.4h-1.3zM963.7 824.2h1.3v17.4h-1.3zM972.8 824.2h1.3v17.4h-1.3zM981.9 824.2h1.3v17.4h-1.3zM993.4 824.2h1.3v17.4h-1.3zM1044.1 824.2h1.3v17.4h-1.3zM1057.1 824.2h1.3v17.4h-1.3zM1059.7 824.2h1.3v17.4h-1.3zM1062.3 824.2h1.3v17.4h-1.3zM1071.4 824.2h1.3v17.4h-1.3zM1075.3 824.2h1.3v17.4h-1.3zM1094.8 824.2h2.6v17.4h-2.6zM1107.8 824.2h1.3v17.4h-1.3zM1133.8 824.2h1.3v17.4h-1.3zM1140.3 824.2h1.3v17.4h-1.3zM1144.2 824.2h3.9v17.4h-3.9zM1154.6 824.2h1.3v17.4h-1.3zM1168.9 824.2h1.3v17.4h-1.3zM1181.9 824.2h1.3v17.4h-1.3zM1184.5 824.2h1.3v17.4h-1.3zM1193.6 824.2h1.3v17.4h-1.3zM1198.8 824.2h1.3v17.4h-1.3zM1200.1 824.2h1.3v17.4h-1.3zM1202.7 824.2h1.3v17.4h-1.3zM1207.9 824.2h1.3v17.4h-1.3zM1217.0 824.2h1.3v17.4h-1.3zM1220.9 824.2h1.3v17.4h-1.3zM1250.8 824.2h1.3v17.4h-1.3zM1258.6 824.2h1.3v17.4h-1.3zM1397.0 824.2h2.6v17.4h-2.6zM1400.9 824.2h3.9v17.4h-3.9zM1419.1 824.2h1.3v17.4h-1.3zM1430.8 824.2h2.6v17.4h-2.6zM1436.0 824.2h2.6v17.4h-2.6zM1472.4 824.2h1.3v17.4h-1.3zM1508.8 824.2h2.6v17.4h-2.6zM1536.1 824.2h1.3v17.4h-1.3zM1537.4 824.2h2.6v17.4h-2.6zM1541.3 824.2h1.3v17.4h-1.3zM286.4 843.8h2.6v17.4h-2.6zM435.7 843.8h1.3v17.4h-1.3zM459.1 843.8h1.3v17.4h-1.3zM470.8 843.8h1.3v17.4h-1.3zM484.2 843.8h1.3v17.4h-1.3zM488.1 843.8h1.3v17.4h-1.3zM505.0 843.8h2.6v17.4h-2.6zM515.4 843.8h2.6v17.4h-2.6zM518.0 843.8h2.6v17.4h-2.6zM527.1 843.8h3.9v17.4h-3.9zM538.8 843.8h1.3v17.4h-1.3zM556.3 843.8h1.3v17.4h-1.3zM558.9 843.8h1.3v17.4h-1.3zM569.3 843.8h0.7v17.4h-0.7zM585.8 843.8h1.3v17.4h-1.3zM620.9 843.8h1.3v17.4h-1.3zM631.3 843.8h2.6v17.4h-2.6zM722.7 843.8h1.3v17.4h-1.3zM724.0 843.8h1.3v17.4h-1.3zM763.0 843.8h1.3v17.4h-1.3zM1153.4 843.8h1.3v17.4h-1.3zM1167.7 843.8h1.3v17.4h-1.3zM1172.9 843.8h1.3v17.4h-1.3zM1353.2 843.8h3.9v17.4h-3.9zM1367.5 843.8h2.6v17.4h-2.6zM1374.0 843.8h1.3v17.4h-1.3zM1383.1 843.8h2.6v17.4h-2.6zM1390.9 843.8h1.3v17.4h-1.3zM1405.2 843.8h1.3v17.4h-1.3zM1413.0 843.8h2.6v17.4h-2.6zM1521.8 843.8h1.3v17.4h-1.3zM1524.4 843.8h1.3v17.4h-1.3zM1534.2 843.8h1.3v17.4h-1.3zM1536.8 843.8h1.3v17.4h-1.3zM1552.4 843.8h1.3v17.4h-1.3zM1566.7 843.8h1.3v17.4h-1.3zM446.1 863.4h3.9v17.4h-3.9zM476.0 863.4h2.6v17.4h-2.6zM494.2 863.4h1.3v17.4h-1.3zM495.5 863.4h3.9v17.4h-3.9zM499.4 863.4h2.6v17.4h-2.6zM592.4 863.4h3.9v17.4h-3.9zM600.2 863.4h1.3v17.4h-1.3zM606.7 863.4h1.3v17.4h-1.3zM609.3 863.4h1.3v17.4h-1.3zM631.4 863.4h1.3v17.4h-1.3zM636.6 863.4h1.3v17.4h-1.3zM647.0 863.4h1.1v17.4h-1.1zM698.8 863.4h1.3v17.4h-1.3zM704.0 863.4h1.3v17.4h-1.3zM728.7 863.4h1.3v17.4h-1.3zM731.3 863.4h1.3v17.4h-1.3zM737.8 863.4h3.9v17.4h-3.9zM752.0 863.4h2.6v17.4h-2.6zM1475.7 863.4h1.3v17.4h-1.3zM1480.9 863.4h2.6v17.4h-2.6zM1487.4 863.4h1.3v17.4h-1.3zM1509.5 863.4h1.3v17.4h-1.3zM1546.4 863.4h1.3v17.4h-1.3zM584.5 883.0h1.3v17.4h-1.3zM594.9 883.0h1.3v17.4h-1.3zM623.5 883.0h1.3v17.4h-1.3zM626.1 883.0h1.3v17.4h-1.3zM643.0 883.0h1.3v17.4h-1.3zM739.8 883.0h1.3v17.4h-1.3zM746.3 883.0h1.3v17.4h-1.3zM748.9 883.0h2.6v17.4h-2.6zM1405.1 883.0h1.3v17.4h-1.3zM1504.2 883.0h2.6v17.4h-2.6zM1506.8 883.0h1.3v17.4h-1.3zM1508.1 883.0h1.3v17.4h-1.3zM1520.5 883.0h1.3v17.4h-1.3zM1533.5 883.0h1.3v17.4h-1.3zM1536.1 883.0h2.6v17.4h-2.6zM1545.2 883.0h1.3v17.4h-1.3z" fill="#464646"/>
<path d="M477.7 765.4h3.9v17.4h-3.9zM712.0 765.4h3.9v17.4h-3.9zM849.8 765.4h1.3v17.4h-1.3zM870.6 765.4h1.3v17.4h-1.3zM1076.0 765.4h2.6v17.4h-2.6zM1213.0 765.4h2.6v17.4h-2.6zM1318.9 765.4h1.3v17.4h-1.3zM1347.5 765.4h1.3v17.4h-1.3zM1406.0 765.4h1.3v17.4h-1.3zM1434.6 765.4h1.3v17.4h-1.3zM1448.9 765.4h1.3v17.4h-1.3zM1508.7 765.4h1.3v17.4h-1.3zM1534.7 765.4h2.6v17.4h-2.6zM552.2 785.0h1.3v17.4h-1.3zM933.7 785.0h1.3v17.4h-1.3zM932.1 804.6h1.3v17.4h-1.3zM932.4 824.2h1.3v17.4h-1.3z" fill="#505050"/>
<path d="M232.0 785.0h1.3v17.4h-1.3zM243.7 785.0h2.6v17.4h-2.6zM267.1 785.0h1.3v17.4h-1.3zM278.8 785.0h2.6v17.4h-2.6zM323.0 785.0h1.3v17.4h-1.3zM337.3 785.0h1.3v17.4h-1.3zM341.2 785.0h1.3v17.4h-1.3zM350.3 785.0h1.3v17.4h-1.3zM354.2 785.0h1.3v17.4h-1.3zM367.2 785.0h1.3v17.4h-1.3zM368.5 785.0h1.3v17.4h-1.3zM372.4 785.0h1.3v17.4h-1.3zM396.7 785.0h1.3v17.4h-1.3zM403.2 785.0h2.6v17.4h-2.6zM418.8 785.0h1.3v17.4h-1.3zM420.1 785.0h1.3v17.4h-1.3zM444.8 785.0h1.3v17.4h-1.3zM490.7 785.0h3.9v17.4h-3.9zM499.8 785.0h3.9v17.4h-3.9zM510.2 785.0h1.3v17.4h-1.3zM571.3 785.0h1.3v17.4h-1.3zM573.9 785.0h2.6v17.4h-2.6zM580.4 785.0h0.6v17.4h-0.6zM586.2 785.0h2.6v17.4h-2.6zM596.6 785.0h1.3v17.4h-1.3zM613.5 785.0h2.6v17.4h-2.6zM622.6 785.0h1.3v17.4h-1.3zM652.5 785.0h1.3v17.4h-1.3zM692.8 785.0h2.6v17.4h-2.6zM726.6 785.0h1.3v17.4h-1.3zM727.9 785.0h1.3v17.4h-1.3zM755.2 785.0h1.3v17.4h-1.3zM765.6 785.0h2.6v17.4h-2.6zM791.1 785.0h2.6v17.4h-2.6zM793.7 785.0h1.3v17.4h-1.3zM801.5 785.0h1.3v17.4h-1.3zM806.7 785.0h1.3v17.4h-1.3zM809.3 785.0h1.3v17.4h-1.3zM819.7 785.0h2.6v17.4h-2.6zM830.1 785.0h2.6v17.4h-2.6zM849.6 785.0h1.3v17.4h-1.3zM874.3 785.0h2.6v17.4h-2.6zM879.5 785.0h1.3v17.4h-1.3zM882.1 785.0h1.3v17.4h-1.3zM893.8 785.0h1.3v17.4h-1.3zM944.2 785.0h1.3v17.4h-1.3zM945.5 785.0h1.3v17.4h-1.3zM971.5 785.0h1.3v17.4h-1.3zM972.8 785.0h1.3v17.4h-1.3zM976.7 785.0h1.3v17.4h-1.3zM994.9 785.0h1.3v17.4h-1.3zM997.5 785.0h2.6v17.4h-2.6zM1033.9 785.0h1.3v17.4h-1.3zM1039.1 785.0h1.3v17.4h-1.3zM1057.3 785.0h1.3v17.4h-1.3zM1071.6 785.0h1.3v17.4h-1.3zM1075.5 785.0h1.3v17.4h-1.3zM1083.3 785.0h2.6v17.4h-2.6zM1087.2 785.0h1.3v17.4h-1.3zM1109.3 785.0h3.9v17.4h-3.9zM1121.0 785.0h1.3v17.4h-1.3zM1192.3 785.0h1.3v17.4h-1.3zM1200.1 785.0h1.3v17.4h-1.3zM1205.3 785.0h1.3v17.4h-1.3zM1206.6 785.0h2.6v17.4h-2.6zM1210.5 785.0h1.3v17.4h-1.3zM1213.1 785.0h1.3v17.4h-1.3zM1214.4 785.0h1.3v17.4h-1.3zM1222.2 785.0h1.3v17.4h-1.3zM1236.5 785.0h1.3v17.4h-1.3zM1245.2 785.0h1.3v17.4h-1.3zM1298.5 785.0h1.3v17.4h-1.3zM1303.7 785.0h1.3v17.4h-1.3zM1308.9 785.0h2.6v17.4h-2.6zM1322.4 785.0h2.6v17.4h-2.6zM1326.0 785.0h2.6v17.4h-2.6zM1404.0 785.0h2.6v17.4h-2.6zM1446.5 785.0h2.6v17.4h-2.6zM1533.5 785.0h1.3v17.4h-1.3zM1541.3 785.0h1.3v17.4h-1.3zM1542.6 785.0h1.3v17.4h-1.3zM1577.7 785.0h3.9v17.4h-3.9zM216.4 804.6h1.3v17.4h-1.3zM239.6 804.6h3.4v17.4h-3.4zM262.5 804.6h2.6v17.4h-2.6zM276.8 804.6h1.3v17.4h-1.3zM309.3 804.6h1.3v17.4h-1.3zM353.5 804.6h1.3v17.4h-1.3zM356.1 804.6h1.3v17.4h-1.3zM363.9 804.6h2.6v17.4h-2.6zM382.1 804.6h1.3v17.4h-1.3zM391.2 804.6h1.3v17.4h-1.3zM395.1 804.6h1.3v17.4h-1.3zM452.2 804.6h1.3v17.4h-1.3zM462.6 804.6h1.3v17.4h-1.3zM536.9 804.6h1.3v17.4h-1.3zM574.6 804.6h1.3v17.4h-1.3zM585.0 804.6h1.3v17.4h-1.3zM596.7 804.6h1.3v17.4h-1.3zM700.1 804.6h1.3v17.4h-1.3zM708.3 804.6h1.3v17.4h-1.3zM875.8 804.6h1.3v17.4h-1.3zM878.4 804.6h1.3v17.4h-1.3zM941.6 804.6h3.9v17.4h-3.9zM952.0 804.6h1.3v17.4h-1.3zM953.3 804.6h1.3v17.4h-1.3zM958.5 804.6h1.3v17.4h-1.3zM971.5 804.6h1.3v17.4h-1.3zM981.9 804.6h1.3v17.4h-1.3zM1000.1 804.6h1.3v17.4h-1.3zM1019.6 804.6h2.6v17.4h-2.6zM1053.4 804.6h1.3v17.4h-1.3zM1079.4 804.6h1.3v17.4h-1.3zM1102.8 804.6h1.3v17.4h-1.3zM1122.3 804.6h2.6v17.4h-2.6zM1124.9 804.6h2.6v17.4h-2.6zM1127.5 804.6h2.6v17.4h-2.6zM1130.1 804.6h2.6v17.4h-2.6zM1134.0 804.6h1.3v17.4h-1.3zM1137.9 804.6h2.6v17.4h-2.6zM1148.3 804.6h1.3v17.4h-1.3zM1150.9 804.6h1.3v17.4h-1.3zM1157.4 804.6h1.3v17.4h-1.3zM1175.8 804.6h1.3v17.4h-1.3zM1187.5 804.6h2.6v17.4h-2.6zM1201.8 804.6h3.9v17.4h-3.9zM1205.7 804.6h1.3v17.4h-1.3zM1231.7 804.6h3.9v17.4h-3.9zM1235.6 804.6h1.3v17.4h-1.3zM1251.7 804.6h2.6v17.4h-2.6zM1254.3 804.6h1.3v17.4h-1.3zM1333.3 804.6h1.3v17.4h-1.3zM1351.5 804.6h1.3v17.4h-1.3zM1443.8 804.6h2.6v17.4h-2.6zM1452.9 804.6h1.3v17.4h-1.3zM1471.1 804.6h1.3v17.4h-1.3zM1484.1 804.6h2.6v17.4h-2.6zM1494.5 804.6h1.3v17.4h-1.3zM1495.8 804.6h2.6v17.4h-2.6zM1529.6 804.6h1.3v17.4h-1.3zM1573.8 804.6h1.3v17.4h-1.3zM222.9 824.2h1.3v17.4h-1.3zM225.5 824.2h0.5v17.4h-0.5zM244.3 824.2h2.6v17.4h-2.6zM262.5 824.2h1.3v17.4h-1.3zM283.3 824.2h1.3v17.4h-1.3zM288.5 824.2h2.6v17.4h-2.6zM311.9 824.2h1.3v17.4h-1.3zM321.0 824.2h1.3v17.4h-1.3zM337.9 824.2h1.3v17.4h-1.3zM345.7 824.2h3.9v17.4h-3.9zM350.9 824.2h1.3v17.4h-1.3zM356.1 824.2h1.3v17.4h-1.3zM362.6 824.2h2.6v17.4h-2.6zM371.7 824.2h1.3v17.4h-1.3zM384.7 824.2h1.3v17.4h-1.3zM400.8 824.2h1.3v17.4h-1.3zM404.7 824.2h1.3v17.4h-1.3zM412.5 824.2h1.3v17.4h-1.3zM428.1 824.2h1.3v17.4h-1.3zM450.2 824.2h0.8v17.4h-0.8zM464.0 824.2h1.3v17.4h-1.3zM474.4 824.2h1.3v17.4h-1.3zM496.5 824.2h2.6v17.4h-2.6zM679.9 824.2h1.3v17.4h-1.3zM699.4 824.2h1.3v17.4h-1.3zM700.7 824.2h1.3v17.4h-1.3zM703.3 824.2h1.3v17.4h-1.3zM712.4 824.2h1.3v17.4h-1.3zM746.2 824.2h3.9v17.4h-3.9zM754.0 824.2h3.9v17.4h-3.9zM790.4 824.2h2.6v17.4h-2.6zM796.3 824.2h1.3v17.4h-1.3zM800.2 824.2h1.3v17.4h-1.3zM808.0 824.2h1.3v17.4h-1.3zM821.0 824.2h2.6v17.4h-2.6zM832.7 824.2h2.6v17.4h-2.6zM835.3 824.2h2.6v17.4h-2.6zM840.5 824.2h1.3v17.4h-1.3zM843.1 824.2h1.3v17.4h-1.3zM873.0 824.2h3.9v17.4h-3.9zM876.9 824.2h1.3v17.4h-1.3zM906.8 824.2h1.3v17.4h-1.3zM941.6 824.2h2.6v17.4h-2.6zM955.9 824.2h2.6v17.4h-2.6zM961.1 824.2h1.3v17.4h-1.3zM965.0 824.2h1.3v17.4h-1.3zM976.7 824.2h1.3v17.4h-1.3zM985.8 824.2h1.1v17.4h-1.1zM1028.5 824.2h1.3v17.4h-1.3zM1038.9 824.2h1.3v17.4h-1.3zM1048.0 824.2h1.3v17.4h-1.3zM1066.2 824.2h1.3v17.4h-1.3zM1068.8 824.2h2.6v17.4h-2.6zM1089.6 824.2h1.3v17.4h-1.3zM1093.5 824.2h1.3v17.4h-1.3zM1102.6 824.2h1.3v17.4h-1.3zM1122.1 824.2h2.6v17.4h-2.6zM1128.6 824.2h2.6v17.4h-2.6zM1148.1 824.2h2.6v17.4h-2.6zM1214.4 824.2h1.3v17.4h-1.3zM1222.2 824.2h2.6v17.4h-2.6zM1232.6 824.2h3.9v17.4h-3.9zM1246.9 824.2h1.3v17.4h-1.3zM1249.5 824.2h1.3v17.4h-1.3zM1254.7 824.2h1.3v17.4h-1.3zM1257.3 824.2h1.3v17.4h-1.3zM1394.4 824.2h1.3v17.4h-1.3zM1452.9 824.2h1.3v17.4h-1.3zM1495.8 824.2h1.3v17.4h-1.3zM1506.2 824.2h2.6v17.4h-2.6zM1562.1 824.2h2.6v17.4h-2.6zM248.7 843.8h2.6v17.4h-2.6zM278.6 843.8h2.6v17.4h-2.6zM282.5 843.8h1.3v17.4h-1.3zM472.1 843.8h1.3v17.4h-1.3zM486.8 843.8h1.3v17.4h-1.3zM507.6 843.8h1.3v17.4h-1.3zM520.6 843.8h2.6v17.4h-2.6zM531.0 843.8h1.3v17.4h-1.3zM542.7 843.8h1.3v17.4h-1.3zM564.1 843.8h1.3v17.4h-1.3zM565.4 843.8h1.3v17.4h-1.3zM566.7 843.8h1.3v17.4h-1.3zM573.9 843.8h2.6v17.4h-2.6zM604.0 843.8h1.3v17.4h-1.3zM613.1 843.8h1.3v17.4h-1.3zM639.1 843.8h1.3v17.4h-1.3zM652.1 843.8h0.4v17.4h-0.4zM730.5 843.8h1.3v17.4h-1.3zM734.4 843.8h2.6v17.4h-2.6zM737.0 843.8h1.3v17.4h-1.3zM738.3 843.8h1.3v17.4h-1.3zM739.6 843.8h1.3v17.4h-1.3zM746.1 843.8h2.6v17.4h-2.6zM755.2 843.8h1.3v17.4h-1.3zM761.7 843.8h1.3v17.4h-1.3zM775.5 843.8h1.3v17.4h-1.3zM784.6 843.8h2.6v17.4h-2.6zM818.4 843.8h3.9v17.4h-3.9zM837.9 843.8h1.3v17.4h-1.3zM848.3 843.8h3.9v17.4h-3.9zM896.8 843.8h2.6v17.4h-2.6zM948.1 843.8h1.3v17.4h-1.3zM1169.0 843.8h1.3v17.4h-1.3zM1364.9 843.8h1.3v17.4h-1.3zM1385.7 843.8h1.3v17.4h-1.3zM1392.2 843.8h3.9v17.4h-3.9zM1410.4 843.8h1.3v17.4h-1.3zM1415.6 843.8h1.3v17.4h-1.3zM1420.9 843.8h1.3v17.4h-1.3zM1422.2 843.8h1.3v17.4h-1.3zM1445.2 843.8h1.3v17.4h-1.3zM1446.5 843.8h2.6v17.4h-2.6zM1467.3 843.8h2.6v17.4h-2.6zM1472.5 843.8h1.3v17.4h-1.3zM1473.8 843.8h1.3v17.4h-1.3zM1514.0 843.8h1.3v17.4h-1.3zM1525.7 843.8h2.6v17.4h-2.6zM1528.3 843.8h1.3v17.4h-1.3zM1529.6 843.8h0.7v17.4h-0.7zM1545.9 843.8h1.3v17.4h-1.3zM1564.1 843.8h1.3v17.4h-1.3zM1568.0 843.8h2.6v17.4h-2.6zM226.2 863.4h2.6v17.4h-2.6zM242.3 863.4h1.3v17.4h-1.3zM252.7 863.4h1.3v17.4h-1.3zM269.6 863.4h2.2v17.4h-2.2zM450.0 863.4h1.3v17.4h-1.3zM468.2 863.4h1.3v17.4h-1.3zM479.9 863.4h1.3v17.4h-1.3zM483.8 863.4h1.3v17.4h-1.3zM560.6 863.4h1.3v17.4h-1.3zM571.0 863.4h1.3v17.4h-1.3zM614.5 863.4h1.3v17.4h-1.3zM617.1 863.4h1.3v17.4h-1.3zM626.2 863.4h2.6v17.4h-2.6zM632.7 863.4h2.6v17.4h-2.6zM706.6 863.4h1.3v17.4h-1.3zM713.1 863.4h1.3v17.4h-1.3zM730.0 863.4h1.3v17.4h-1.3zM745.0 863.4h1.3v17.4h-1.3zM750.2 863.4h1.3v17.4h-1.3zM757.2 863.4h1.3v17.4h-1.3zM778.0 863.4h1.3v17.4h-1.3zM1210.8 863.4h1.3v17.4h-1.3zM1214.7 863.4h1.3v17.4h-1.3zM1222.5 863.4h1.3v17.4h-1.3zM1319.5 863.4h1.3v17.4h-1.3zM1324.7 863.4h1.3v17.4h-1.3zM1332.5 863.4h1.3v17.4h-1.3zM1333.8 863.4h1.3v17.4h-1.3zM1474.4 863.4h1.3v17.4h-1.3zM1477.0 863.4h1.3v17.4h-1.3zM1501.7 863.4h1.3v17.4h-1.3zM1511.4 863.4h1.3v17.4h-1.3zM1512.7 863.4h1.3v17.4h-1.3zM1524.4 863.4h1.3v17.4h-1.3zM450.6 883.0h1.3v17.4h-1.3zM454.5 883.0h3.9v17.4h-3.9zM458.4 883.0h2.6v17.4h-2.6zM462.3 883.0h1.3v17.4h-1.3zM463.6 883.0h1.3v17.4h-1.3zM546.5 883.0h1.3v17.4h-1.3zM570.8 883.0h1.3v17.4h-1.3zM574.7 883.0h1.3v17.4h-1.3zM576.0 883.0h0.7v17.4h-0.7zM583.2 883.0h1.3v17.4h-1.3zM588.4 883.0h1.3v17.4h-1.3zM596.2 883.0h2.6v17.4h-2.6zM610.5 883.0h1.3v17.4h-1.3zM639.1 883.0h2.6v17.4h-2.6zM704.7 883.0h1.3v17.4h-1.3zM706.0 883.0h2.6v17.4h-2.6zM724.2 883.0h1.3v17.4h-1.3zM734.6 883.0h1.3v17.4h-1.3zM741.1 883.0h2.6v17.4h-2.6zM761.9 883.0h1.3v17.4h-1.3zM763.2 883.0h2.6v17.4h-2.6zM765.8 883.0h1.3v17.4h-1.3zM769.7 883.0h1.9v17.4h-1.9zM1153.4 883.0h2.6v17.4h-2.6zM1157.3 883.0h1.3v17.4h-1.3zM1167.7 883.0h2.6v17.4h-2.6zM1480.8 883.0h3.9v17.4h-3.9zM1488.6 883.0h1.3v17.4h-1.3zM1495.1 883.0h1.3v17.4h-1.3zM1497.7 883.0h1.3v17.4h-1.3zM1511.4 883.0h1.3v17.4h-1.3zM1512.7 883.0h1.3v17.4h-1.3zM1530.9 883.0h2.6v17.4h-2.6zM1538.7 883.0h1.3v17.4h-1.3zM1543.9 883.0h1.3v17.4h-1.3zM1546.5 883.0h1.3v17.4h-1.3zM1549.1 883.0h1.1v17.4h-1.1z" fill="#6e6e6e"/>
<path d="M229.4 785.0h2.6v17.4h-2.6zM239.8 785.0h1.3v17.4h-1.3zM242.4 785.0h1.3v17.4h-1.3zM251.5 785.0h1.3v17.4h-1.3zM254.1 785.0h1.3v17.4h-1.3zM261.9 785.0h1.3v17.4h-1.3zM274.9 785.0h1.3v17.4h-1.3zM276.2 785.0h1.3v17.4h-1.3zM289.2 785.0h1.3v17.4h-1.3zM326.9 785.0h2.6v17.4h-2.6zM339.9 785.0h1.3v17.4h-1.3zM343.8 785.0h1.3v17.4h-1.3zM347.7 785.0h2.6v17.4h-2.6zM355.5 785.0h1.3v17.4h-1.3zM362.0 785.0h1.3v17.4h-1.3zM363.3 785.0h2.6v17.4h-2.6zM373.7 785.0h1.3v17.4h-1.3zM409.7 785.0h1.3v17.4h-1.3zM411.0 785.0h1.3v17.4h-1.3zM414.9 785.0h1.3v17.4h-1.3zM425.3 785.0h2.6v17.4h-2.6zM443.5 785.0h1.3v17.4h-1.3zM446.1 785.0h1.3v17.4h-1.3zM506.3 785.0h1.3v17.4h-1.3zM579.1 785.0h1.3v17.4h-1.3zM804.1 785.0h1.3v17.4h-1.3zM835.3 785.0h1.3v17.4h-1.3zM841.8 785.0h3.9v17.4h-3.9zM848.3 785.0h1.3v17.4h-1.3zM850.9 785.0h1.3v17.4h-1.3zM857.4 785.0h2.6v17.4h-2.6zM866.5 785.0h3.9v17.4h-3.9zM889.9 785.0h1.3v17.4h-1.3zM962.4 785.0h1.3v17.4h-1.3zM963.7 785.0h1.3v17.4h-1.3zM965.0 785.0h2.6v17.4h-2.6zM983.2 785.0h1.3v17.4h-1.3zM984.5 785.0h1.3v17.4h-1.3zM988.4 785.0h1.3v17.4h-1.3zM1002.7 785.0h1.3v17.4h-1.3zM1013.1 785.0h1.3v17.4h-1.3zM1026.1 785.0h1.3v17.4h-1.3zM1036.5 785.0h1.3v17.4h-1.3zM1044.3 785.0h2.6v17.4h-2.6zM1074.2 785.0h1.3v17.4h-1.3zM1078.1 785.0h1.3v17.4h-1.3zM1104.1 785.0h2.6v17.4h-2.6zM1122.3 785.0h1.3v17.4h-1.3zM1124.9 785.0h1.1v17.4h-1.1zM1132.5 785.0h1.3v17.4h-1.3zM1193.6 785.0h2.6v17.4h-2.6zM1201.4 785.0h1.3v17.4h-1.3zM1202.7 785.0h2.6v17.4h-2.6zM1219.6 785.0h1.3v17.4h-1.3zM1231.3 785.0h2.6v17.4h-2.6zM1235.2 785.0h1.3v17.4h-1.3zM1278.3 785.0h1.3v17.4h-1.3zM1314.6 785.0h2.6v17.4h-2.6zM1443.9 785.0h1.3v17.4h-1.3zM1449.1 785.0h1.3v17.4h-1.3zM217.7 804.6h1.3v17.4h-1.3zM224.2 804.6h1.3v17.4h-1.3zM229.4 804.6h1.3v17.4h-1.3zM233.3 804.6h1.3v17.4h-1.3zM234.6 804.6h1.3v17.4h-1.3zM249.5 804.6h1.3v17.4h-1.3zM269.0 804.6h1.3v17.4h-1.3zM275.5 804.6h1.3v17.4h-1.3zM278.1 804.6h1.3v17.4h-1.3zM279.4 804.6h1.3v17.4h-1.3zM296.3 804.6h1.3v17.4h-1.3zM313.2 804.6h2.6v17.4h-2.6zM323.6 804.6h1.3v17.4h-1.3zM357.4 804.6h1.3v17.4h-1.3zM358.7 804.6h1.3v17.4h-1.3zM691.0 804.6h2.6v17.4h-2.6zM694.9 804.6h1.3v17.4h-1.3zM804.0 804.6h1.3v17.4h-1.3zM806.6 804.6h2.9v17.4h-2.9zM830.3 804.6h1.3v17.4h-1.3zM881.0 804.6h1.3v17.4h-1.3zM988.4 804.6h1.3v17.4h-1.3zM1058.6 804.6h1.3v17.4h-1.3zM1065.1 804.6h1.3v17.4h-1.3zM1066.4 804.6h1.3v17.4h-1.3zM1075.5 804.6h1.3v17.4h-1.3zM1089.8 804.6h1.3v17.4h-1.3zM1173.2 804.6h1.3v17.4h-1.3zM1174.5 804.6h1.3v17.4h-1.3zM1220.0 804.6h2.6v17.4h-2.6zM1222.6 804.6h1.3v17.4h-1.3zM1223.9 804.6h1.3v17.4h-1.3zM1226.5 804.6h2.6v17.4h-2.6zM217.7 824.2h1.3v17.4h-1.3zM219.0 824.2h1.3v17.4h-1.3zM246.9 824.2h1.3v17.4h-1.3zM252.1 824.2h1.3v17.4h-1.3zM285.9 824.2h1.3v17.4h-1.3zM297.6 824.2h1.3v17.4h-1.3zM335.3 824.2h2.6v17.4h-2.6zM366.5 824.2h2.6v17.4h-2.6zM382.1 824.2h1.3v17.4h-1.3zM402.1 824.2h1.3v17.4h-1.3zM407.3 824.2h1.3v17.4h-1.3zM420.3 824.2h2.6v17.4h-2.6zM653.9 824.2h2.6v17.4h-2.6zM657.8 824.2h2.6v17.4h-2.6zM665.6 824.2h2.6v17.4h-2.6zM673.4 824.2h1.3v17.4h-1.3zM681.2 824.2h1.3v17.4h-1.3zM686.4 824.2h2.6v17.4h-2.6zM694.2 824.2h1.3v17.4h-1.3zM704.6 824.2h1.3v17.4h-1.3zM709.8 824.2h1.3v17.4h-1.3zM795.0 824.2h1.3v17.4h-1.3zM802.8 824.2h3.9v17.4h-3.9zM806.7 824.2h1.3v17.4h-1.3zM824.9 824.2h1.3v17.4h-1.3zM826.2 824.2h1.3v17.4h-1.3zM841.8 824.2h1.3v17.4h-1.3zM856.1 824.2h1.3v17.4h-1.3zM858.7 824.2h1.3v17.4h-1.3zM886.0 824.2h3.9v17.4h-3.9zM908.1 824.2h0.9v17.4h-0.9zM1003.8 824.2h1.3v17.4h-1.3zM1012.9 824.2h2.6v17.4h-2.6zM1023.3 824.2h1.3v17.4h-1.3zM1025.9 824.2h2.6v17.4h-2.6zM1045.4 824.2h2.6v17.4h-2.6zM1049.3 824.2h1.3v17.4h-1.3zM1054.5 824.2h1.3v17.4h-1.3zM1109.1 824.2h3.9v17.4h-3.9zM1116.9 824.2h2.6v17.4h-2.6zM1124.7 824.2h1.3v17.4h-1.3zM1180.6 824.2h1.3v17.4h-1.3zM1188.4 824.2h1.3v17.4h-1.3zM1194.9 824.2h1.3v17.4h-1.3zM1209.2 824.2h1.3v17.4h-1.3zM1219.6 824.2h1.3v17.4h-1.3zM1267.7 824.2h1.3v17.4h-1.3zM450.0 843.8h3.9v17.4h-3.9zM476.0 843.8h1.7v17.4h-1.7zM571.3 843.8h1.3v17.4h-1.3zM576.5 843.8h0.2v17.4h-0.2zM731.8 843.8h2.6v17.4h-2.6zM756.5 843.8h2.6v17.4h-2.6zM768.2 843.8h2.6v17.4h-2.6zM771.6 843.8h1.3v17.4h-1.3zM772.9 843.8h2.6v17.4h-2.6zM787.2 843.8h1.3v17.4h-1.3zM793.7 843.8h2.6v17.4h-2.6zM797.6 843.8h1.3v17.4h-1.3zM805.4 843.8h1.3v17.4h-1.3zM817.1 843.8h1.3v17.4h-1.3zM822.3 843.8h1.3v17.4h-1.3zM826.2 843.8h1.3v17.4h-1.3zM839.2 843.8h1.3v17.4h-1.3zM844.4 843.8h1.3v17.4h-1.3zM845.7 843.8h1.3v17.4h-1.3zM878.6 843.8h1.3v17.4h-1.3zM881.2 843.8h1.3v17.4h-1.3zM886.4 843.8h2.6v17.4h-2.6zM1175.5 843.8h1.3v17.4h-1.3zM1348.0 843.8h1.3v17.4h-1.3zM1359.7 843.8h2.6v17.4h-2.6zM1401.3 843.8h1.3v17.4h-1.3zM1512.7 843.8h1.3v17.4h-1.3zM1517.9 843.8h1.3v17.4h-1.3zM1556.3 843.8h2.6v17.4h-2.6zM1561.5 843.8h1.3v17.4h-1.3zM1573.2 843.8h0.3v17.4h-0.3zM239.7 863.4h1.3v17.4h-1.3zM243.6 863.4h1.3v17.4h-1.3zM247.5 863.4h2.6v17.4h-2.6zM264.4 863.4h2.6v17.4h-2.6zM444.8 863.4h1.3v17.4h-1.3zM456.5 863.4h1.3v17.4h-1.3zM463.0 863.4h1.3v17.4h-1.3zM473.4 863.4h2.6v17.4h-2.6zM502.0 863.4h1.2v17.4h-1.2zM576.2 863.4h2.6v17.4h-2.6zM608.0 863.4h1.3v17.4h-1.3zM637.9 863.4h1.3v17.4h-1.3zM714.4 863.4h1.3v17.4h-1.3zM715.7 863.4h1.3v17.4h-1.3zM723.5 863.4h1.3v17.4h-1.3zM779.3 863.4h1.3v17.4h-1.3zM1490.0 863.4h2.6v17.4h-2.6zM1505.6 863.4h1.3v17.4h-1.3zM1554.2 863.4h1.3v17.4h-1.3zM475.3 883.0h1.3v17.4h-1.3zM480.5 883.0h1.3v17.4h-1.3zM489.6 883.0h1.3v17.4h-1.3zM496.1 883.0h1.3v17.4h-1.3zM545.2 883.0h1.3v17.4h-1.3zM550.4 883.0h1.3v17.4h-1.3zM554.3 883.0h1.3v17.4h-1.3zM564.3 883.0h1.3v17.4h-1.3zM565.6 883.0h2.6v17.4h-2.6zM605.3 883.0h1.3v17.4h-1.3zM722.9 883.0h1.3v17.4h-1.3zM729.4 883.0h3.9v17.4h-3.9zM760.6 883.0h1.3v17.4h-1.3zM1158.6 883.0h1.3v17.4h-1.3zM1159.9 883.0h1.3v17.4h-1.3zM1163.8 883.0h1.3v17.4h-1.3zM1165.1 883.0h2.6v17.4h-2.6zM1172.9 883.0h1.3v17.4h-1.3zM1178.1 883.0h1.1v17.4h-1.1zM1484.7 883.0h2.6v17.4h-2.6z" fill="#969696"/>
<path d="M213.8 785.0h1.3v17.4h-1.3zM256.7 785.0h1.3v17.4h-1.3zM258.0 785.0h1.3v17.4h-1.3zM264.5 785.0h2.6v17.4h-2.6zM293.1 785.0h3.9v17.4h-3.9zM299.6 785.0h1.3v17.4h-1.3zM307.4 785.0h3.9v17.4h-3.9zM319.1 785.0h1.3v17.4h-1.3zM332.1 785.0h1.3v17.4h-1.3zM338.6 785.0h1.3v17.4h-1.3zM345.1 785.0h1.3v17.4h-1.3zM351.6 785.0h1.3v17.4h-1.3zM375.0 785.0h3.9v17.4h-3.9zM392.8 785.0h1.3v17.4h-1.3zM399.3 785.0h2.6v17.4h-2.6zM401.9 785.0h1.3v17.4h-1.3zM405.8 785.0h1.3v17.4h-1.3zM424.0 785.0h1.3v17.4h-1.3zM429.2 785.0h1.3v17.4h-1.3zM440.9 785.0h1.3v17.4h-1.3zM442.2 785.0h1.3v17.4h-1.3zM488.1 785.0h1.3v17.4h-1.3zM507.6 785.0h2.6v17.4h-2.6zM513.3 785.0h1.2v17.4h-1.2zM570.0 785.0h1.3v17.4h-1.3zM788.5 785.0h1.3v17.4h-1.3zM814.5 785.0h1.3v17.4h-1.3zM832.7 785.0h1.3v17.4h-1.3zM836.6 785.0h1.3v17.4h-1.3zM883.4 785.0h2.6v17.4h-2.6zM886.0 785.0h2.6v17.4h-2.6zM891.2 785.0h1.3v17.4h-1.3zM892.5 785.0h1.3v17.4h-1.3zM900.3 785.0h3.9v17.4h-3.9zM904.2 785.0h2.6v17.4h-2.6zM942.9 785.0h1.3v17.4h-1.3zM952.0 785.0h1.3v17.4h-1.3zM961.1 785.0h1.3v17.4h-1.3zM975.4 785.0h1.3v17.4h-1.3zM981.9 785.0h1.3v17.4h-1.3zM996.2 785.0h1.3v17.4h-1.3zM1014.4 785.0h3.9v17.4h-3.9zM1022.2 785.0h1.3v17.4h-1.3zM1024.8 785.0h1.3v17.4h-1.3zM1031.3 785.0h1.3v17.4h-1.3zM1046.9 785.0h1.3v17.4h-1.3zM1049.5 785.0h1.3v17.4h-1.3zM1056.0 785.0h1.3v17.4h-1.3zM1058.6 785.0h1.3v17.4h-1.3zM1061.2 785.0h1.3v17.4h-1.3zM1062.5 785.0h1.3v17.4h-1.3zM1066.4 785.0h1.3v17.4h-1.3zM1080.7 785.0h1.3v17.4h-1.3zM1091.1 785.0h2.6v17.4h-2.6zM1093.7 785.0h1.3v17.4h-1.3zM1113.2 785.0h1.3v17.4h-1.3zM1179.3 785.0h1.3v17.4h-1.3zM1197.5 785.0h1.3v17.4h-1.3zM1223.5 785.0h1.3v17.4h-1.3zM1262.1 785.0h2.6v17.4h-2.6zM1290.0 785.0h1.3v17.4h-1.3zM1291.3 785.0h0.7v17.4h-0.7zM1312.0 785.0h2.6v17.4h-2.6zM1321.1 785.0h1.3v17.4h-1.3zM1459.5 785.0h1.3v17.4h-1.3zM1460.8 785.0h1.3v17.4h-1.3zM1466.0 785.0h1.3v17.4h-1.3zM1471.2 785.0h1.3v17.4h-1.3zM221.6 804.6h2.6v17.4h-2.6zM225.5 804.6h1.3v17.4h-1.3zM232.0 804.6h1.3v17.4h-1.3zM243.0 804.6h1.3v17.4h-1.3zM254.7 804.6h1.3v17.4h-1.3zM280.7 804.6h2.6v17.4h-2.6zM334.0 804.6h1.3v17.4h-1.3zM373.0 804.6h1.3v17.4h-1.3zM840.7 804.6h1.3v17.4h-1.3zM903.1 804.6h0.4v17.4h-0.4zM967.6 804.6h1.3v17.4h-1.3zM968.9 804.6h2.6v17.4h-2.6zM1027.4 804.6h1.3v17.4h-1.3zM1033.9 804.6h2.6v17.4h-2.6zM1067.7 804.6h1.3v17.4h-1.3zM1182.3 804.6h1.3v17.4h-1.3zM1184.9 804.6h2.6v17.4h-2.6zM1209.6 804.6h3.9v17.4h-3.9zM1216.1 804.6h1.3v17.4h-1.3zM1217.4 804.6h1.3v17.4h-1.3zM1218.7 804.6h1.3v17.4h-1.3zM1229.1 804.6h1.3v17.4h-1.3zM1247.8 804.6h1.3v17.4h-1.3zM220.3 824.2h2.6v17.4h-2.6zM248.2 824.2h1.3v17.4h-1.3zM278.1 824.2h2.6v17.4h-2.6zM293.7 824.2h1.3v17.4h-1.3zM370.4 824.2h1.3v17.4h-1.3zM406.0 824.2h1.3v17.4h-1.3zM413.8 824.2h1.3v17.4h-1.3zM425.5 824.2h2.6v17.4h-2.6zM432.0 824.2h3.9v17.4h-3.9zM664.3 824.2h1.3v17.4h-1.3zM668.2 824.2h3.9v17.4h-3.9zM672.1 824.2h1.3v17.4h-1.3zM676.0 824.2h1.3v17.4h-1.3zM678.6 824.2h1.3v17.4h-1.3zM685.1 824.2h1.3v17.4h-1.3zM809.3 824.2h1.3v17.4h-1.3zM844.4 824.2h1.3v17.4h-1.3zM849.6 824.2h1.3v17.4h-1.3zM857.4 824.2h1.3v17.4h-1.3zM860.0 824.2h1.3v17.4h-1.3zM866.5 824.2h1.3v17.4h-1.3zM870.4 824.2h2.6v17.4h-2.6zM878.2 824.2h1.3v17.4h-1.3zM889.9 824.2h1.3v17.4h-1.3zM897.7 824.2h2.6v17.4h-2.6zM944.2 824.2h2.6v17.4h-2.6zM949.4 824.2h1.3v17.4h-1.3zM954.6 824.2h1.3v17.4h-1.3zM959.8 824.2h1.3v17.4h-1.3zM962.4 824.2h1.3v17.4h-1.3zM975.4 824.2h1.3v17.4h-1.3zM978.0 824.2h3.9v17.4h-3.9zM984.5 824.2h1.3v17.4h-1.3zM1084.4 824.2h2.6v17.4h-2.6zM1237.8 824.2h2.6v17.4h-2.6zM1282.5 824.2h1.3v17.4h-1.3zM1285.1 824.2h1.3v17.4h-1.3zM1286.4 824.2h0.6v17.4h-0.6zM256.5 843.8h1.3v17.4h-1.3zM281.2 843.8h1.3v17.4h-1.3zM453.9 843.8h1.3v17.4h-1.3zM512.8 843.8h2.6v17.4h-2.6zM550.5 843.8h1.3v17.4h-1.3zM553.1 843.8h1.9v17.4h-1.9zM555.0 843.8h1.3v17.4h-1.3zM560.2 843.8h1.3v17.4h-1.3zM561.5 843.8h1.3v17.4h-1.3zM717.5 843.8h1.3v17.4h-1.3zM744.8 843.8h1.3v17.4h-1.3zM765.6 843.8h2.6v17.4h-2.6zM779.4 843.8h1.3v17.4h-1.3zM792.4 843.8h1.3v17.4h-1.3zM801.5 843.8h2.6v17.4h-2.6zM810.6 843.8h1.3v17.4h-1.3zM814.5 843.8h1.3v17.4h-1.3zM841.8 843.8h1.3v17.4h-1.3zM847.0 843.8h1.3v17.4h-1.3zM853.5 843.8h1.3v17.4h-1.3zM854.8 843.8h1.2v17.4h-1.2zM877.3 843.8h1.3v17.4h-1.3zM885.1 843.8h1.3v17.4h-1.3zM899.4 843.8h1.3v17.4h-1.3zM946.8 843.8h1.3v17.4h-1.3zM950.7 843.8h1.3v17.4h-1.3zM952.0 843.8h1.3v17.4h-1.3zM955.9 843.8h0.7v17.4h-0.7zM1380.5 843.8h1.3v17.4h-1.3zM1400.0 843.8h1.3v17.4h-1.3zM1418.3 843.8h2.6v17.4h-2.6zM1424.8 843.8h1.3v17.4h-1.3zM1426.1 843.8h1.3v17.4h-1.3zM1427.4 843.8h2.6v17.4h-2.6zM1430.0 843.8h1.3v17.4h-1.3zM1449.1 843.8h2.6v17.4h-2.6zM1451.7 843.8h1.3v17.4h-1.3zM1454.3 843.8h1.3v17.4h-1.3zM1456.9 843.8h1.3v17.4h-1.3zM1475.1 843.8h1.3v17.4h-1.3zM1476.4 843.8h1.8v17.4h-1.8zM1542.0 843.8h1.3v17.4h-1.3zM233.2 863.4h2.6v17.4h-2.6zM250.1 863.4h1.3v17.4h-1.3zM464.3 863.4h1.3v17.4h-1.3zM472.1 863.4h1.3v17.4h-1.3zM485.1 863.4h2.6v17.4h-2.6zM561.9 863.4h1.3v17.4h-1.3zM564.5 863.4h1.3v17.4h-1.3zM565.8 863.4h2.6v17.4h-2.6zM568.4 863.4h2.6v17.4h-2.6zM580.1 863.4h1.9v17.4h-1.9zM697.5 863.4h1.3v17.4h-1.3zM717.0 863.4h2.6v17.4h-2.6zM741.7 863.4h2.6v17.4h-2.6zM744.3 863.4h0.7v17.4h-0.7zM746.3 863.4h1.3v17.4h-1.3zM747.6 863.4h1.3v17.4h-1.3zM1205.6 863.4h1.3v17.4h-1.3zM1221.2 863.4h1.3v17.4h-1.3zM1328.6 863.4h1.3v17.4h-1.3zM1331.2 863.4h1.3v17.4h-1.3zM1335.1 863.4h1.3v17.4h-1.3zM1336.4 863.4h1.1v17.4h-1.1zM1510.8 863.4h0.6v17.4h-0.6zM1516.6 863.4h2.6v17.4h-2.6zM1520.5 863.4h1.3v17.4h-1.3zM1523.1 863.4h1.3v17.4h-1.3zM1530.9 863.4h1.3v17.4h-1.3zM1539.9 863.4h3.9v17.4h-3.9zM470.1 883.0h2.6v17.4h-2.6zM476.6 883.0h1.3v17.4h-1.3zM487.0 883.0h1.3v17.4h-1.3zM490.9 883.0h2.6v17.4h-2.6zM498.7 883.0h1.3v17.4h-1.3zM555.6 883.0h0.4v17.4h-0.4zM560.4 883.0h2.6v17.4h-2.6zM572.1 883.0h2.6v17.4h-2.6zM1514.0 883.0h1.3v17.4h-1.3zM1525.7 883.0h1.3v17.4h-1.3zM1528.3 883.0h1.3v17.4h-1.3zM1534.8 883.0h1.3v17.4h-1.3zM1547.8 883.0h1.3v17.4h-1.3z" fill="#c8c8c8"/>
<path d="M379.3 790.4H390.2M379.3 796.8H390.2M478.0 790.4H481.6M478.0 796.8H481.6M303.0 810.0H308.0M303.0 816.4H308.0M479.0 810.0H481.0M479.0 816.4H481.0M1161.2 810.0H1173.2M1161.2 816.4H1173.2M388.0 829.6H391.7M388.0 836.0H391.7M986.9 829.6H993.4M986.9 836.0H993.4M1294.3 829.6H1394.4M1294.3 836.0H1394.4M213.8 849.2H248.7M213.8 855.6H248.7M292.7 849.2H435.7M292.7 855.6H435.7M477.7 849.2H481.6M477.7 855.6H481.6M652.5 849.2H704.5M652.5 855.6H704.5M856.0 849.2H875.5M856.0 855.6H875.5M956.6 849.2H1150.8M956.6 855.6H1150.8M1178.1 849.2H1340.2M1178.1 855.6H1340.2M1435.4 849.2H1443.9M1435.4 855.6H1443.9M1573.5 849.2H1587.4M1573.5 855.6H1587.4M213.8 868.8H224.9M213.8 875.2H224.9M273.6 868.8H444.8M273.6 875.2H444.8M503.2 868.8H559.3M503.2 875.2H559.3M648.1 868.8H693.6M648.1 875.2H693.6M782.4 868.8H907.5M782.4 875.2H907.5M938.6 868.8H1205.6M938.6 875.2H1205.6M1231.6 868.8H1315.2M1231.6 875.2H1315.2M1342.4 868.8H1474.4M1342.4 875.2H1474.4M1557.3 868.8H1587.4M1557.3 875.2H1587.4M213.8 888.4H448.0M213.8 894.8H448.0M508.6 888.4H540.0M508.6 894.8H540.0M556.0 888.4H560.4M556.0 894.8H560.4M576.7 888.4H583.2M576.7 894.8H583.2M647.0 888.4H703.4M647.0 894.8H703.4M771.6 888.4H908.9M771.6 894.8H908.9M940.3 888.4H1152.1M940.3 894.8H1152.1M1179.2 888.4H1262.8M1179.2 894.8H1262.8M1272.1 888.4H1405.1M1272.1 894.8H1405.1M1416.6 888.4H1478.2M1416.6 894.8H1478.2" stroke="#777" stroke-width="1.2" fill="none"/>
<rect x="222.4" y="765.4" width="1.2" height="17.4" fill="#ddd"/>
<rect x="244.4" y="765.4" width="1.2" height="17.4" fill="#ddd"/>
<rect x="450.4" y="765.4" width="1.2" height="17.4" fill="#ddd"/>
<rect x="476.4" y="765.4" width="1.2" height="17.4" fill="#ddd"/>
<rect x="730.9" y="765.4" width="1.2" height="17.4" fill="#ddd"/>
<rect x="997.8" y="765.4" width="1.2" height="17.4" fill="#ddd"/>
<rect x="1435.1" y="765.4" width="1.2" height="17.4" fill="#ddd"/>
<text x="899.5" y="919.0" text-anchor="middle" fill="#111" stroke="#111" stroke-width="0.3" textLength="361.0" lengthAdjust="spacingAndGlyphs">Short Genetic Variants from dbSNP release 155</text>
<text x="207.0" y="937.0" text-anchor="end" fill="#111" stroke="#111" stroke-width="0.3" textLength="164.0" lengthAdjust="spacingAndGlyphs">Common dbSNP(155)</text>
<rect x="224.4" y="921.8" width="1.3" height="19.2" fill="#000"/>
<rect x="227.9" y="921.8" width="1.3" height="19.2" fill="#000"/>
<rect x="338.6" y="921.8" width="1.3" height="19.2" fill="#2222aa"/>
<rect x="371.2" y="921.8" width="1.3" height="19.2" fill="#2222aa"/>
<rect x="379.2" y="921.8" width="1.3" height="19.2" fill="#5555bb"/>
<rect x="426.1" y="921.8" width="1.3" height="19.2" fill="#2222aa"/>
<rect x="479.8" y="921.8" width="1.3" height="19.2" fill="#2222aa"/>
<rect x="534.6" y="921.8" width="1.3" height="19.2" fill="#3333aa"/>
<rect x="547.9" y="921.8" width="1.3" height="19.2" fill="#2222aa"/>
<rect x="550.0" y="921.8" width="1.6" height="19.2" fill="#2222aa"/>
<rect x="639.0" y="921.8" width="1.5" height="19.2" fill="#e0d020"/>
<rect x="664.2" y="921.8" width="1.5" height="19.2" fill="#000"/>
<rect x="667.0" y="921.8" width="1.5" height="19.2" fill="#000"/>
<rect x="698.1" y="921.8" width="3.0" height="19.2" fill="#000"/>
<rect x="793.0" y="921.8" width="1.3" height="19.2" fill="#000"/>
<rect x="801.6" y="921.8" width="1.3" height="19.2" fill="#000"/>
<rect x="808.9" y="921.8" width="1.3" height="19.2" fill="#000"/>
<rect x="822.6" y="921.8" width="1.3" height="19.2" fill="#000"/>
<rect x="830.5" y="921.8" width="1.3" height="19.2" fill="#000"/>
<rect x="836.0" y="921.8" width="1.3" height="19.2" fill="#000"/>
<rect x="852.8" y="921.8" width="1.3" height="19.2" fill="#000"/>
<rect x="867.1" y="921.8" width="1.3" height="19.2" fill="#000"/>
<rect x="876.7" y="921.8" width="2.4" height="19.2" fill="#000"/>
<rect x="899.0" y="921.8" width="1.3" height="19.2" fill="#000"/>
<rect x="942.9" y="921.8" width="1.3" height="19.2" fill="#000"/>
<rect x="977.3" y="921.8" width="2.2" height="19.2" fill="#000"/>
<rect x="1044.8" y="921.8" width="1.3" height="19.2" fill="#000"/>
<rect x="1057.8" y="921.8" width="1.3" height="19.2" fill="#000"/>
<rect x="1173.8" y="921.8" width="1.3" height="19.2" fill="#222"/>
<rect x="1184.5" y="921.8" width="1.3" height="19.2" fill="#222"/>
<rect x="1198.5" y="921.8" width="1.3" height="19.2" fill="#2222aa"/>
<rect x="1274.6" y="921.8" width="1.3" height="19.2" fill="#5555cc"/>
<rect x="1340.0" y="921.8" width="1.3" height="19.2" fill="#2222aa"/>
<rect x="1424.6" y="921.8" width="1.3" height="19.2" fill="#2222aa"/>
<rect x="1436.5" y="921.8" width="1.3" height="19.2" fill="#5555bb"/>
<rect x="1523.8" y="921.8" width="1.3" height="19.2" fill="#2222aa"/>
<rect x="1536.8" y="921.8" width="1.3" height="19.2" fill="#2222aa"/>
<text x="901.0" y="959.5" text-anchor="middle" fill="#111" stroke="#111" stroke-width="0.3" textLength="290.0" lengthAdjust="spacingAndGlyphs">Repeating Elements by RepeatMasker</text>
<text x="207.0" y="977.5" text-anchor="end" fill="#111" stroke="#111" stroke-width="0.3" textLength="110.0" lengthAdjust="spacingAndGlyphs">RepeatMasker</text>
<rect x="476.4" y="962.0" width="6.0" height="19.4" fill="#000"/>
<rect x="547.4" y="962.0" width="2.6" height="19.4" fill="#000"/>
<rect x="556.6" y="962.0" width="3.8" height="19.4" fill="#000"/>
<rect x="698.0" y="962.0" width="3.2" height="19.4" fill="#000"/>
<rect x="752.6" y="962.0" width="3.4" height="19.4" fill="#000"/>
<rect x="1027.2" y="962.0" width="4.3" height="19.4" fill="#000"/>
<rect x="1231.1" y="962.0" width="5.9" height="19.4" fill="#000"/>
<rect x="1275.9" y="962.0" width="7.6" height="19.4" fill="#000"/>
<rect x="1518.9" y="962.0" width="8.7" height="19.4" fill="#000"/>
</g>
<path d="M660.3 507.6V495Q660.3 493.3 662.1 493.3Q664 493.3 664 495V499.2Q664.3 498.2 665.8 498.3Q667.2 498.4 667.3 499.6Q667.6 498.8 668.8 498.9Q670 499 670.1 500.3Q670.6 499.7 671.6 499.9Q672.9 500.2 672.9 501.5V509Q672.9 513 670.5 515.3Q668.5 516.8 665.5 516.8Q662.5 516.3 660 513.3L655.6 507.8Q654.6 506.3 656 505.4Q657.3 504.8 658.6 506Z" fill="#fff" stroke="#111" stroke-width="1.25" stroke-linejoin="round"/>
<path d="M664 499V504M667.2 499.8V504M670.1 500.3V504" fill="none" stroke="#111" stroke-width="1.1"/>
</svg>
<div class="btn" style="left:39px;top:1002.5px;width:97px;height:30.5px;line-height:29.6px">Collapse all</div>
<div class="btn" style="left:445px;top:1002.5px;width:108px;height:30.5px;line-height:29.6px">Track search</div>
<div class="btn" style="left:559px;top:1002.5px;width:80px;height:30.5px;line-height:29.6px">Highlight</div>
<div class="btn" style="left:646px;top:1002.5px;width:69px;height:30.5px;line-height:29.6px">Hide all</div>
<div class="btn" style="left:721px;top:1002.5px;width:154px;height:30.5px;line-height:29.6px">Add custom tracks</div>
<div class="btn" style="left:881px;top:1002.5px;width:85px;height:30.5px;line-height:29.6px">Configure</div>
<div class="btn" style="left:972px;top:1002.5px;width:73px;height:30.5px;line-height:29.6px">Reverse</div>
<div class="btn" style="left:1051px;top:1002.5px;width:61px;height:30.5px;line-height:29.6px">Resize</div>
<div class="btn" style="left:1466px;top:1002.5px;width:91px;height:30.5px;line-height:29.6px">Expand all</div>
<div class="abs" style="left:37px;top:1036px;width:1522px;height:41px;background:#00457c"></div>
<div class="abs" style="left:42.5px;top:1044.5px;width:26.5px;height:25px;box-sizing:border-box;border:1.3px solid #222;background:#fff;border-radius:2px"><div class="abs" style="left:7.5px;top:9.5px;width:9px;height:3px;background:#222"></div></div>
<div class="abs" style="left:37px;top:1045.5px;width:1478px;text-align:center;color:#fff;font-weight:bold;font-size:19.9px;line-height:26px;font-family:'DejaVu Sans','Liberation Sans',sans-serif;-webkit-text-stroke:0.9px #fff">Mapping and Sequencing</div>
<div class="btn" style="left:1483px;top:1041.5px;width:70.5px;height:30px;line-height:29.4px">Refresh</div>
<div class="abs" id="links" style="left:0;top:1080px;width:1593px;height:10px;overflow:hidden;font-size:20.8px;line-height:24px;color:#1a1aa6;white-space:nowrap">
<span class="abs" style="left:38px;top:1px">Base Position</span>
<span class="abs" style="left:227px;top:1px"><b style="color:#000;font-size:13.2px;font-style:italic;position:relative;top:-6px">R14</b> Fix Patches</span>
<span class="abs" style="left:437px;top:1px"><b style="color:#000;font-size:13.2px;font-style:italic;position:relative;top:-6px">R14</b> Alt Haplotypes</span>
<span class="abs" style="left:619px;top:1px">Assembly</span>
<svg class="abs" style="left:773px;top:2px" width="18" height="14"><path d="M0 2Q0 0.500000 1.5 0.5H7L9 2.5H15.5Q17 2.5 17 4V14H0Z" fill="#0a3c7c"/></svg><span class="abs" style="left:795px;top:1px">Assembly Tracks</span>
<span class="abs" style="left:971px;top:1px">Centromeres</span>
<span class="abs" style="left:1180px;top:1px">Chromosome</span>
<svg class="abs" style="left:1334px;top:2px" width="18" height="14"><path d="M0 2Q0 0.500000 1.5 0.5H7L9 2.5H15.5Q17 2.5 17 4V14H0Z" fill="#0a3c7c"/></svg><span class="abs" style="left:1357.5px;top:1px">Clone Ends</span>
</div>
</body></html>
